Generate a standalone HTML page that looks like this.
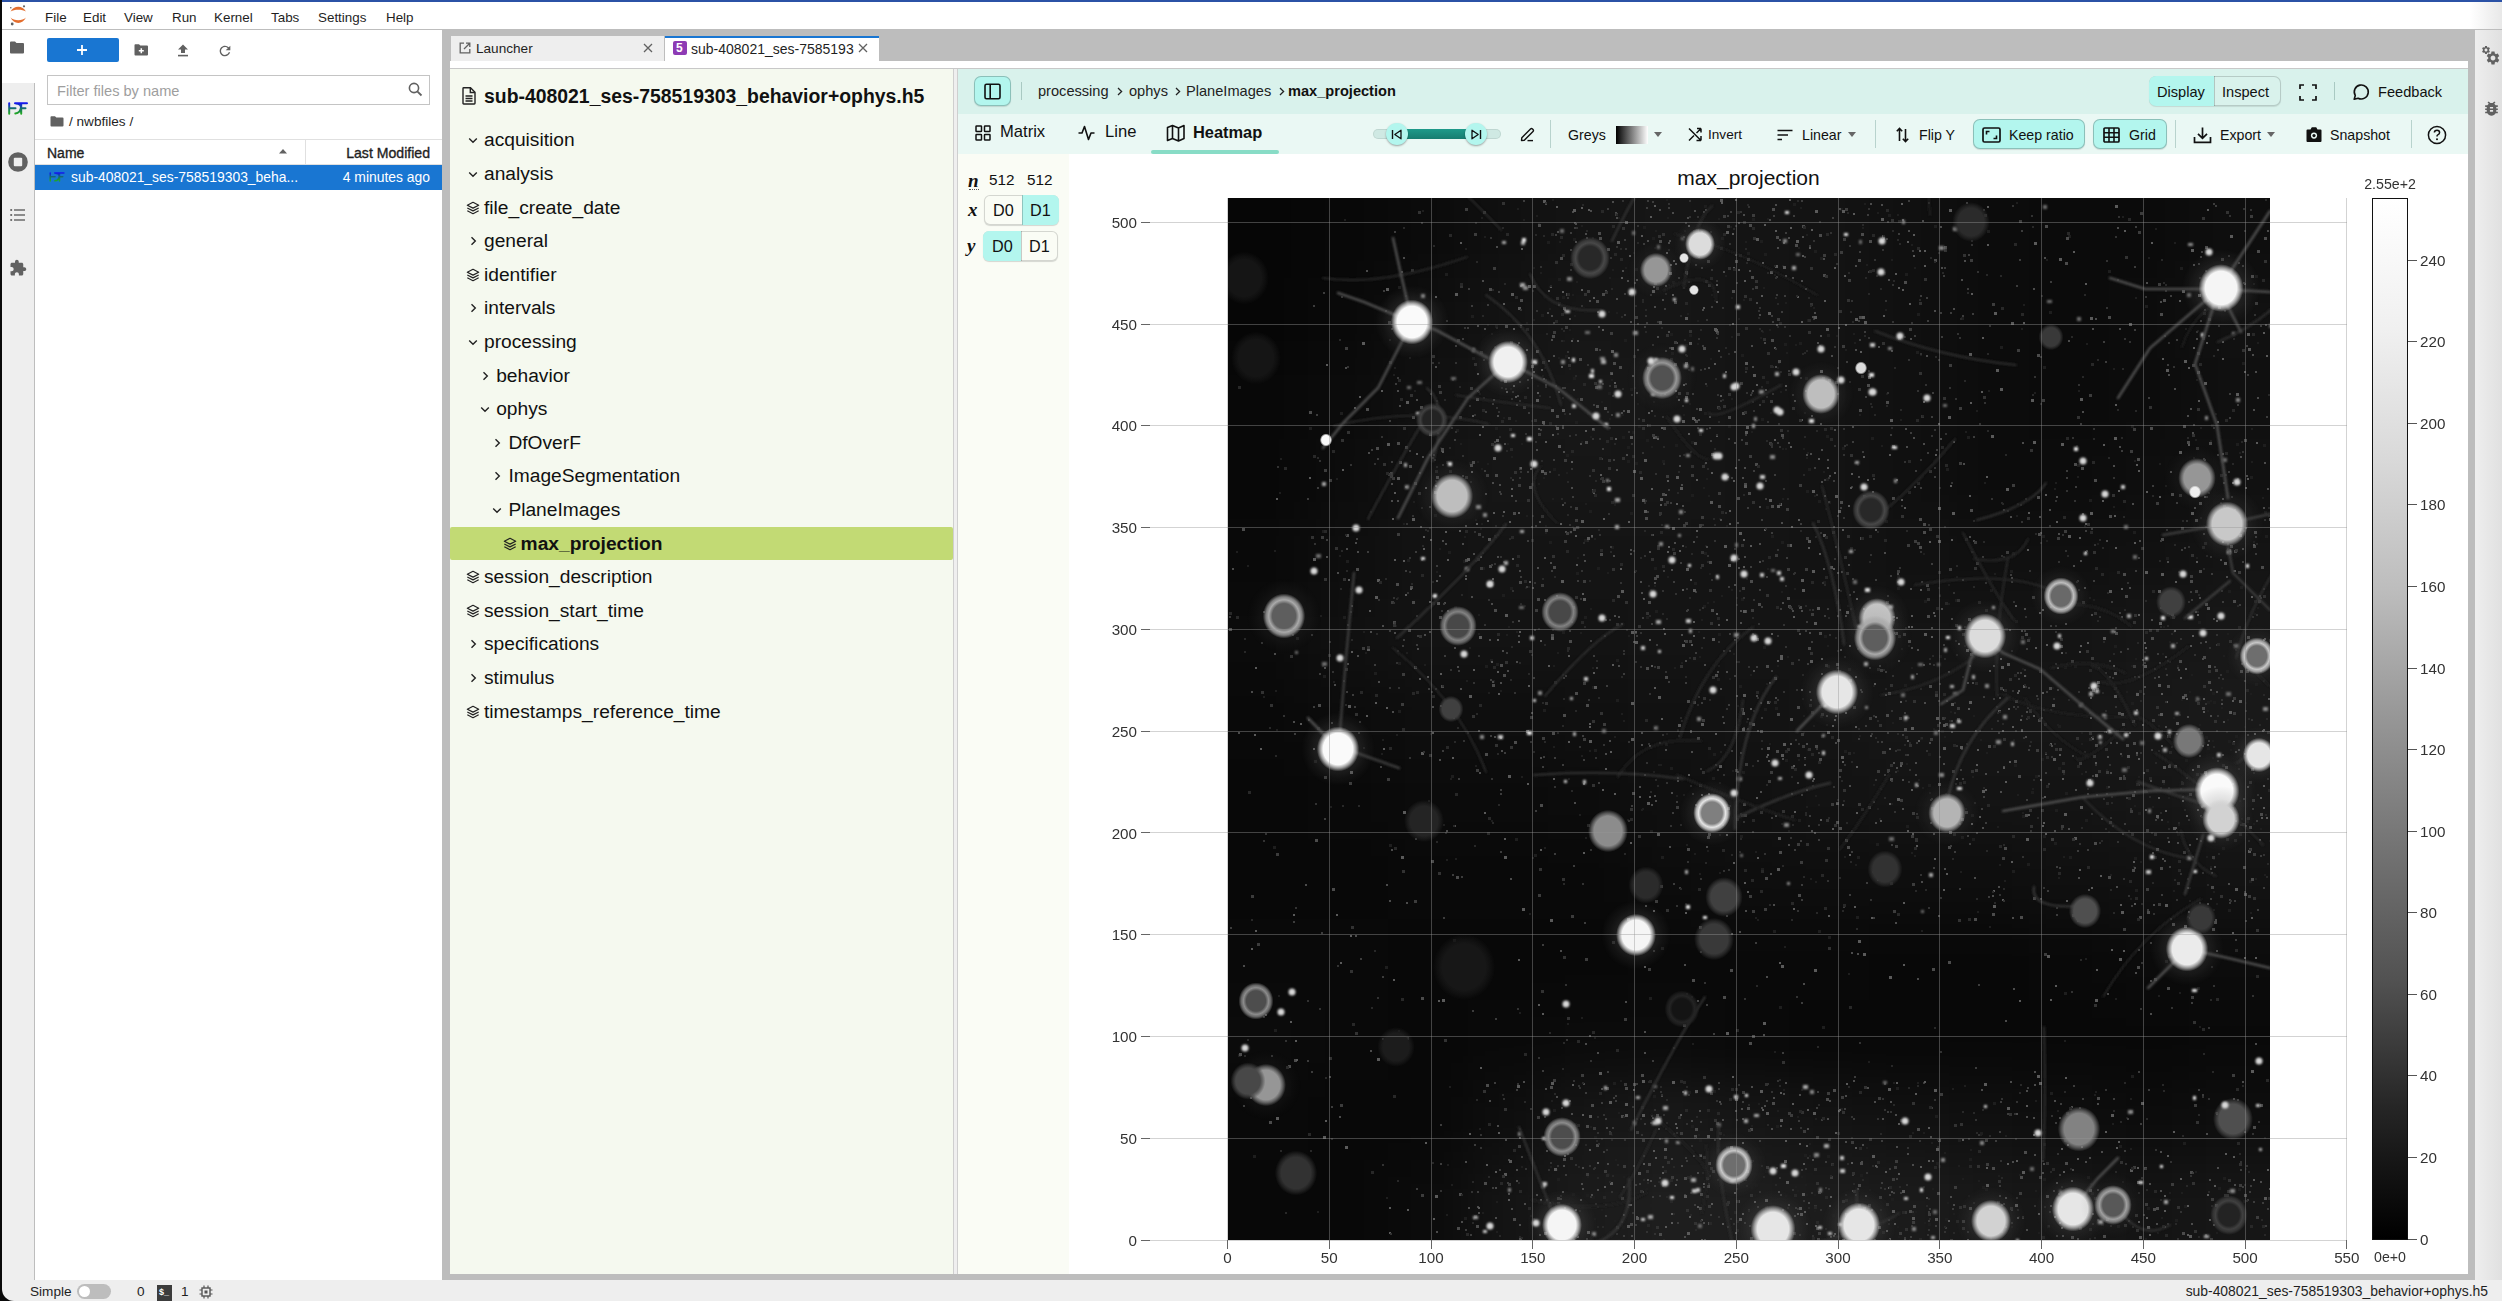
<!DOCTYPE html><html><head><meta charset="utf-8"><style>
*{box-sizing:border-box;margin:0;padding:0}
html,body{width:2502px;height:1301px;overflow:hidden;background:#fff;font-family:"Liberation Sans", sans-serif;color:rgba(0,0,0,0.87)}
.a{position:absolute}
.t{position:absolute;white-space:nowrap;line-height:1}
svg{position:absolute;overflow:visible}
</style></head><body>
<div class="a" style="left:0;top:0;width:2502px;height:2px;background:#2b52a6"></div>
<div class="a" style="left:0;top:0;width:2px;height:1301px;background:#0a0a0a"></div>
<div class="a" style="left:2px;top:2px;width:2500px;height:28px;background:#fff;border-bottom:1px solid #bdbdbd"></div>
<svg style="left:9px;top:5px" width="20" height="22" viewBox="0 0 20 22">
<path d="M1.6 6.6 C4.5 0.2 14 0.2 16.9 6.6 C13.5 4.0 5 4.0 1.6 6.6Z" fill="#e46e2e"/>
<path d="M1.6 12.6 C4.5 19.8 14 19.8 16.9 12.6 C13.5 16.2 5 16.2 1.6 12.6Z" fill="#e46e2e"/>
<circle cx="3.2" cy="19" r="1.4" fill="#616161"/><circle cx="15" cy="1.3" r="1.1" fill="#616161"/><circle cx="1.8" cy="2.8" r="0.8" fill="#616161"/>
</svg>
<div class="t" style="left:45px;top:11px;font-size:13.4px;color:#1f1f1f">File</div>
<div class="t" style="left:83px;top:11px;font-size:13.4px;color:#1f1f1f">Edit</div>
<div class="t" style="left:124px;top:11px;font-size:13.4px;color:#1f1f1f">View</div>
<div class="t" style="left:172px;top:11px;font-size:13.4px;color:#1f1f1f">Run</div>
<div class="t" style="left:214px;top:11px;font-size:13.4px;color:#1f1f1f">Kernel</div>
<div class="t" style="left:271px;top:11px;font-size:13.4px;color:#1f1f1f">Tabs</div>
<div class="t" style="left:318px;top:11px;font-size:13.4px;color:#1f1f1f">Settings</div>
<div class="t" style="left:386px;top:11px;font-size:13.4px;color:#1f1f1f">Help</div>
<div class="a" style="left:2470px;top:2px;width:32px;height:27px;background:linear-gradient(90deg,#fff,#e8e8e8)"></div>
<div class="a" style="left:2px;top:30px;width:33px;height:1250px;background:#eeeeee;border-right:1px solid #bdbdbd"></div>
<div class="a" style="left:2px;top:30px;width:34px;height:53px;background:#fff"></div>
<svg style="left:9px;top:41px" width="16" height="13" viewBox="0 0 16 13"><path d="M1 1.5 Q1 0.5 2 0.5 H6 L7.5 2 H14 Q15 2 15 3 V11.5 Q15 12.5 14 12.5 H2 Q1 12.5 1 11.5Z" fill="#616161"/></svg>
<svg style="left:8px;top:102px" width="20" height="13" viewBox="0 0 20 13"><defs><linearGradient id="hg1" x1="0" y1="0" x2="0" y2="1"><stop offset="0" stop-color="#1414f0"/><stop offset="0.5" stop-color="#14706a"/><stop offset="1" stop-color="#22aa22"/></linearGradient></defs><g stroke="url(#hg1)" stroke-width="2" fill="none" stroke-linecap="round"><path d="M1.2 1.2V11.8M1.2 6.3H7.5M7 1.2H19M13.2 1.5V11.8M13 6.3H17.5M7.3 11.5Q12.5 11 13 5Q12.5 1.8 8 1.5"/></g></svg>
<svg style="left:8px;top:151.5px" width="20" height="20" viewBox="0 0 20 20"><circle cx="10" cy="10" r="9.8" fill="#616161"/><rect x="5.8" y="5.8" width="8.4" height="8.4" rx="1" fill="#eee"/></svg>
<svg style="left:10px;top:208px" width="16" height="14" viewBox="0 0 16 14"><g fill="#616161"><circle cx="1.2" cy="2" r="1.1"/><circle cx="1.2" cy="7" r="1.1"/><circle cx="1.2" cy="12" r="1.1"/><rect x="4" y="1.3" width="11" height="1.4"/><rect x="4" y="6.3" width="11" height="1.4"/><rect x="4" y="11.3" width="11" height="1.4"/></g></svg>
<svg style="left:9px;top:259px" width="18" height="18" viewBox="0 0 24 24"><path fill="#616161" d="M20.5 11H19V7c0-1.1-.9-2-2-2h-4V3.5C13 2.12 11.88 1 10.5 1S8 2.12 8 3.5V5H4c-1.1 0-1.99.9-1.99 2v3.8H3.5c1.49 0 2.7 1.21 2.7 2.7s-1.21 2.7-2.7 2.7H2V20c0 1.1.9 2 2 2h3.8v-1.5c0-1.49 1.21-2.7 2.7-2.7 1.49 0 2.7 1.21 2.7 2.7V22H17c1.1 0 2-.9 2-2v-4h1.5c1.38 0 2.5-1.12 2.5-2.5S21.88 11 20.5 11z"/></svg>
<div class="a" style="left:35px;top:30px;width:407px;height:1250px;background:#fff"></div>
<div class="a" style="left:47px;top:38px;width:72px;height:24px;background:#1976d2;border-radius:2px"></div>
<svg style="left:76px;top:44px" width="12" height="12" viewBox="0 0 12 12"><path d="M6 1V11M1 6H11" stroke="#fff" stroke-width="1.8"/></svg>
<svg style="left:134px;top:44px" width="15" height="12" viewBox="0 0 15 12"><path d="M0.5 1.2 Q0.5 0.3 1.4 0.3 H5 L6.3 1.6 H13 Q14 1.6 14 2.6 V10.6 Q14 11.5 13 11.5 H1.4 Q0.5 11.5 0.5 10.6Z" fill="#616161"/><path d="M7.3 4.3V9.3M4.8 6.8H9.8" stroke="#fff" stroke-width="1.5"/></svg>
<svg style="left:177px;top:44px" width="12" height="13" viewBox="0 0 12 13"><path d="M6 0.5 L11 5.5 H8 V9 H4 V5.5 H1Z" fill="#616161"/><rect x="1" y="10.8" width="10" height="1.6" fill="#616161"/></svg>
<svg style="left:216.5px;top:42.5px" width="16" height="16" viewBox="0 0 24 24"><path fill="#616161" d="M17.65 6.35A7.958 7.958 0 0 0 12 4c-4.42 0-7.99 3.58-7.99 8s3.57 8 7.99 8c3.73 0 6.84-2.55 7.73-6h-2.08A5.99 5.99 0 0 1 12 18c-3.31 0-6-2.69-6-6s2.69-6 6-6c1.66 0 3.14.69 4.22 1.78L13 11h7V4l-2.35 2.35z"/></svg>
<div class="a" style="left:47px;top:75px;width:383px;height:30px;border:1px solid #c4c4c4;background:#fff"></div>
<div class="t" style="left:57px;top:84px;font-size:14.6px;color:#9e9e9e">Filter files by name</div>
<svg style="left:408px;top:82px" width="15" height="15" viewBox="0 0 15 15"><circle cx="6" cy="6" r="4.6" stroke="#616161" stroke-width="1.6" fill="none"/><path d="M9.3 9.3 L13.5 13.5" stroke="#616161" stroke-width="1.8"/></svg>
<svg style="left:50px;top:116px" width="14" height="11" viewBox="0 0 14 11"><path d="M0.5 1.2 Q0.5 0.3 1.4 0.3 H5 L6.3 1.6 H12.5 Q13.5 1.6 13.5 2.6 V9.6 Q13.5 10.5 12.5 10.5 H1.4 Q0.5 10.5 0.5 9.6Z" fill="#616161"/></svg>
<div class="t" style="left:69px;top:115px;font-size:13.6px;color:#1f1f1f">/ nwbfiles /</div>
<div class="a" style="left:35px;top:139px;width:407px;height:26px;border-top:1px solid #e0e0e0;border-bottom:1px solid #e0e0e0"></div>
<div class="a" style="left:305px;top:140px;width:1px;height:25px;background:#e0e0e0"></div>
<div class="t" style="left:47px;top:146px;font-size:14px;color:#1f1f1f;-webkit-text-stroke:0.35px #1f1f1f">Name</div>
<svg style="left:278px;top:148px" width="10" height="6" viewBox="0 0 10 6"><path d="M1 5.5 L5 1 L9 5.5Z" fill="#616161"/></svg>
<div class="t" style="right:2072px;top:146px;font-size:14.1px;color:#1f1f1f;-webkit-text-stroke:0.35px #1f1f1f">Last Modified</div>
<div class="a" style="left:35px;top:165px;width:407px;height:25px;background:#1976d2"></div>
<svg style="left:49px;top:172px" width="16" height="10" viewBox="0 0 20 13"><defs><linearGradient id="hg2" x1="0" y1="0" x2="0" y2="1"><stop offset="0" stop-color="#1414f0"/><stop offset="0.5" stop-color="#14706a"/><stop offset="1" stop-color="#22aa22"/></linearGradient></defs><g stroke="url(#hg2)" stroke-width="2" fill="none" stroke-linecap="round"><path d="M1.2 1.2V11.8M1.2 6.3H7.5M7 1.2H19M13.2 1.5V11.8M13 6.3H17.5M7.3 11.5Q12.5 11 13 5Q12.5 1.8 8 1.5"/></g></svg>
<div class="t" style="left:71px;top:171px;font-size:13.9px;color:#fff">sub-408021_ses-758519303_beha...</div>
<div class="t" style="right:2072px;top:171px;font-size:13.9px;color:#fff">4 minutes ago</div>
<div class="a" style="left:442px;top:30px;width:2026px;height:1250px;background:#bdbdbd"></div>
<div class="a" style="left:450px;top:35px;width:215px;height:26px;background:#eeeeee;border:1px solid #bdbdbd;border-bottom:none"></div>
<svg style="left:459px;top:42px" width="12" height="12" viewBox="0 0 12 12"><path d="M5 1.2 H1.2 V10.8 H10.8 V7" stroke="#616161" stroke-width="1.3" fill="none"/><path d="M7 1.2 H10.8 V5 M10.8 1.2 L5 7" stroke="#616161" stroke-width="1.3" fill="none"/></svg>
<div class="t" style="left:476px;top:42px;font-size:13.6px;color:#1f1f1f">Launcher</div>
<svg style="left:643px;top:43px" width="10" height="10" viewBox="0 0 10 10"><path d="M1 1L9 9M9 1L1 9" stroke="#616161" stroke-width="1.3"/></svg>
<div class="a" style="left:665px;top:36px;width:214px;height:25px;background:#fff;border-top:2px solid #1976d2"></div>
<div class="a" style="left:673px;top:41px;width:14px;height:14px;background:#8e3bb5;border-radius:2px"></div>
<div class="t" style="left:676px;top:42px;font-size:12px;color:#fff;font-weight:bold">5</div>
<div class="t" style="left:691px;top:42px;font-size:14px;color:#1f1f1f">sub-408021_ses-7585193</div>
<svg style="left:858px;top:43px" width="10" height="10" viewBox="0 0 10 10"><path d="M1 1L9 9M9 1L1 9" stroke="#616161" stroke-width="1.3"/></svg>
<div class="a" style="left:450px;top:61px;width:2018px;height:8px;background:#fff;border-bottom:1px solid #c8c8c8"></div>
<div class="a" style="left:450px;top:69px;width:503px;height:1205px;background:#f5f9ef"></div>
<div class="a" style="left:953px;top:69px;width:5px;height:1205px;background:#efefef;border-left:1px solid #cfcfcf;border-right:1px solid #cfcfcf"></div>
<svg style="left:462px;top:87px" width="14" height="18" viewBox="0 0 14 18"><path d="M1 1.5 Q1 0.8 1.7 0.8 H8.5 L13 5.3 V16.3 Q13 17 12.3 17 H1.7 Q1 17 1 16.3Z" stroke="#222" stroke-width="1.4" fill="none"/><path d="M8.3 1 V5.5 H12.8" stroke="#222" stroke-width="1.4" fill="none"/><path d="M3.5 9H10.5M3.5 11.5H10.5M3.5 14H10.5" stroke="#222" stroke-width="1.3"/></svg>
<div class="t" style="left:484px;top:87px;font-size:19.4px;font-weight:bold;color:#111">sub-408021_ses-758519303_behavior+ophys.h5</div>
<svg style="left:468.0px;top:137.4px" width="10" height="7" viewBox="0 0 10 7"><path d="M1.2 1.5 L5 5.3 L8.8 1.5" stroke="#222" stroke-width="1.4" fill="none"/></svg>
<div class="t" style="left:484.0px;top:130.4px;font-size:19.2px;font-weight:normal;color:#111">acquisition</div>
<svg style="left:468.0px;top:171.0px" width="10" height="7" viewBox="0 0 10 7"><path d="M1.2 1.5 L5 5.3 L8.8 1.5" stroke="#222" stroke-width="1.4" fill="none"/></svg>
<div class="t" style="left:484.0px;top:164.0px;font-size:19.2px;font-weight:normal;color:#111">analysis</div>
<svg style="left:466.0px;top:200.6px" width="14" height="14" viewBox="0 0 16 16"><path d="M8 1.5 L14.5 4.8 L8 8.1 L1.5 4.8Z" stroke="#222" stroke-width="1.4" fill="none" stroke-linejoin="round"/><path d="M1.5 8 L8 11.3 L14.5 8" stroke="#222" stroke-width="1.4" fill="none" stroke-linejoin="round"/><path d="M1.5 11.2 L8 14.5 L14.5 11.2" stroke="#222" stroke-width="1.4" fill="none" stroke-linejoin="round"/></svg>
<div class="t" style="left:484.0px;top:197.6px;font-size:19.2px;font-weight:normal;color:#111">file_create_date</div>
<svg style="left:470.0px;top:236.2px" width="7" height="10" viewBox="0 0 7 10"><path d="M1.5 1.2 L5.3 5 L1.5 8.8" stroke="#222" stroke-width="1.4" fill="none"/></svg>
<div class="t" style="left:484.0px;top:231.2px;font-size:19.2px;font-weight:normal;color:#111">general</div>
<svg style="left:466.0px;top:267.8px" width="14" height="14" viewBox="0 0 16 16"><path d="M8 1.5 L14.5 4.8 L8 8.1 L1.5 4.8Z" stroke="#222" stroke-width="1.4" fill="none" stroke-linejoin="round"/><path d="M1.5 8 L8 11.3 L14.5 8" stroke="#222" stroke-width="1.4" fill="none" stroke-linejoin="round"/><path d="M1.5 11.2 L8 14.5 L14.5 11.2" stroke="#222" stroke-width="1.4" fill="none" stroke-linejoin="round"/></svg>
<div class="t" style="left:484.0px;top:264.8px;font-size:19.2px;font-weight:normal;color:#111">identifier</div>
<svg style="left:470.0px;top:303.4px" width="7" height="10" viewBox="0 0 7 10"><path d="M1.5 1.2 L5.3 5 L1.5 8.8" stroke="#222" stroke-width="1.4" fill="none"/></svg>
<div class="t" style="left:484.0px;top:298.4px;font-size:19.2px;font-weight:normal;color:#111">intervals</div>
<svg style="left:468.0px;top:339.0px" width="10" height="7" viewBox="0 0 10 7"><path d="M1.2 1.5 L5 5.3 L8.8 1.5" stroke="#222" stroke-width="1.4" fill="none"/></svg>
<div class="t" style="left:484.0px;top:332.0px;font-size:19.2px;font-weight:normal;color:#111">processing</div>
<svg style="left:482.2px;top:370.6px" width="7" height="10" viewBox="0 0 7 10"><path d="M1.5 1.2 L5.3 5 L1.5 8.8" stroke="#222" stroke-width="1.4" fill="none"/></svg>
<div class="t" style="left:496.2px;top:365.6px;font-size:19.2px;font-weight:normal;color:#111">behavior</div>
<svg style="left:480.2px;top:406.2px" width="10" height="7" viewBox="0 0 10 7"><path d="M1.2 1.5 L5 5.3 L8.8 1.5" stroke="#222" stroke-width="1.4" fill="none"/></svg>
<div class="t" style="left:496.2px;top:399.2px;font-size:19.2px;font-weight:normal;color:#111">ophys</div>
<svg style="left:494.4px;top:437.8px" width="7" height="10" viewBox="0 0 7 10"><path d="M1.5 1.2 L5.3 5 L1.5 8.8" stroke="#222" stroke-width="1.4" fill="none"/></svg>
<div class="t" style="left:508.4px;top:432.8px;font-size:19.2px;font-weight:normal;color:#111">DfOverF</div>
<svg style="left:494.4px;top:471.4px" width="7" height="10" viewBox="0 0 7 10"><path d="M1.5 1.2 L5.3 5 L1.5 8.8" stroke="#222" stroke-width="1.4" fill="none"/></svg>
<div class="t" style="left:508.4px;top:466.4px;font-size:19.2px;font-weight:normal;color:#111">ImageSegmentation</div>
<svg style="left:492.4px;top:507.0px" width="10" height="7" viewBox="0 0 10 7"><path d="M1.2 1.5 L5 5.3 L8.8 1.5" stroke="#222" stroke-width="1.4" fill="none"/></svg>
<div class="t" style="left:508.4px;top:500.0px;font-size:19.2px;font-weight:normal;color:#111">PlaneImages</div>
<div class="a" style="left:450px;top:526.6px;width:503px;height:33px;background:#c2da74;border-radius:2px"></div>
<svg style="left:502.6px;top:536.6px" width="14" height="14" viewBox="0 0 16 16"><path d="M8 1.5 L14.5 4.8 L8 8.1 L1.5 4.8Z" stroke="#222" stroke-width="1.4" fill="none" stroke-linejoin="round"/><path d="M1.5 8 L8 11.3 L14.5 8" stroke="#222" stroke-width="1.4" fill="none" stroke-linejoin="round"/><path d="M1.5 11.2 L8 14.5 L14.5 11.2" stroke="#222" stroke-width="1.4" fill="none" stroke-linejoin="round"/></svg>
<div class="t" style="left:520.6px;top:533.6px;font-size:19.2px;font-weight:bold;color:#111">max_projection</div>
<svg style="left:466.0px;top:570.2px" width="14" height="14" viewBox="0 0 16 16"><path d="M8 1.5 L14.5 4.8 L8 8.1 L1.5 4.8Z" stroke="#222" stroke-width="1.4" fill="none" stroke-linejoin="round"/><path d="M1.5 8 L8 11.3 L14.5 8" stroke="#222" stroke-width="1.4" fill="none" stroke-linejoin="round"/><path d="M1.5 11.2 L8 14.5 L14.5 11.2" stroke="#222" stroke-width="1.4" fill="none" stroke-linejoin="round"/></svg>
<div class="t" style="left:484.0px;top:567.2px;font-size:19.2px;font-weight:normal;color:#111">session_description</div>
<svg style="left:466.0px;top:603.8px" width="14" height="14" viewBox="0 0 16 16"><path d="M8 1.5 L14.5 4.8 L8 8.1 L1.5 4.8Z" stroke="#222" stroke-width="1.4" fill="none" stroke-linejoin="round"/><path d="M1.5 8 L8 11.3 L14.5 8" stroke="#222" stroke-width="1.4" fill="none" stroke-linejoin="round"/><path d="M1.5 11.2 L8 14.5 L14.5 11.2" stroke="#222" stroke-width="1.4" fill="none" stroke-linejoin="round"/></svg>
<div class="t" style="left:484.0px;top:600.8px;font-size:19.2px;font-weight:normal;color:#111">session_start_time</div>
<svg style="left:470.0px;top:639.4px" width="7" height="10" viewBox="0 0 7 10"><path d="M1.5 1.2 L5.3 5 L1.5 8.8" stroke="#222" stroke-width="1.4" fill="none"/></svg>
<div class="t" style="left:484.0px;top:634.4px;font-size:19.2px;font-weight:normal;color:#111">specifications</div>
<svg style="left:470.0px;top:673.0px" width="7" height="10" viewBox="0 0 7 10"><path d="M1.5 1.2 L5.3 5 L1.5 8.8" stroke="#222" stroke-width="1.4" fill="none"/></svg>
<div class="t" style="left:484.0px;top:668.0px;font-size:19.2px;font-weight:normal;color:#111">stimulus</div>
<svg style="left:466.0px;top:704.6px" width="14" height="14" viewBox="0 0 16 16"><path d="M8 1.5 L14.5 4.8 L8 8.1 L1.5 4.8Z" stroke="#222" stroke-width="1.4" fill="none" stroke-linejoin="round"/><path d="M1.5 8 L8 11.3 L14.5 8" stroke="#222" stroke-width="1.4" fill="none" stroke-linejoin="round"/><path d="M1.5 11.2 L8 14.5 L14.5 11.2" stroke="#222" stroke-width="1.4" fill="none" stroke-linejoin="round"/></svg>
<div class="t" style="left:484.0px;top:701.6px;font-size:19.2px;font-weight:normal;color:#111">timestamps_reference_time</div>
<div class="a" style="left:958px;top:69px;width:1510px;height:45px;background:#d9f2ec"></div>
<div class="a" style="left:974px;top:76px;width:37px;height:30px;background:#b3f6ee;border-radius:7px;box-shadow:inset 0 0 0 1px rgba(0,0,0,0.22),0 1px 1px rgba(0,0,0,0.12)"></div>
<svg style="left:984px;top:83px" width="17" height="17" viewBox="0 0 17 17"><rect x="1" y="1.3" width="15" height="14.4" rx="1.5" stroke="#111" stroke-width="1.6" fill="none"/><path d="M6.2 1.3V15.7" stroke="#111" stroke-width="1.6"/></svg>
<div class="a" style="left:1021px;top:82px;width:1px;height:18px;background:#a9c9c2"></div>
<div class="t" style="left:1038px;top:84px;font-size:14.6px;color:#222">processing</div>
<div class="t" style="left:1129px;top:84px;font-size:14.6px;color:#222">ophys</div>
<div class="t" style="left:1186px;top:84px;font-size:14.6px;color:#222">PlaneImages</div>
<div class="t" style="left:1288px;top:84px;font-size:14.6px;color:#111;font-weight:bold">max_projection</div>
<svg style="left:1117px;top:87px" width="6" height="9" viewBox="0 0 6 9"><path d="M1 1 L4.6 4.5 L1 8" stroke="#222" stroke-width="1.3" fill="none"/></svg>
<svg style="left:1175px;top:87px" width="6" height="9" viewBox="0 0 6 9"><path d="M1 1 L4.6 4.5 L1 8" stroke="#222" stroke-width="1.3" fill="none"/></svg>
<svg style="left:1279px;top:87px" width="6" height="9" viewBox="0 0 6 9"><path d="M1 1 L4.6 4.5 L1 8" stroke="#222" stroke-width="1.3" fill="none"/></svg>
<div class="a" style="left:2149px;top:76px;width:132px;height:30px;border-radius:7px;background:#d9f2ec;box-shadow:inset 0 0 0 1px rgba(0,0,0,0.16),0 1px 1px rgba(0,0,0,0.1);overflow:hidden"><div class="a" style="left:0;top:0;width:65px;height:30px;background:#b3f6ee"></div><div class="a" style="left:65px;top:0;width:1px;height:30px;background:rgba(0,0,0,0.18)"></div></div>
<div class="t" style="left:2157px;top:85px;font-size:14.6px;color:#111">Display</div>
<div class="t" style="left:2222px;top:85px;font-size:14.6px;color:#111">Inspect</div>
<svg style="left:2299px;top:84px" width="18" height="17" viewBox="0 0 18 17"><path d="M1 5V1H5M13 1H17V5M17 12V16H13M5 16H1V12" stroke="#111" stroke-width="1.7" fill="none"/></svg>
<div class="a" style="left:2334px;top:82px;width:1px;height:18px;background:#a9c9c2"></div>
<svg style="left:2352px;top:83px" width="18" height="18" viewBox="0 0 18 18"><path d="M2.2 16.3 L3.3 12.6 A7 7 0 1 1 6.1 15.2 Z" stroke="#111" stroke-width="1.6" fill="none" stroke-linejoin="round"/></svg>
<div class="t" style="left:2378px;top:85px;font-size:14.6px;color:#111">Feedback</div>
<div class="a" style="left:958px;top:114px;width:1510px;height:40px;background:#eaf8f4"></div>
<svg style="left:975px;top:125px" width="16" height="16" viewBox="0 0 16 16"><g stroke="#111" stroke-width="1.5" fill="none"><rect x="1" y="1" width="5.5" height="5.5" rx="0.6"/><rect x="9.5" y="1" width="5.5" height="5.5" rx="0.6"/><rect x="1" y="9.5" width="5.5" height="5.5" rx="0.6"/><rect x="9.5" y="9.5" width="5.5" height="5.5" rx="0.6"/></g></svg>
<div class="t" style="left:1000px;top:124px;font-size:16.6px;color:#111">Matrix</div>
<svg style="left:1078px;top:125px" width="18" height="16" viewBox="0 0 18 16"><path d="M0.5 8 H4 L6.5 1.5 L10.5 14.5 L13 8 H16.5" stroke="#111" stroke-width="1.6" fill="none" stroke-linejoin="round"/></svg>
<div class="t" style="left:1105px;top:124px;font-size:16.6px;color:#111">Line</div>
<svg style="left:1166px;top:124px" width="20" height="18" viewBox="0 0 20 18"><path d="M1.5 3.5 L6.5 1.5 L12.5 4 L18 1.5 V14.5 L12.5 17 L6.5 14.5 L1.5 16.5Z M6.5 1.5V14.5 M12.5 4V17" stroke="#111" stroke-width="1.6" fill="none" stroke-linejoin="round"/></svg>
<div class="t" style="left:1193px;top:124px;font-size:16.4px;color:#111;font-weight:bold">Heatmap</div>
<div class="a" style="left:1151px;top:150px;width:128px;height:4px;background:#88dcc6;border-radius:2px"></div>
<div class="a" style="left:1373px;top:129px;width:128px;height:10px;background:#cfe9e3;border-radius:5px;box-shadow:inset 0 0 0 1px rgba(0,0,0,0.08)"></div>
<div class="a" style="left:1397px;top:129px;width:79px;height:10px;background:linear-gradient(#1e9a8a,#167d70)"></div>
<div class="a" style="left:1386px;top:123px;width:22px;height:22px;border-radius:11px;background:#b3f6ee;box-shadow:0 1px 2px rgba(0,0,0,0.35)"></div>
<svg style="left:1391px;top:129px" width="12" height="11" viewBox="0 0 12 11"><path d="M1.5 1V10" stroke="#111" stroke-width="1.4"/><path d="M10 1.2 L3.8 5.5 L10 9.8Z" stroke="#111" stroke-width="1.3" fill="none" stroke-linejoin="round"/></svg>
<div class="a" style="left:1465px;top:123px;width:22px;height:22px;border-radius:11px;background:#b3f6ee;box-shadow:0 1px 2px rgba(0,0,0,0.35)"></div>
<svg style="left:1470px;top:129px" width="12" height="11" viewBox="0 0 12 11"><path d="M10.5 1V10" stroke="#111" stroke-width="1.4"/><path d="M2 1.2 L8.2 5.5 L2 9.8Z" stroke="#111" stroke-width="1.3" fill="none" stroke-linejoin="round"/></svg>
<svg style="left:1520px;top:127px" width="15" height="15" viewBox="0 0 15 15"><path d="M1.5 13.5 L1.8 10.8 L10.5 2 Q11.5 1 12.5 2 L13 2.5 Q14 3.5 13 4.5 L4.3 13.2Z" stroke="#111" stroke-width="1.4" fill="none" stroke-linejoin="round"/><path d="M7.5 13.6H13" stroke="#111" stroke-width="1.4"/></svg>
<div class="a" style="left:1550px;top:120px;width:1px;height:28px;background:#b8d3cd"></div>
<div class="a" style="left:1875px;top:120px;width:1px;height:28px;background:#b8d3cd"></div>
<div class="a" style="left:2175px;top:120px;width:1px;height:28px;background:#b8d3cd"></div>
<div class="a" style="left:2411px;top:120px;width:1px;height:28px;background:#b8d3cd"></div>
<div class="t" style="left:1568px;top:128px;font-size:14.2px;color:#111">Greys</div>
<div class="a" style="left:1616px;top:126px;width:32px;height:18px;background:linear-gradient(90deg,#000,#fff)"></div>
<svg style="left:1654px;top:132px" width="8" height="5" viewBox="0 0 8 5"><path d="M0 0H8L4 5Z" fill="#666"/></svg>
<svg style="left:1688px;top:127px" width="15" height="15" viewBox="0 0 15 15"><path d="M1 1.5 L13 13.5 M13 13.5 V9 M13 13.5 H8.5 M1 13.5 L6 8.5 M8.5 6 L13 1.5 M13 1.5 H9 M13 1.5 V5.5" stroke="#111" stroke-width="1.5" fill="none"/></svg>
<div class="t" style="left:1708px;top:128px;font-size:13.6px;color:#111">Invert</div>
<svg style="left:1777px;top:129px" width="16" height="12" viewBox="0 0 16 12"><path d="M0.5 1.5H15.5M0.5 6H11M0.5 10.5H5" stroke="#111" stroke-width="1.7"/></svg>
<div class="t" style="left:1802px;top:128px;font-size:14.2px;color:#111">Linear</div>
<svg style="left:1848px;top:132px" width="8" height="5" viewBox="0 0 8 5"><path d="M0 0H8L4 5Z" fill="#666"/></svg>
<svg style="left:1896px;top:127px" width="13" height="16" viewBox="0 0 13 16"><path d="M3.5 14V1.5 M0.8 4.3 L3.5 1.5 L6.2 4.3 M9.5 2V14.5 M6.8 11.7 L9.5 14.5 L12.2 11.7" stroke="#111" stroke-width="1.6" fill="none"/></svg>
<div class="t" style="left:1919px;top:128px;font-size:14.2px;color:#111">Flip Y</div>
<div class="a" style="left:1973px;top:119px;width:112px;height:30px;background:#b3f6ee;border-radius:7px;box-shadow:inset 0 0 0 1px rgba(0,0,0,0.22),0 1px 1px rgba(0,0,0,0.12)"></div>
<div class="a" style="left:2093px;top:119px;width:74px;height:30px;background:#b3f6ee;border-radius:7px;box-shadow:inset 0 0 0 1px rgba(0,0,0,0.22),0 1px 1px rgba(0,0,0,0.12)"></div>
<svg style="left:1982px;top:127px" width="19" height="16" viewBox="0 0 19 16"><rect x="1" y="1" width="17" height="14" rx="1.5" stroke="#111" stroke-width="1.7" fill="none"/><path d="M4.5 7.5V4.5H7.5M14.5 8.5V11.5H11.5" stroke="#111" stroke-width="1.6" fill="none"/></svg>
<div class="t" style="left:2009px;top:128px;font-size:14.2px;color:#111">Keep ratio</div>
<svg style="left:2103px;top:127px" width="17" height="16" viewBox="0 0 17 16"><rect x="1" y="1" width="15" height="14" rx="1" stroke="#111" stroke-width="1.7" fill="none"/><path d="M6 1V15M11 1V15M1 5.7H16M1 10.3H16" stroke="#111" stroke-width="1.6"/></svg>
<div class="t" style="left:2129px;top:128px;font-size:14.2px;color:#111">Grid</div>
<svg style="left:2193px;top:126px" width="19" height="18" viewBox="0 0 19 18"><path d="M9.5 1.5V12 M5 7.8 L9.5 12.3 L14 7.8" stroke="#111" stroke-width="1.7" fill="none"/><path d="M1.5 11V16.3H17.5V11" stroke="#111" stroke-width="1.7" fill="none"/></svg>
<div class="t" style="left:2220px;top:128px;font-size:14.2px;color:#111">Export</div>
<svg style="left:2267px;top:132px" width="8" height="5" viewBox="0 0 8 5"><path d="M0 0H8L4 5Z" fill="#666"/></svg>
<svg style="left:2305px;top:126px" width="18" height="17" viewBox="0 0 18 17"><path d="M1.5 4.5 Q1.5 3.5 2.5 3.5 H5.5 L6.8 1.2 H11.2 L12.5 3.5 H15.5 Q16.5 3.5 16.5 4.5 V15 Q16.5 16 15.5 16 H2.5 Q1.5 16 1.5 15Z" fill="#111"/><circle cx="9" cy="9.6" r="3.1" fill="#eaf8f4"/><circle cx="9" cy="9.6" r="1.6" fill="#111"/></svg>
<div class="t" style="left:2330px;top:128px;font-size:14.2px;color:#111">Snapshot</div>
<svg style="left:2427px;top:125px" width="20" height="20" viewBox="0 0 20 20"><circle cx="10" cy="10" r="8.6" stroke="#111" stroke-width="1.5" fill="none"/><path d="M7.4 7.6 Q7.4 5.2 10 5.2 Q12.6 5.2 12.6 7.6 Q12.6 9.2 10.8 9.9 Q10 10.3 10 11.4" stroke="#111" stroke-width="1.5" fill="none"/><circle cx="10" cy="14.2" r="1" fill="#111"/></svg>
<div class="a" style="left:958px;top:154px;width:111px;height:1120px;background:#fafcf5"></div>
<div class="t" style="left:968px;top:171px;font-size:19px;font-family:'Liberation Serif',serif;font-style:italic;font-weight:bold;color:#111">n</div>
<div class="a" style="left:969px;top:189px;width:10px;height:0;border-top:1px dotted #555"></div>
<div class="t" style="left:989px;top:172px;font-size:15.3px;color:#111">512</div>
<div class="t" style="left:1027px;top:172px;font-size:15.3px;color:#111">512</div>
<div class="t" style="left:968px;top:200px;font-size:19px;font-family:'Liberation Serif',serif;font-style:italic;font-weight:bold;color:#111">x</div>
<div class="t" style="left:967px;top:236px;font-size:19px;font-family:'Liberation Serif',serif;font-style:italic;font-weight:bold;color:#111">y</div>
<div class="a" style="left:984px;top:195px;width:75px;height:30px;border-radius:6px;background:#fafcf5;box-shadow:inset 0 0 0 1px rgba(0,0,0,0.15),0 1px 1px rgba(0,0,0,0.15);overflow:hidden"><div class="a" style="left:38px;top:0;width:37px;height:30px;background:#b3f6ee"></div><div class="a" style="left:38px;top:0;width:1px;height:30px;background:rgba(0,0,0,0.2)"></div></div>
<div class="t" style="left:993px;top:202px;font-size:16.2px;color:#111">D0</div>
<div class="t" style="left:1030px;top:202px;font-size:16.2px;color:#111">D1</div>
<div class="a" style="left:983px;top:231px;width:75px;height:30px;border-radius:6px;background:#fafcf5;box-shadow:inset 0 0 0 1px rgba(0,0,0,0.15),0 1px 1px rgba(0,0,0,0.15);overflow:hidden"><div class="a" style="left:0;top:0;width:38px;height:30px;background:#b3f6ee"></div><div class="a" style="left:38px;top:0;width:1px;height:30px;background:rgba(0,0,0,0.2)"></div></div>
<div class="t" style="left:992px;top:238px;font-size:16.2px;color:#111">D0</div>
<div class="t" style="left:1029px;top:238px;font-size:16.2px;color:#111">D1</div>
<div class="a" style="left:1069px;top:154px;width:1399px;height:1120px;background:#fff"></div>
<div class="t" style="left:1748.5px;top:166.5px;font-size:21px;color:#111;transform:translateX(-50%)">max_projection</div>
<div class="a" style="left:1227.5px;top:198.0px;width:1042.0px;height:1042.0px;overflow:hidden;background:#0c0c0c"><div class="a" style="left:-120px;top:-120px;width:1282px;height:1282px;filter:blur(26px)"><div class="a" style="left:-40.3px;top:-40.3px;width:81.2px;height:81.2px;background:rgb(6,6,6)"></div><div class="a" style="left:39.8px;top:-40.3px;width:81.2px;height:81.2px;background:rgb(6,6,6)"></div><div class="a" style="left:120.0px;top:-40.3px;width:81.2px;height:81.2px;background:rgb(6,6,6)"></div><div class="a" style="left:200.2px;top:-40.3px;width:81.2px;height:81.2px;background:rgb(8,8,8)"></div><div class="a" style="left:280.3px;top:-40.3px;width:81.2px;height:81.2px;background:rgb(11,11,11)"></div><div class="a" style="left:360.5px;top:-40.3px;width:81.2px;height:81.2px;background:rgb(16,16,16)"></div><div class="a" style="left:440.6px;top:-40.3px;width:81.2px;height:81.2px;background:rgb(20,20,20)"></div><div class="a" style="left:520.8px;top:-40.3px;width:81.2px;height:81.2px;background:rgb(22,22,22)"></div><div class="a" style="left:600.9px;top:-40.3px;width:81.2px;height:81.2px;background:rgb(20,20,20)"></div><div class="a" style="left:681.1px;top:-40.3px;width:81.2px;height:81.2px;background:rgb(19,19,19)"></div><div class="a" style="left:761.2px;top:-40.3px;width:81.2px;height:81.2px;background:rgb(16,16,16)"></div><div class="a" style="left:841.4px;top:-40.3px;width:81.2px;height:81.2px;background:rgb(12,12,12)"></div><div class="a" style="left:921.5px;top:-40.3px;width:81.2px;height:81.2px;background:rgb(11,11,11)"></div><div class="a" style="left:1001.7px;top:-40.3px;width:81.2px;height:81.2px;background:rgb(11,11,11)"></div><div class="a" style="left:1081.8px;top:-40.3px;width:81.2px;height:81.2px;background:rgb(14,14,14)"></div><div class="a" style="left:1162.0px;top:-40.3px;width:81.2px;height:81.2px;background:rgb(14,14,14)"></div><div class="a" style="left:1242.2px;top:-40.3px;width:81.2px;height:81.2px;background:rgb(14,14,14)"></div><div class="a" style="left:-40.3px;top:39.8px;width:81.2px;height:81.2px;background:rgb(6,6,6)"></div><div class="a" style="left:39.8px;top:39.8px;width:81.2px;height:81.2px;background:rgb(6,6,6)"></div><div class="a" style="left:120.0px;top:39.8px;width:81.2px;height:81.2px;background:rgb(6,6,6)"></div><div class="a" style="left:200.2px;top:39.8px;width:81.2px;height:81.2px;background:rgb(8,8,8)"></div><div class="a" style="left:280.3px;top:39.8px;width:81.2px;height:81.2px;background:rgb(11,11,11)"></div><div class="a" style="left:360.5px;top:39.8px;width:81.2px;height:81.2px;background:rgb(16,16,16)"></div><div class="a" style="left:440.6px;top:39.8px;width:81.2px;height:81.2px;background:rgb(20,20,20)"></div><div class="a" style="left:520.8px;top:39.8px;width:81.2px;height:81.2px;background:rgb(22,22,22)"></div><div class="a" style="left:600.9px;top:39.8px;width:81.2px;height:81.2px;background:rgb(20,20,20)"></div><div class="a" style="left:681.1px;top:39.8px;width:81.2px;height:81.2px;background:rgb(19,19,19)"></div><div class="a" style="left:761.2px;top:39.8px;width:81.2px;height:81.2px;background:rgb(16,16,16)"></div><div class="a" style="left:841.4px;top:39.8px;width:81.2px;height:81.2px;background:rgb(12,12,12)"></div><div class="a" style="left:921.5px;top:39.8px;width:81.2px;height:81.2px;background:rgb(11,11,11)"></div><div class="a" style="left:1001.7px;top:39.8px;width:81.2px;height:81.2px;background:rgb(11,11,11)"></div><div class="a" style="left:1081.8px;top:39.8px;width:81.2px;height:81.2px;background:rgb(14,14,14)"></div><div class="a" style="left:1162.0px;top:39.8px;width:81.2px;height:81.2px;background:rgb(14,14,14)"></div><div class="a" style="left:1242.2px;top:39.8px;width:81.2px;height:81.2px;background:rgb(14,14,14)"></div><div class="a" style="left:-40.3px;top:120.0px;width:81.2px;height:81.2px;background:rgb(6,6,6)"></div><div class="a" style="left:39.8px;top:120.0px;width:81.2px;height:81.2px;background:rgb(6,6,6)"></div><div class="a" style="left:120.0px;top:120.0px;width:81.2px;height:81.2px;background:rgb(6,6,6)"></div><div class="a" style="left:200.2px;top:120.0px;width:81.2px;height:81.2px;background:rgb(8,8,8)"></div><div class="a" style="left:280.3px;top:120.0px;width:81.2px;height:81.2px;background:rgb(11,11,11)"></div><div class="a" style="left:360.5px;top:120.0px;width:81.2px;height:81.2px;background:rgb(16,16,16)"></div><div class="a" style="left:440.6px;top:120.0px;width:81.2px;height:81.2px;background:rgb(20,20,20)"></div><div class="a" style="left:520.8px;top:120.0px;width:81.2px;height:81.2px;background:rgb(22,22,22)"></div><div class="a" style="left:600.9px;top:120.0px;width:81.2px;height:81.2px;background:rgb(20,20,20)"></div><div class="a" style="left:681.1px;top:120.0px;width:81.2px;height:81.2px;background:rgb(19,19,19)"></div><div class="a" style="left:761.2px;top:120.0px;width:81.2px;height:81.2px;background:rgb(16,16,16)"></div><div class="a" style="left:841.4px;top:120.0px;width:81.2px;height:81.2px;background:rgb(12,12,12)"></div><div class="a" style="left:921.5px;top:120.0px;width:81.2px;height:81.2px;background:rgb(11,11,11)"></div><div class="a" style="left:1001.7px;top:120.0px;width:81.2px;height:81.2px;background:rgb(11,11,11)"></div><div class="a" style="left:1081.8px;top:120.0px;width:81.2px;height:81.2px;background:rgb(14,14,14)"></div><div class="a" style="left:1162.0px;top:120.0px;width:81.2px;height:81.2px;background:rgb(14,14,14)"></div><div class="a" style="left:1242.2px;top:120.0px;width:81.2px;height:81.2px;background:rgb(14,14,14)"></div><div class="a" style="left:-40.3px;top:200.2px;width:81.2px;height:81.2px;background:rgb(6,6,6)"></div><div class="a" style="left:39.8px;top:200.2px;width:81.2px;height:81.2px;background:rgb(6,6,6)"></div><div class="a" style="left:120.0px;top:200.2px;width:81.2px;height:81.2px;background:rgb(6,6,6)"></div><div class="a" style="left:200.2px;top:200.2px;width:81.2px;height:81.2px;background:rgb(9,9,9)"></div><div class="a" style="left:280.3px;top:200.2px;width:81.2px;height:81.2px;background:rgb(14,14,14)"></div><div class="a" style="left:360.5px;top:200.2px;width:81.2px;height:81.2px;background:rgb(19,19,19)"></div><div class="a" style="left:440.6px;top:200.2px;width:81.2px;height:81.2px;background:rgb(22,22,22)"></div><div class="a" style="left:520.8px;top:200.2px;width:81.2px;height:81.2px;background:rgb(22,22,22)"></div><div class="a" style="left:600.9px;top:200.2px;width:81.2px;height:81.2px;background:rgb(20,20,20)"></div><div class="a" style="left:681.1px;top:200.2px;width:81.2px;height:81.2px;background:rgb(19,19,19)"></div><div class="a" style="left:761.2px;top:200.2px;width:81.2px;height:81.2px;background:rgb(16,16,16)"></div><div class="a" style="left:841.4px;top:200.2px;width:81.2px;height:81.2px;background:rgb(12,12,12)"></div><div class="a" style="left:921.5px;top:200.2px;width:81.2px;height:81.2px;background:rgb(11,11,11)"></div><div class="a" style="left:1001.7px;top:200.2px;width:81.2px;height:81.2px;background:rgb(12,12,12)"></div><div class="a" style="left:1081.8px;top:200.2px;width:81.2px;height:81.2px;background:rgb(17,17,17)"></div><div class="a" style="left:1162.0px;top:200.2px;width:81.2px;height:81.2px;background:rgb(17,17,17)"></div><div class="a" style="left:1242.2px;top:200.2px;width:81.2px;height:81.2px;background:rgb(17,17,17)"></div><div class="a" style="left:-40.3px;top:280.3px;width:81.2px;height:81.2px;background:rgb(8,8,8)"></div><div class="a" style="left:39.8px;top:280.3px;width:81.2px;height:81.2px;background:rgb(8,8,8)"></div><div class="a" style="left:120.0px;top:280.3px;width:81.2px;height:81.2px;background:rgb(8,8,8)"></div><div class="a" style="left:200.2px;top:280.3px;width:81.2px;height:81.2px;background:rgb(11,11,11)"></div><div class="a" style="left:280.3px;top:280.3px;width:81.2px;height:81.2px;background:rgb(17,17,17)"></div><div class="a" style="left:360.5px;top:280.3px;width:81.2px;height:81.2px;background:rgb(22,22,22)"></div><div class="a" style="left:440.6px;top:280.3px;width:81.2px;height:81.2px;background:rgb(24,24,24)"></div><div class="a" style="left:520.8px;top:280.3px;width:81.2px;height:81.2px;background:rgb(22,22,22)"></div><div class="a" style="left:600.9px;top:280.3px;width:81.2px;height:81.2px;background:rgb(20,20,20)"></div><div class="a" style="left:681.1px;top:280.3px;width:81.2px;height:81.2px;background:rgb(19,19,19)"></div><div class="a" style="left:761.2px;top:280.3px;width:81.2px;height:81.2px;background:rgb(16,16,16)"></div><div class="a" style="left:841.4px;top:280.3px;width:81.2px;height:81.2px;background:rgb(12,12,12)"></div><div class="a" style="left:921.5px;top:280.3px;width:81.2px;height:81.2px;background:rgb(11,11,11)"></div><div class="a" style="left:1001.7px;top:280.3px;width:81.2px;height:81.2px;background:rgb(12,12,12)"></div><div class="a" style="left:1081.8px;top:280.3px;width:81.2px;height:81.2px;background:rgb(16,16,16)"></div><div class="a" style="left:1162.0px;top:280.3px;width:81.2px;height:81.2px;background:rgb(16,16,16)"></div><div class="a" style="left:1242.2px;top:280.3px;width:81.2px;height:81.2px;background:rgb(16,16,16)"></div><div class="a" style="left:-40.3px;top:360.5px;width:81.2px;height:81.2px;background:rgb(8,8,8)"></div><div class="a" style="left:39.8px;top:360.5px;width:81.2px;height:81.2px;background:rgb(8,8,8)"></div><div class="a" style="left:120.0px;top:360.5px;width:81.2px;height:81.2px;background:rgb(8,8,8)"></div><div class="a" style="left:200.2px;top:360.5px;width:81.2px;height:81.2px;background:rgb(12,12,12)"></div><div class="a" style="left:280.3px;top:360.5px;width:81.2px;height:81.2px;background:rgb(19,19,19)"></div><div class="a" style="left:360.5px;top:360.5px;width:81.2px;height:81.2px;background:rgb(22,22,22)"></div><div class="a" style="left:440.6px;top:360.5px;width:81.2px;height:81.2px;background:rgb(22,22,22)"></div><div class="a" style="left:520.8px;top:360.5px;width:81.2px;height:81.2px;background:rgb(22,22,22)"></div><div class="a" style="left:600.9px;top:360.5px;width:81.2px;height:81.2px;background:rgb(20,20,20)"></div><div class="a" style="left:681.1px;top:360.5px;width:81.2px;height:81.2px;background:rgb(19,19,19)"></div><div class="a" style="left:761.2px;top:360.5px;width:81.2px;height:81.2px;background:rgb(16,16,16)"></div><div class="a" style="left:841.4px;top:360.5px;width:81.2px;height:81.2px;background:rgb(12,12,12)"></div><div class="a" style="left:921.5px;top:360.5px;width:81.2px;height:81.2px;background:rgb(12,12,12)"></div><div class="a" style="left:1001.7px;top:360.5px;width:81.2px;height:81.2px;background:rgb(14,14,14)"></div><div class="a" style="left:1081.8px;top:360.5px;width:81.2px;height:81.2px;background:rgb(17,17,17)"></div><div class="a" style="left:1162.0px;top:360.5px;width:81.2px;height:81.2px;background:rgb(17,17,17)"></div><div class="a" style="left:1242.2px;top:360.5px;width:81.2px;height:81.2px;background:rgb(17,17,17)"></div><div class="a" style="left:-40.3px;top:440.6px;width:81.2px;height:81.2px;background:rgb(9,9,9)"></div><div class="a" style="left:39.8px;top:440.6px;width:81.2px;height:81.2px;background:rgb(9,9,9)"></div><div class="a" style="left:120.0px;top:440.6px;width:81.2px;height:81.2px;background:rgb(9,9,9)"></div><div class="a" style="left:200.2px;top:440.6px;width:81.2px;height:81.2px;background:rgb(14,14,14)"></div><div class="a" style="left:280.3px;top:440.6px;width:81.2px;height:81.2px;background:rgb(19,19,19)"></div><div class="a" style="left:360.5px;top:440.6px;width:81.2px;height:81.2px;background:rgb(20,20,20)"></div><div class="a" style="left:440.6px;top:440.6px;width:81.2px;height:81.2px;background:rgb(20,20,20)"></div><div class="a" style="left:520.8px;top:440.6px;width:81.2px;height:81.2px;background:rgb(20,20,20)"></div><div class="a" style="left:600.9px;top:440.6px;width:81.2px;height:81.2px;background:rgb(20,20,20)"></div><div class="a" style="left:681.1px;top:440.6px;width:81.2px;height:81.2px;background:rgb(19,19,19)"></div><div class="a" style="left:761.2px;top:440.6px;width:81.2px;height:81.2px;background:rgb(17,17,17)"></div><div class="a" style="left:841.4px;top:440.6px;width:81.2px;height:81.2px;background:rgb(16,16,16)"></div><div class="a" style="left:921.5px;top:440.6px;width:81.2px;height:81.2px;background:rgb(16,16,16)"></div><div class="a" style="left:1001.7px;top:440.6px;width:81.2px;height:81.2px;background:rgb(17,17,17)"></div><div class="a" style="left:1081.8px;top:440.6px;width:81.2px;height:81.2px;background:rgb(20,20,20)"></div><div class="a" style="left:1162.0px;top:440.6px;width:81.2px;height:81.2px;background:rgb(20,20,20)"></div><div class="a" style="left:1242.2px;top:440.6px;width:81.2px;height:81.2px;background:rgb(20,20,20)"></div><div class="a" style="left:-40.3px;top:520.8px;width:81.2px;height:81.2px;background:rgb(11,11,11)"></div><div class="a" style="left:39.8px;top:520.8px;width:81.2px;height:81.2px;background:rgb(11,11,11)"></div><div class="a" style="left:120.0px;top:520.8px;width:81.2px;height:81.2px;background:rgb(11,11,11)"></div><div class="a" style="left:200.2px;top:520.8px;width:81.2px;height:81.2px;background:rgb(16,16,16)"></div><div class="a" style="left:280.3px;top:520.8px;width:81.2px;height:81.2px;background:rgb(19,19,19)"></div><div class="a" style="left:360.5px;top:520.8px;width:81.2px;height:81.2px;background:rgb(19,19,19)"></div><div class="a" style="left:440.6px;top:520.8px;width:81.2px;height:81.2px;background:rgb(19,19,19)"></div><div class="a" style="left:520.8px;top:520.8px;width:81.2px;height:81.2px;background:rgb(20,20,20)"></div><div class="a" style="left:600.9px;top:520.8px;width:81.2px;height:81.2px;background:rgb(20,20,20)"></div><div class="a" style="left:681.1px;top:520.8px;width:81.2px;height:81.2px;background:rgb(20,20,20)"></div><div class="a" style="left:761.2px;top:520.8px;width:81.2px;height:81.2px;background:rgb(20,20,20)"></div><div class="a" style="left:841.4px;top:520.8px;width:81.2px;height:81.2px;background:rgb(20,20,20)"></div><div class="a" style="left:921.5px;top:520.8px;width:81.2px;height:81.2px;background:rgb(20,20,20)"></div><div class="a" style="left:1001.7px;top:520.8px;width:81.2px;height:81.2px;background:rgb(22,22,22)"></div><div class="a" style="left:1081.8px;top:520.8px;width:81.2px;height:81.2px;background:rgb(24,24,24)"></div><div class="a" style="left:1162.0px;top:520.8px;width:81.2px;height:81.2px;background:rgb(24,24,24)"></div><div class="a" style="left:1242.2px;top:520.8px;width:81.2px;height:81.2px;background:rgb(24,24,24)"></div><div class="a" style="left:-40.3px;top:600.9px;width:81.2px;height:81.2px;background:rgb(9,9,9)"></div><div class="a" style="left:39.8px;top:600.9px;width:81.2px;height:81.2px;background:rgb(9,9,9)"></div><div class="a" style="left:120.0px;top:600.9px;width:81.2px;height:81.2px;background:rgb(9,9,9)"></div><div class="a" style="left:200.2px;top:600.9px;width:81.2px;height:81.2px;background:rgb(12,12,12)"></div><div class="a" style="left:280.3px;top:600.9px;width:81.2px;height:81.2px;background:rgb(14,14,14)"></div><div class="a" style="left:360.5px;top:600.9px;width:81.2px;height:81.2px;background:rgb(14,14,14)"></div><div class="a" style="left:440.6px;top:600.9px;width:81.2px;height:81.2px;background:rgb(16,16,16)"></div><div class="a" style="left:520.8px;top:600.9px;width:81.2px;height:81.2px;background:rgb(17,17,17)"></div><div class="a" style="left:600.9px;top:600.9px;width:81.2px;height:81.2px;background:rgb(19,19,19)"></div><div class="a" style="left:681.1px;top:600.9px;width:81.2px;height:81.2px;background:rgb(20,20,20)"></div><div class="a" style="left:761.2px;top:600.9px;width:81.2px;height:81.2px;background:rgb(22,22,22)"></div><div class="a" style="left:841.4px;top:600.9px;width:81.2px;height:81.2px;background:rgb(22,22,22)"></div><div class="a" style="left:921.5px;top:600.9px;width:81.2px;height:81.2px;background:rgb(22,22,22)"></div><div class="a" style="left:1001.7px;top:600.9px;width:81.2px;height:81.2px;background:rgb(24,24,24)"></div><div class="a" style="left:1081.8px;top:600.9px;width:81.2px;height:81.2px;background:rgb(25,25,25)"></div><div class="a" style="left:1162.0px;top:600.9px;width:81.2px;height:81.2px;background:rgb(25,25,25)"></div><div class="a" style="left:1242.2px;top:600.9px;width:81.2px;height:81.2px;background:rgb(25,25,25)"></div><div class="a" style="left:-40.3px;top:681.1px;width:81.2px;height:81.2px;background:rgb(8,8,8)"></div><div class="a" style="left:39.8px;top:681.1px;width:81.2px;height:81.2px;background:rgb(8,8,8)"></div><div class="a" style="left:120.0px;top:681.1px;width:81.2px;height:81.2px;background:rgb(8,8,8)"></div><div class="a" style="left:200.2px;top:681.1px;width:81.2px;height:81.2px;background:rgb(9,9,9)"></div><div class="a" style="left:280.3px;top:681.1px;width:81.2px;height:81.2px;background:rgb(11,11,11)"></div><div class="a" style="left:360.5px;top:681.1px;width:81.2px;height:81.2px;background:rgb(11,11,11)"></div><div class="a" style="left:440.6px;top:681.1px;width:81.2px;height:81.2px;background:rgb(12,12,12)"></div><div class="a" style="left:520.8px;top:681.1px;width:81.2px;height:81.2px;background:rgb(16,16,16)"></div><div class="a" style="left:600.9px;top:681.1px;width:81.2px;height:81.2px;background:rgb(17,17,17)"></div><div class="a" style="left:681.1px;top:681.1px;width:81.2px;height:81.2px;background:rgb(19,19,19)"></div><div class="a" style="left:761.2px;top:681.1px;width:81.2px;height:81.2px;background:rgb(20,20,20)"></div><div class="a" style="left:841.4px;top:681.1px;width:81.2px;height:81.2px;background:rgb(20,20,20)"></div><div class="a" style="left:921.5px;top:681.1px;width:81.2px;height:81.2px;background:rgb(20,20,20)"></div><div class="a" style="left:1001.7px;top:681.1px;width:81.2px;height:81.2px;background:rgb(22,22,22)"></div><div class="a" style="left:1081.8px;top:681.1px;width:81.2px;height:81.2px;background:rgb(24,24,24)"></div><div class="a" style="left:1162.0px;top:681.1px;width:81.2px;height:81.2px;background:rgb(24,24,24)"></div><div class="a" style="left:1242.2px;top:681.1px;width:81.2px;height:81.2px;background:rgb(24,24,24)"></div><div class="a" style="left:-40.3px;top:761.2px;width:81.2px;height:81.2px;background:rgb(8,8,8)"></div><div class="a" style="left:39.8px;top:761.2px;width:81.2px;height:81.2px;background:rgb(8,8,8)"></div><div class="a" style="left:120.0px;top:761.2px;width:81.2px;height:81.2px;background:rgb(8,8,8)"></div><div class="a" style="left:200.2px;top:761.2px;width:81.2px;height:81.2px;background:rgb(8,8,8)"></div><div class="a" style="left:280.3px;top:761.2px;width:81.2px;height:81.2px;background:rgb(9,9,9)"></div><div class="a" style="left:360.5px;top:761.2px;width:81.2px;height:81.2px;background:rgb(9,9,9)"></div><div class="a" style="left:440.6px;top:761.2px;width:81.2px;height:81.2px;background:rgb(9,9,9)"></div><div class="a" style="left:520.8px;top:761.2px;width:81.2px;height:81.2px;background:rgb(12,12,12)"></div><div class="a" style="left:600.9px;top:761.2px;width:81.2px;height:81.2px;background:rgb(14,14,14)"></div><div class="a" style="left:681.1px;top:761.2px;width:81.2px;height:81.2px;background:rgb(14,14,14)"></div><div class="a" style="left:761.2px;top:761.2px;width:81.2px;height:81.2px;background:rgb(14,14,14)"></div><div class="a" style="left:841.4px;top:761.2px;width:81.2px;height:81.2px;background:rgb(14,14,14)"></div><div class="a" style="left:921.5px;top:761.2px;width:81.2px;height:81.2px;background:rgb(16,16,16)"></div><div class="a" style="left:1001.7px;top:761.2px;width:81.2px;height:81.2px;background:rgb(17,17,17)"></div><div class="a" style="left:1081.8px;top:761.2px;width:81.2px;height:81.2px;background:rgb(19,19,19)"></div><div class="a" style="left:1162.0px;top:761.2px;width:81.2px;height:81.2px;background:rgb(19,19,19)"></div><div class="a" style="left:1242.2px;top:761.2px;width:81.2px;height:81.2px;background:rgb(19,19,19)"></div><div class="a" style="left:-40.3px;top:841.4px;width:81.2px;height:81.2px;background:rgb(9,9,9)"></div><div class="a" style="left:39.8px;top:841.4px;width:81.2px;height:81.2px;background:rgb(9,9,9)"></div><div class="a" style="left:120.0px;top:841.4px;width:81.2px;height:81.2px;background:rgb(9,9,9)"></div><div class="a" style="left:200.2px;top:841.4px;width:81.2px;height:81.2px;background:rgb(9,9,9)"></div><div class="a" style="left:280.3px;top:841.4px;width:81.2px;height:81.2px;background:rgb(8,8,8)"></div><div class="a" style="left:360.5px;top:841.4px;width:81.2px;height:81.2px;background:rgb(8,8,8)"></div><div class="a" style="left:440.6px;top:841.4px;width:81.2px;height:81.2px;background:rgb(8,8,8)"></div><div class="a" style="left:520.8px;top:841.4px;width:81.2px;height:81.2px;background:rgb(9,9,9)"></div><div class="a" style="left:600.9px;top:841.4px;width:81.2px;height:81.2px;background:rgb(9,9,9)"></div><div class="a" style="left:681.1px;top:841.4px;width:81.2px;height:81.2px;background:rgb(9,9,9)"></div><div class="a" style="left:761.2px;top:841.4px;width:81.2px;height:81.2px;background:rgb(8,8,8)"></div><div class="a" style="left:841.4px;top:841.4px;width:81.2px;height:81.2px;background:rgb(8,8,8)"></div><div class="a" style="left:921.5px;top:841.4px;width:81.2px;height:81.2px;background:rgb(9,9,9)"></div><div class="a" style="left:1001.7px;top:841.4px;width:81.2px;height:81.2px;background:rgb(11,11,11)"></div><div class="a" style="left:1081.8px;top:841.4px;width:81.2px;height:81.2px;background:rgb(12,12,12)"></div><div class="a" style="left:1162.0px;top:841.4px;width:81.2px;height:81.2px;background:rgb(12,12,12)"></div><div class="a" style="left:1242.2px;top:841.4px;width:81.2px;height:81.2px;background:rgb(12,12,12)"></div><div class="a" style="left:-40.3px;top:921.5px;width:81.2px;height:81.2px;background:rgb(11,11,11)"></div><div class="a" style="left:39.8px;top:921.5px;width:81.2px;height:81.2px;background:rgb(11,11,11)"></div><div class="a" style="left:120.0px;top:921.5px;width:81.2px;height:81.2px;background:rgb(11,11,11)"></div><div class="a" style="left:200.2px;top:921.5px;width:81.2px;height:81.2px;background:rgb(9,9,9)"></div><div class="a" style="left:280.3px;top:921.5px;width:81.2px;height:81.2px;background:rgb(8,8,8)"></div><div class="a" style="left:360.5px;top:921.5px;width:81.2px;height:81.2px;background:rgb(9,9,9)"></div><div class="a" style="left:440.6px;top:921.5px;width:81.2px;height:81.2px;background:rgb(11,11,11)"></div><div class="a" style="left:520.8px;top:921.5px;width:81.2px;height:81.2px;background:rgb(11,11,11)"></div><div class="a" style="left:600.9px;top:921.5px;width:81.2px;height:81.2px;background:rgb(9,9,9)"></div><div class="a" style="left:681.1px;top:921.5px;width:81.2px;height:81.2px;background:rgb(8,8,8)"></div><div class="a" style="left:761.2px;top:921.5px;width:81.2px;height:81.2px;background:rgb(8,8,8)"></div><div class="a" style="left:841.4px;top:921.5px;width:81.2px;height:81.2px;background:rgb(8,8,8)"></div><div class="a" style="left:921.5px;top:921.5px;width:81.2px;height:81.2px;background:rgb(8,8,8)"></div><div class="a" style="left:1001.7px;top:921.5px;width:81.2px;height:81.2px;background:rgb(8,8,8)"></div><div class="a" style="left:1081.8px;top:921.5px;width:81.2px;height:81.2px;background:rgb(9,9,9)"></div><div class="a" style="left:1162.0px;top:921.5px;width:81.2px;height:81.2px;background:rgb(9,9,9)"></div><div class="a" style="left:1242.2px;top:921.5px;width:81.2px;height:81.2px;background:rgb(9,9,9)"></div><div class="a" style="left:-40.3px;top:1001.7px;width:81.2px;height:81.2px;background:rgb(9,9,9)"></div><div class="a" style="left:39.8px;top:1001.7px;width:81.2px;height:81.2px;background:rgb(9,9,9)"></div><div class="a" style="left:120.0px;top:1001.7px;width:81.2px;height:81.2px;background:rgb(9,9,9)"></div><div class="a" style="left:200.2px;top:1001.7px;width:81.2px;height:81.2px;background:rgb(8,8,8)"></div><div class="a" style="left:280.3px;top:1001.7px;width:81.2px;height:81.2px;background:rgb(8,8,8)"></div><div class="a" style="left:360.5px;top:1001.7px;width:81.2px;height:81.2px;background:rgb(14,14,14)"></div><div class="a" style="left:440.6px;top:1001.7px;width:81.2px;height:81.2px;background:rgb(22,22,22)"></div><div class="a" style="left:520.8px;top:1001.7px;width:81.2px;height:81.2px;background:rgb(25,25,25)"></div><div class="a" style="left:600.9px;top:1001.7px;width:81.2px;height:81.2px;background:rgb(22,22,22)"></div><div class="a" style="left:681.1px;top:1001.7px;width:81.2px;height:81.2px;background:rgb(19,19,19)"></div><div class="a" style="left:761.2px;top:1001.7px;width:81.2px;height:81.2px;background:rgb(17,17,17)"></div><div class="a" style="left:841.4px;top:1001.7px;width:81.2px;height:81.2px;background:rgb(16,16,16)"></div><div class="a" style="left:921.5px;top:1001.7px;width:81.2px;height:81.2px;background:rgb(14,14,14)"></div><div class="a" style="left:1001.7px;top:1001.7px;width:81.2px;height:81.2px;background:rgb(12,12,12)"></div><div class="a" style="left:1081.8px;top:1001.7px;width:81.2px;height:81.2px;background:rgb(14,14,14)"></div><div class="a" style="left:1162.0px;top:1001.7px;width:81.2px;height:81.2px;background:rgb(14,14,14)"></div><div class="a" style="left:1242.2px;top:1001.7px;width:81.2px;height:81.2px;background:rgb(14,14,14)"></div><div class="a" style="left:-40.3px;top:1081.8px;width:81.2px;height:81.2px;background:rgb(8,8,8)"></div><div class="a" style="left:39.8px;top:1081.8px;width:81.2px;height:81.2px;background:rgb(8,8,8)"></div><div class="a" style="left:120.0px;top:1081.8px;width:81.2px;height:81.2px;background:rgb(8,8,8)"></div><div class="a" style="left:200.2px;top:1081.8px;width:81.2px;height:81.2px;background:rgb(8,8,8)"></div><div class="a" style="left:280.3px;top:1081.8px;width:81.2px;height:81.2px;background:rgb(11,11,11)"></div><div class="a" style="left:360.5px;top:1081.8px;width:81.2px;height:81.2px;background:rgb(20,20,20)"></div><div class="a" style="left:440.6px;top:1081.8px;width:81.2px;height:81.2px;background:rgb(27,27,27)"></div><div class="a" style="left:520.8px;top:1081.8px;width:81.2px;height:81.2px;background:rgb(30,30,30)"></div><div class="a" style="left:600.9px;top:1081.8px;width:81.2px;height:81.2px;background:rgb(30,30,30)"></div><div class="a" style="left:681.1px;top:1081.8px;width:81.2px;height:81.2px;background:rgb(28,28,28)"></div><div class="a" style="left:761.2px;top:1081.8px;width:81.2px;height:81.2px;background:rgb(27,27,27)"></div><div class="a" style="left:841.4px;top:1081.8px;width:81.2px;height:81.2px;background:rgb(24,24,24)"></div><div class="a" style="left:921.5px;top:1081.8px;width:81.2px;height:81.2px;background:rgb(22,22,22)"></div><div class="a" style="left:1001.7px;top:1081.8px;width:81.2px;height:81.2px;background:rgb(20,20,20)"></div><div class="a" style="left:1081.8px;top:1081.8px;width:81.2px;height:81.2px;background:rgb(22,22,22)"></div><div class="a" style="left:1162.0px;top:1081.8px;width:81.2px;height:81.2px;background:rgb(22,22,22)"></div><div class="a" style="left:1242.2px;top:1081.8px;width:81.2px;height:81.2px;background:rgb(22,22,22)"></div><div class="a" style="left:-40.3px;top:1162.0px;width:81.2px;height:81.2px;background:rgb(8,8,8)"></div><div class="a" style="left:39.8px;top:1162.0px;width:81.2px;height:81.2px;background:rgb(8,8,8)"></div><div class="a" style="left:120.0px;top:1162.0px;width:81.2px;height:81.2px;background:rgb(8,8,8)"></div><div class="a" style="left:200.2px;top:1162.0px;width:81.2px;height:81.2px;background:rgb(8,8,8)"></div><div class="a" style="left:280.3px;top:1162.0px;width:81.2px;height:81.2px;background:rgb(11,11,11)"></div><div class="a" style="left:360.5px;top:1162.0px;width:81.2px;height:81.2px;background:rgb(20,20,20)"></div><div class="a" style="left:440.6px;top:1162.0px;width:81.2px;height:81.2px;background:rgb(27,27,27)"></div><div class="a" style="left:520.8px;top:1162.0px;width:81.2px;height:81.2px;background:rgb(30,30,30)"></div><div class="a" style="left:600.9px;top:1162.0px;width:81.2px;height:81.2px;background:rgb(30,30,30)"></div><div class="a" style="left:681.1px;top:1162.0px;width:81.2px;height:81.2px;background:rgb(28,28,28)"></div><div class="a" style="left:761.2px;top:1162.0px;width:81.2px;height:81.2px;background:rgb(27,27,27)"></div><div class="a" style="left:841.4px;top:1162.0px;width:81.2px;height:81.2px;background:rgb(24,24,24)"></div><div class="a" style="left:921.5px;top:1162.0px;width:81.2px;height:81.2px;background:rgb(22,22,22)"></div><div class="a" style="left:1001.7px;top:1162.0px;width:81.2px;height:81.2px;background:rgb(20,20,20)"></div><div class="a" style="left:1081.8px;top:1162.0px;width:81.2px;height:81.2px;background:rgb(22,22,22)"></div><div class="a" style="left:1162.0px;top:1162.0px;width:81.2px;height:81.2px;background:rgb(22,22,22)"></div><div class="a" style="left:1242.2px;top:1162.0px;width:81.2px;height:81.2px;background:rgb(22,22,22)"></div><div class="a" style="left:-40.3px;top:1242.2px;width:81.2px;height:81.2px;background:rgb(8,8,8)"></div><div class="a" style="left:39.8px;top:1242.2px;width:81.2px;height:81.2px;background:rgb(8,8,8)"></div><div class="a" style="left:120.0px;top:1242.2px;width:81.2px;height:81.2px;background:rgb(8,8,8)"></div><div class="a" style="left:200.2px;top:1242.2px;width:81.2px;height:81.2px;background:rgb(8,8,8)"></div><div class="a" style="left:280.3px;top:1242.2px;width:81.2px;height:81.2px;background:rgb(11,11,11)"></div><div class="a" style="left:360.5px;top:1242.2px;width:81.2px;height:81.2px;background:rgb(20,20,20)"></div><div class="a" style="left:440.6px;top:1242.2px;width:81.2px;height:81.2px;background:rgb(27,27,27)"></div><div class="a" style="left:520.8px;top:1242.2px;width:81.2px;height:81.2px;background:rgb(30,30,30)"></div><div class="a" style="left:600.9px;top:1242.2px;width:81.2px;height:81.2px;background:rgb(30,30,30)"></div><div class="a" style="left:681.1px;top:1242.2px;width:81.2px;height:81.2px;background:rgb(28,28,28)"></div><div class="a" style="left:761.2px;top:1242.2px;width:81.2px;height:81.2px;background:rgb(27,27,27)"></div><div class="a" style="left:841.4px;top:1242.2px;width:81.2px;height:81.2px;background:rgb(24,24,24)"></div><div class="a" style="left:921.5px;top:1242.2px;width:81.2px;height:81.2px;background:rgb(22,22,22)"></div><div class="a" style="left:1001.7px;top:1242.2px;width:81.2px;height:81.2px;background:rgb(20,20,20)"></div><div class="a" style="left:1081.8px;top:1242.2px;width:81.2px;height:81.2px;background:rgb(22,22,22)"></div><div class="a" style="left:1162.0px;top:1242.2px;width:81.2px;height:81.2px;background:rgb(22,22,22)"></div><div class="a" style="left:1242.2px;top:1242.2px;width:81.2px;height:81.2px;background:rgb(22,22,22)"></div></div><svg style="left:0;top:0;overflow:hidden" width="1042.0" height="1042.0" viewBox="0 0 1042 1042"><defs><filter id="b1" x="-50%" y="-50%" width="200%" height="200%"><feGaussianBlur stdDeviation="2.2"/></filter><filter id="b2" x="-50%" y="-50%" width="200%" height="200%"><feGaussianBlur stdDeviation="1.2"/></filter></defs><path fill="rgb(30,30,30)" d="M337 157h3v3h-3zM984 494h3v3h-3zM711 396h2v2h-2zM459 115h2v2h-2zM539 370h2v2h-2zM920 59h2v2h-2zM135 549h2v2h-2zM1000 392h3v3h-3zM629 658h3v3h-3zM784 672h3v3h-3zM469 145h2v2h-2zM673 450h2v2h-2zM891 1013h2v2h-2zM797 477h2v2h-2zM404 233h3v3h-3zM874 1026h2v2h-2zM422 391h2v2h-2zM921 1029h2v2h-2zM105 483h2v2h-2zM390 914h2v2h-2zM364 39h2v2h-2zM426 387h2v2h-2zM478 187h2v2h-2zM532 42h3v3h-3zM910 578h2v2h-2zM423 248h2v2h-2zM492 553h2v2h-2zM968 359h2v2h-2zM112 214h3v3h-3zM585 109h2v2h-2zM310 285h2v2h-2zM815 980h3v3h-3zM476 214h3v3h-3zM660 16h3v3h-3zM795 106h2v2h-2zM599 957h3v3h-3zM1022 495h2v2h-2zM672 221h2v2h-2zM457 705h2v2h-2zM753 1024h3v3h-3zM478 987h3v3h-3zM94 332h3v3h-3zM175 325h2v2h-2zM545 732h3v3h-3zM907 691h3v3h-3zM840 37h3v3h-3zM118 362h3v3h-3zM988 705h2v2h-2zM430 63h2v2h-2zM576 956h3v3h-3zM511 487h3v3h-3zM364 469h2v2h-2zM458 646h2v2h-2zM206 316h3v3h-3zM725 1015h2v2h-2zM462 1011h2v2h-2zM500 227h3v3h-3zM1015 1002h3v3h-3zM1006 77h3v3h-3zM937 287h2v2h-2zM653 247h2v2h-2zM669 16h2v2h-2zM416 980h2v2h-2zM142 313h2v2h-2zM310 25h2v2h-2zM241 449h2v2h-2zM889 1013h2v2h-2zM733 16h2v2h-2zM826 644h3v3h-3zM538 485h2v2h-2zM985 693h2v2h-2zM546 76h2v2h-2zM338 256h3v3h-3zM557 250h2v2h-2zM207 229h2v2h-2zM945 519h2v2h-2zM478 988h2v2h-2zM689 884h2v2h-2zM733 638h3v3h-3zM589 329h2v2h-2zM934 455h2v2h-2zM758 554h2v2h-2zM274 160h3v3h-3zM700 1025h3v3h-3zM349 200h2v2h-2zM296 407h2v2h-2zM772 148h3v3h-3zM289 10h2v2h-2zM251 930h2v2h-2zM317 327h2v2h-2zM756 284h2v2h-2zM308 17h2v2h-2zM551 808h3v3h-3zM967 973h2v2h-2zM894 983h2v2h-2zM325 911h3v3h-3zM438 535h2v2h-2zM316 169h2v2h-2zM617 151h2v2h-2zM407 264h3v3h-3zM569 992h2v2h-2zM969 789h3v3h-3zM418 990h2v2h-2zM35 498h2v2h-2zM555 891h2v2h-2zM794 614h2v2h-2zM254 1014h2v2h-2zM576 214h2v2h-2zM1010 326h3v3h-3zM430 566h2v2h-2zM736 447h2v2h-2zM880 72h3v3h-3zM256 38h2v2h-2zM878 571h2v2h-2zM514 573h3v3h-3zM353 27h2v2h-2zM628 1012h2v2h-2zM532 139h2v2h-2zM463 927h3v3h-3zM179 361h3v3h-3zM206 214h2v2h-2zM458 795h2v2h-2zM434 262h3v3h-3zM810 1034h2v2h-2zM315 279h2v2h-2zM94 467h2v2h-2zM959 718h2v2h-2zM211 350h2v2h-2zM999 521h2v2h-2zM316 649h2v2h-2zM985 660h2v2h-2zM1020 587h2v2h-2zM700 555h3v3h-3zM394 1028h3v3h-3zM297 389h2v2h-2zM669 377h3v3h-3zM608 137h2v2h-2zM96 241h2v2h-2zM745 479h2v2h-2zM992 341h2v2h-2zM538 308h3v3h-3zM963 476h2v2h-2zM600 1009h2v2h-2zM1036 676h2v2h-2zM356 418h3v3h-3zM557 997h2v2h-2zM987 914h2v2h-2zM898 919h2v2h-2zM869 345h2v2h-2zM236 338h2v2h-2zM616 552h3v3h-3zM321 110h2v2h-2zM527 719h2v2h-2zM953 994h2v2h-2zM237 50h2v2h-2zM830 569h3v3h-3zM902 950h2v2h-2zM19 367h2v2h-2zM686 69h2v2h-2zM912 663h2v2h-2zM513 400h3v3h-3zM573 891h2v2h-2zM680 447h2v2h-2zM223 986h2v2h-2zM827 611h3v3h-3zM475 407h3v3h-3zM1010 990h3v3h-3zM463 243h3v3h-3zM849 278h2v2h-2zM940 757h3v3h-3zM476 7h3v3h-3zM221 888h2v2h-2zM733 119h3v3h-3zM749 713h2v2h-2zM535 89h2v2h-2zM1041 317h2v2h-2zM537 972h3v3h-3zM322 968h2v2h-2zM990 989h3v3h-3zM341 333h3v3h-3zM396 141h3v3h-3zM970 423h3v3h-3zM785 541h2v2h-2zM599 136h3v3h-3zM590 302h3v3h-3zM894 18h2v2h-2zM791 976h2v2h-2zM463 296h3v3h-3zM670 1038h2v2h-2zM167 427h2v2h-2zM467 54h2v2h-2zM846 467h3v3h-3zM1025 625h2v2h-2zM447 1025h2v2h-2zM579 121h3v3h-3zM859 978h3v3h-3zM535 448h3v3h-3zM807 577h3v3h-3zM263 622h2v2h-2zM742 951h2v2h-2zM938 359h3v3h-3zM935 428h2v2h-2zM870 488h2v2h-2zM977 538h3v3h-3zM346 925h3v3h-3zM483 999h2v2h-2zM334 476h2v2h-2zM283 258h2v2h-2zM837 594h3v3h-3zM854 707h2v2h-2zM386 538h2v2h-2zM1007 537h3v3h-3zM505 455h2v2h-2zM439 1023h3v3h-3zM626 144h2v2h-2zM567 988h2v2h-2zM1031 456h2v2h-2zM383 936h2v2h-2zM882 676h2v2h-2zM719 628h2v2h-2zM345 179h3v3h-3zM364 75h2v2h-2zM902 900h2v2h-2zM553 343h3v3h-3zM616 658h2v2h-2zM466 384h3v3h-3zM740 997h2v2h-2zM898 493h2v2h-2zM970 500h3v3h-3zM278 436h2v2h-2zM737 233h2v2h-2zM789 305h2v2h-2zM578 259h2v2h-2zM178 454h2v2h-2zM301 715h2v2h-2zM379 374h2v2h-2zM979 503h3v3h-3zM628 718h3v3h-3zM386 306h2v2h-2zM854 708h3v3h-3zM1017 435h2v2h-2zM766 375h2v2h-2zM1026 459h3v3h-3zM323 902h2v2h-2zM527 986h3v3h-3zM349 328h3v3h-3zM917 107h3v3h-3zM504 572h2v2h-2zM564 1037h3v3h-3zM450 1015h2v2h-2zM598 526h2v2h-2zM599 447h2v2h-2zM399 248h3v3h-3zM737 610h2v2h-2zM245 1020h2v2h-2zM799 665h3v3h-3zM762 391h3v3h-3zM979 512h2v2h-2zM718 270h3v3h-3zM325 467h2v2h-2zM181 159h2v2h-2zM550 164h2v2h-2zM696 402h3v3h-3zM1036 313h3v3h-3zM169 399h2v2h-2zM341 131h2v2h-2zM115 418h3v3h-3zM548 927h3v3h-3zM362 410h2v2h-2zM885 308h2v2h-2zM946 418h2v2h-2zM741 438h3v3h-3zM317 334h2v2h-2zM280 428h2v2h-2zM349 359h2v2h-2zM254 369h3v3h-3zM950 626h2v2h-2zM422 1006h3v3h-3zM829 912h2v2h-2zM556 145h3v3h-3zM379 975h3v3h-3zM442 135h3v3h-3zM424 336h2v2h-2zM501 480h2v2h-2zM1027 77h3v3h-3zM1016 528h2v2h-2zM732 673h2v2h-2zM268 1003h2v2h-2zM324 300h2v2h-2zM627 666h2v2h-2zM218 1016h2v2h-2zM473 421h2v2h-2zM690 581h2v2h-2zM786 566h3v3h-3zM406 189h2v2h-2zM706 27h3v3h-3zM995 979h3v3h-3zM937 412h2v2h-2zM1030 404h2v2h-2zM978 658h2v2h-2zM998 472h3v3h-3zM512 637h3v3h-3zM592 59h3v3h-3zM494 39h2v2h-2zM857 621h3v3h-3zM45 648h3v3h-3zM547 509h3v3h-3zM554 300h2v2h-2zM275 219h2v2h-2zM947 1021h3v3h-3zM961 689h2v2h-2zM493 39h3v3h-3zM89 1013h2v2h-2zM946 411h2v2h-2zM853 575h2v2h-2zM636 5h2v2h-2zM579 551h2v2h-2zM759 32h3v3h-3zM442 569h3v3h-3zM1032 630h2v2h-2zM935 585h2v2h-2zM590 1041h2v2h-2zM518 380h2v2h-2zM366 1020h2v2h-2zM716 538h2v2h-2zM971 828h2v2h-2zM550 1036h3v3h-3zM383 181h2v2h-2zM425 573h2v2h-2zM1035 246h3v3h-3zM497 606h3v3h-3zM380 113h2v2h-2zM559 458h2v2h-2zM426 369h3v3h-3zM710 967h3v3h-3zM595 273h2v2h-2zM744 353h2v2h-2zM728 617h2v2h-2zM259 265h2v2h-2zM972 319h2v2h-2zM595 383h3v3h-3zM481 375h2v2h-2zM807 902h2v2h-2zM426 49h2v2h-2zM819 1027h3v3h-3zM608 469h3v3h-3zM557 561h3v3h-3zM641 991h2v2h-2zM1018 620h2v2h-2zM669 1028h2v2h-2zM686 657h2v2h-2zM827 284h2v2h-2zM1022 278h3v3h-3zM458 1034h3v3h-3zM394 216h2v2h-2zM613 1040h2v2h-2zM1025 85h2v2h-2zM652 590h2v2h-2zM321 88h2v2h-2zM752 541h2v2h-2zM784 354h3v3h-3zM719 1004h2v2h-2zM388 461h3v3h-3zM359 978h2v2h-2zM291 814h2v2h-2zM455 216h2v2h-2zM754 988h3v3h-3zM610 913h2v2h-2zM267 127h3v3h-3zM293 245h2v2h-2zM425 897h3v3h-3zM274 396h3v3h-3zM497 77h2v2h-2zM496 709h3v3h-3zM866 896h2v2h-2zM232 245h2v2h-2zM490 467h2v2h-2zM427 32h2v2h-2zM581 945h2v2h-2zM575 250h2v2h-2zM957 561h3v3h-3zM388 114h2v2h-2zM590 732h3v3h-3zM711 457h3v3h-3zM658 195h2v2h-2zM612 910h3v3h-3zM251 195h2v2h-2zM543 337h3v3h-3zM509 507h2v2h-2zM549 467h2v2h-2zM598 280h3v3h-3zM154 541h2v2h-2zM678 627h3v3h-3zM741 960h3v3h-3zM903 227h3v3h-3zM467 894h2v2h-2zM985 503h3v3h-3zM361 552h2v2h-2zM663 605h2v2h-2zM836 794h3v3h-3zM541 131h2v2h-2zM560 632h2v2h-2zM225 741h3v3h-3zM815 637h3v3h-3zM752 934h3v3h-3zM513 156h3v3h-3zM794 470h2v2h-2zM510 120h2v2h-2zM619 1040h3v3h-3zM549 169h2v2h-2zM794 617h3v3h-3zM524 20h3v3h-3zM638 949h2v2h-2zM491 320h2v2h-2zM822 894h3v3h-3zM748 212h2v2h-2zM960 554h3v3h-3zM520 1040h3v3h-3zM577 179h3v3h-3zM769 496h2v2h-2zM351 616h2v2h-2zM663 1000h3v3h-3zM1036 939h2v2h-2zM910 614h3v3h-3zM324 1h2v2h-2zM153 555h2v2h-2zM891 947h3v3h-3zM620 775h2v2h-2zM598 237h3v3h-3zM570 621h3v3h-3zM578 996h2v2h-2zM364 998h3v3h-3zM984 542h2v2h-2zM97 236h2v2h-2zM600 738h3v3h-3zM486 102h2v2h-2zM782 372h3v3h-3zM645 487h2v2h-2zM344 96h2v2h-2zM10 856h3v3h-3zM262 461h3v3h-3zM757 990h3v3h-3zM438 1h2v2h-2zM1005 615h3v3h-3zM470 433h2v2h-2zM787 422h3v3h-3zM168 536h2v2h-2zM268 1033h2v2h-2zM999 435h2v2h-2zM395 522h2v2h-2zM471 675h2v2h-2zM596 437h3v3h-3zM649 610h2v2h-2zM414 610h2v2h-2zM170 512h3v3h-3zM777 495h2v2h-2zM369 369h3v3h-3zM951 794h2v2h-2zM686 1024h2v2h-2zM586 1031h3v3h-3zM701 594h2v2h-2zM250 416h2v2h-2zM649 14h2v2h-2zM298 317h2v2h-2zM885 170h2v2h-2zM818 342h2v2h-2zM410 227h3v3h-3zM625 135h2v2h-2zM536 510h3v3h-3zM738 549h2v2h-2zM664 524h2v2h-2zM226 408h3v3h-3zM282 190h2v2h-2zM68 439h3v3h-3zM366 938h3v3h-3zM334 904h2v2h-2zM380 194h3v3h-3zM1012 388h3v3h-3zM771 666h2v2h-2zM717 1020h3v3h-3zM247 567h2v2h-2zM1002 551h2v2h-2zM218 661h2v2h-2zM984 559h2v2h-2zM170 88h3v3h-3zM460 893h3v3h-3zM575 534h2v2h-2zM491 584h2v2h-2zM495 936h2v2h-2zM993 489h2v2h-2zM243 117h3v3h-3zM861 301h3v3h-3zM252 330h2v2h-2zM788 4h2v2h-2zM184 289h2v2h-2zM586 52h3v3h-3zM638 66h2v2h-2zM300 388h2v2h-2zM215 626h2v2h-2zM566 390h2v2h-2zM836 842h2v2h-2zM856 327h2v2h-2zM695 934h2v2h-2zM92 417h2v2h-2zM689 115h3v3h-3zM314 177h2v2h-2zM493 397h2v2h-2zM253 325h2v2h-2zM244 159h3v3h-3zM227 660h2v2h-2zM165 176h2v2h-2zM616 509h2v2h-2zM482 160h2v2h-2zM959 597h2v2h-2zM941 994h2v2h-2zM592 517h3v3h-3zM338 274h2v2h-2zM81 229h3v3h-3zM291 930h2v2h-2zM202 535h2v2h-2zM649 320h2v2h-2zM393 515h2v2h-2zM220 353h3v3h-3zM988 1034h2v2h-2zM552 1012h3v3h-3zM46 352h2v2h-2zM534 133h2v2h-2zM383 348h3v3h-3zM688 153h3v3h-3zM902 912h3v3h-3zM783 1028h2v2h-2zM366 839h2v2h-2zM345 40h3v3h-3zM340 580h2v2h-2zM390 1041h2v2h-2zM298 124h2v2h-2zM929 1034h2v2h-2zM921 643h2v2h-2zM941 443h2v2h-2zM684 1015h3v3h-3zM357 305h2v2h-2zM471 458h2v2h-2zM971 180h2v2h-2zM517 43h2v2h-2zM917 1040h2v2h-2zM188 626h3v3h-3zM815 945h3v3h-3zM867 893h2v2h-2zM312 74h2v2h-2zM842 943h3v3h-3zM907 460h2v2h-2zM665 884h2v2h-2zM857 760h2v2h-2zM569 918h2v2h-2zM157 768h3v3h-3zM529 721h2v2h-2zM422 632h3v3h-3zM587 920h2v2h-2zM1029 144h2v2h-2zM720 405h2v2h-2zM529 1019h2v2h-2zM668 889h3v3h-3zM736 887h2v2h-2zM439 19h2v2h-2zM1000 711h3v3h-3zM956 1007h3v3h-3zM629 266h2v2h-2zM581 957h2v2h-2zM433 658h3v3h-3zM676 486h3v3h-3zM853 534h2v2h-2zM570 561h2v2h-2zM402 314h3v3h-3zM304 659h2v2h-2zM982 502h2v2h-2zM933 1019h2v2h-2zM803 593h3v3h-3zM957 130h2v2h-2zM843 386h2v2h-2zM586 297h2v2h-2zM491 636h2v2h-2zM515 101h2v2h-2zM790 1018h2v2h-2zM893 557h2v2h-2zM634 29h2v2h-2zM930 527h2v2h-2zM861 399h2v2h-2zM259 126h2v2h-2zM236 1019h3v3h-3zM364 488h3v3h-3zM427 68h3v3h-3zM959 650h2v2h-2zM287 222h2v2h-2zM800 439h3v3h-3zM760 192h2v2h-2zM657 322h3v3h-3zM366 551h3v3h-3zM766 455h3v3h-3zM249 263h2v2h-2zM815 168h3v3h-3zM496 991h3v3h-3zM95 477h3v3h-3zM565 1029h2v2h-2zM677 75h3v3h-3zM407 70h3v3h-3zM554 67h2v2h-2zM402 978h2v2h-2zM599 467h3v3h-3zM927 30h2v2h-2zM848 247h2v2h-2zM341 161h3v3h-3zM724 890h2v2h-2zM750 982h2v2h-2zM425 203h2v2h-2zM762 1040h2v2h-2zM554 250h2v2h-2zM739 238h3v3h-3zM1029 409h2v2h-2zM597 310h2v2h-2zM600 303h3v3h-3zM694 589h2v2h-2zM722 513h2v2h-2zM585 527h2v2h-2zM282 389h3v3h-3zM849 714h2v2h-2zM373 203h2v2h-2zM727 401h3v3h-3zM339 825h2v2h-2zM464 845h2v2h-2zM982 242h2v2h-2zM886 447h3v3h-3zM386 304h2v2h-2zM552 193h2v2h-2zM704 990h2v2h-2zM356 341h3v3h-3zM841 658h3v3h-3zM569 1022h2v2h-2zM643 239h3v3h-3zM972 724h2v2h-2zM949 635h3v3h-3zM483 96h2v2h-2zM384 71h2v2h-2zM186 192h2v2h-2zM287 640h3v3h-3zM480 297h2v2h-2zM272 492h2v2h-2zM509 985h3v3h-3zM887 800h2v2h-2zM919 1009h3v3h-3zM934 1042h3v3h-3zM865 401h2v2h-2zM229 432h2v2h-2zM447 1037h3v3h-3zM309 187h2v2h-2zM427 412h3v3h-3zM476 354h3v3h-3zM341 411h3v3h-3zM651 620h2v2h-2zM634 309h3v3h-3zM533 220h3v3h-3zM770 977h2v2h-2zM228 231h3v3h-3zM392 882h2v2h-2zM435 1006h2v2h-2zM631 169h2v2h-2zM975 544h3v3h-3zM448 597h2v2h-2zM983 226h3v3h-3zM477 347h2v2h-2zM655 74h3v3h-3zM972 229h2v2h-2zM657 111h2v2h-2zM457 348h2v2h-2zM111 357h2v2h-2zM824 1042h3v3h-3zM553 393h2v2h-2zM456 32h2v2h-2zM413 611h2v2h-2zM503 99h2v2h-2zM678 565h2v2h-2zM942 419h2v2h-2zM955 944h3v3h-3zM48 531h2v2h-2zM247 321h2v2h-2zM834 1027h3v3h-3zM941 1001h2v2h-2zM418 241h3v3h-3zM463 798h2v2h-2zM330 104h3v3h-3zM508 399h2v2h-2zM903 504h3v3h-3zM753 526h2v2h-2zM1034 299h2v2h-2zM937 762h3v3h-3zM553 625h2v2h-2zM1037 337h3v3h-3zM424 39h3v3h-3zM578 36h2v2h-2zM170 832h2v2h-2zM804 590h2v2h-2zM705 530h2v2h-2zM470 936h2v2h-2zM557 104h2v2h-2zM892 419h3v3h-3zM967 664h2v2h-2zM210 305h2v2h-2zM530 905h2v2h-2zM116 21h2v2h-2zM752 936h2v2h-2zM578 292h3v3h-3zM598 1033h2v2h-2zM707 917h3v3h-3zM52 260h2v2h-2zM1026 415h2v2h-2zM415 300h3v3h-3zM818 61h2v2h-2zM1003 588h2v2h-2zM552 579h2v2h-2zM571 144h3v3h-3zM399 621h2v2h-2zM1011 254h2v2h-2zM485 892h3v3h-3zM1017 970h2v2h-2zM250 435h2v2h-2zM669 389h3v3h-3zM212 249h2v2h-2zM650 1031h2v2h-2zM170 464h3v3h-3zM930 797h2v2h-2zM479 404h2v2h-2zM631 537h2v2h-2zM558 154h2v2h-2zM743 616h3v3h-3zM684 934h2v2h-2zM978 127h2v2h-2zM447 246h3v3h-3zM880 633h2v2h-2zM476 265h2v2h-2zM572 9h2v2h-2zM319 43h3v3h-3zM952 69h3v3h-3zM608 403h3v3h-3zM1023 230h2v2h-2zM586 1012h2v2h-2zM1041 642h2v2h-2zM362 928h2v2h-2zM417 991h2v2h-2zM643 408h2v2h-2zM185 303h2v2h-2zM903 877h3v3h-3zM223 577h3v3h-3zM965 259h2v2h-2zM838 465h2v2h-2zM288 433h2v2h-2zM335 142h2v2h-2zM858 145h2v2h-2zM946 44h2v2h-2zM433 66h2v2h-2zM744 578h2v2h-2zM408 986h2v2h-2zM546 853h2v2h-2zM734 980h2v2h-2zM325 548h2v2h-2zM353 557h2v2h-2zM381 79h2v2h-2zM695 355h2v2h-2zM359 214h3v3h-3zM334 433h3v3h-3zM586 996h2v2h-2zM51 294h2v2h-2zM503 391h2v2h-2zM570 49h2v2h-2zM267 229h3v3h-3zM777 937h2v2h-2zM1018 622h3v3h-3zM353 243h2v2h-2zM905 333h3v3h-3zM1014 164h3v3h-3zM471 941h3v3h-3zM452 1031h2v2h-2zM475 289h2v2h-2zM313 116h3v3h-3zM577 986h2v2h-2zM158 999h2v2h-2zM46 831h3v3h-3zM536 55h3v3h-3zM982 668h2v2h-2zM1039 546h3v3h-3zM519 54h3v3h-3zM498 327h2v2h-2zM485 555h3v3h-3zM637 288h3v3h-3zM386 1022h2v2h-2zM344 140h2v2h-2zM889 1027h3v3h-3zM594 828h3v3h-3zM970 284h2v2h-2zM449 531h2v2h-2zM878 588h3v3h-3zM907 99h2v2h-2zM479 652h2v2h-2zM693 732h2v2h-2zM108 280h2v2h-2zM305 1020h2v2h-2zM1027 680h2v2h-2zM582 680h2v2h-2zM161 646h3v3h-3zM1027 485h3v3h-3zM620 470h3v3h-3zM578 608h2v2h-2zM612 10h3v3h-3zM1022 714h2v2h-2zM1000 542h3v3h-3zM306 656h3v3h-3zM241 264h3v3h-3zM219 966h2v2h-2zM549 912h2v2h-2zM710 389h2v2h-2zM409 205h2v2h-2zM518 531h2v2h-2zM208 373h2v2h-2zM503 138h2v2h-2zM322 935h2v2h-2zM347 223h3v3h-3zM478 280h2v2h-2zM683 469h2v2h-2zM443 154h3v3h-3zM713 532h3v3h-3zM297 156h2v2h-2zM700 586h3v3h-3zM687 1013h2v2h-2zM366 340h2v2h-2zM439 378h2v2h-2zM873 1025h3v3h-3zM821 113h3v3h-3zM166 169h2v2h-2zM490 435h3v3h-3zM469 122h2v2h-2zM587 597h2v2h-2zM293 578h2v2h-2zM334 98h3v3h-3zM47 492h2v2h-2zM263 135h2v2h-2zM850 192h2v2h-2zM631 216h2v2h-2zM730 941h3v3h-3zM490 20h2v2h-2zM358 996h3v3h-3zM484 579h3v3h-3zM448 198h2v2h-2zM332 59h2v2h-2zM1017 504h2v2h-2zM949 467h2v2h-2zM279 245h2v2h-2zM994 649h3v3h-3zM939 623h2v2h-2zM728 378h2v2h-2zM240 150h2v2h-2zM402 190h3v3h-3zM793 130h2v2h-2zM940 599h2v2h-2zM315 511h3v3h-3zM626 264h2v2h-2zM862 985h2v2h-2zM849 266h3v3h-3zM683 46h2v2h-2zM485 403h2v2h-2zM987 215h2v2h-2zM541 545h2v2h-2zM50 797h2v2h-2zM824 489h2v2h-2zM1023 263h2v2h-2zM418 418h3v3h-3zM400 437h2v2h-2zM381 220h2v2h-2zM651 42h2v2h-2zM135 433h2v2h-2zM502 28h2v2h-2zM260 494h2v2h-2zM745 517h2v2h-2zM720 386h2v2h-2zM432 566h2v2h-2zM295 21h2v2h-2zM441 933h2v2h-2zM388 501h3v3h-3zM1008 245h3v3h-3zM394 238h3v3h-3zM1011 602h2v2h-2zM908 494h2v2h-2zM983 574h2v2h-2zM579 254h2v2h-2zM906 262h2v2h-2zM466 655h2v2h-2zM373 1011h2v2h-2zM328 971h2v2h-2zM924 608h2v2h-2zM1025 343h2v2h-2zM969 132h2v2h-2zM391 1026h2v2h-2zM884 925h2v2h-2zM253 19h2v2h-2zM979 549h3v3h-3zM533 670h3v3h-3zM217 75h3v3h-3zM931 265h2v2h-2zM395 978h2v2h-2zM504 1022h3v3h-3zM971 526h2v2h-2zM863 994h3v3h-3zM208 205h2v2h-2zM341 170h2v2h-2zM503 200h2v2h-2zM526 1022h2v2h-2zM902 700h2v2h-2zM829 526h2v2h-2zM573 978h2v2h-2zM344 328h2v2h-2zM457 146h3v3h-3zM526 996h2v2h-2zM385 884h3v3h-3zM1021 682h3v3h-3zM387 961h2v2h-2zM329 980h3v3h-3zM353 819h2v2h-2zM995 457h2v2h-2zM806 194h2v2h-2zM853 545h2v2h-2zM489 480h3v3h-3zM508 1008h2v2h-2zM619 407h2v2h-2zM305 69h2v2h-2zM527 653h2v2h-2zM865 709h2v2h-2zM765 904h3v3h-3zM238 482h2v2h-2zM161 141h2v2h-2zM945 433h2v2h-2zM640 863h2v2h-2zM405 54h2v2h-2zM200 602h2v2h-2zM645 586h2v2h-2zM814 337h3v3h-3zM614 249h3v3h-3zM716 954h2v2h-2zM330 80h3v3h-3zM522 476h2v2h-2zM196 466h2v2h-2zM754 433h2v2h-2zM440 86h2v2h-2zM806 45h2v2h-2zM269 336h2v2h-2zM788 317h2v2h-2zM335 1023h2v2h-2zM556 748h2v2h-2zM903 467h2v2h-2zM776 682h2v2h-2zM769 628h2v2h-2zM362 238h2v2h-2zM395 634h2v2h-2zM437 545h3v3h-3zM397 69h2v2h-2zM455 596h2v2h-2zM567 146h2v2h-2zM302 1017h2v2h-2zM604 1016h3v3h-3zM945 692h2v2h-2zM444 83h3v3h-3zM194 12h2v2h-2zM632 976h3v3h-3zM580 270h3v3h-3zM446 469h2v2h-2zM264 482h3v3h-3zM390 19h2v2h-2zM541 969h2v2h-2zM305 121h2v2h-2zM961 493h2v2h-2zM575 517h2v2h-2zM789 596h2v2h-2zM683 654h2v2h-2zM986 643h2v2h-2zM461 136h3v3h-3zM422 549h2v2h-2zM348 83h2v2h-2zM415 28h3v3h-3zM830 527h3v3h-3zM542 214h2v2h-2zM137 454h2v2h-2zM836 468h3v3h-3zM321 343h3v3h-3zM761 728h2v2h-2zM268 465h3v3h-3zM102 608h2v2h-2zM625 554h2v2h-2zM906 607h2v2h-2zM325 270h3v3h-3zM692 156h2v2h-2zM696 1024h2v2h-2zM235 362h3v3h-3zM146 474h3v3h-3zM348 374h3v3h-3zM953 501h2v2h-2zM501 971h2v2h-2zM813 560h3v3h-3zM329 454h2v2h-2zM222 580h2v2h-2zM357 639h2v2h-2zM730 967h2v2h-2zM421 799h3v3h-3zM293 968h2v2h-2zM744 640h3v3h-3zM998 568h2v2h-2zM86 562h3v3h-3zM968 181h2v2h-2zM399 262h3v3h-3zM692 539h3v3h-3zM461 205h2v2h-2zM934 539h2v2h-2zM867 715h2v2h-2zM807 992h2v2h-2zM669 572h2v2h-2zM574 500h2v2h-2zM1013 620h2v2h-2zM961 702h2v2h-2zM565 5h3v3h-3zM905 668h2v2h-2zM985 711h2v2h-2zM830 679h2v2h-2zM346 117h2v2h-2zM330 159h2v2h-2zM648 645h3v3h-3zM257 467h3v3h-3zM703 944h2v2h-2zM344 995h3v3h-3zM395 22h3v3h-3zM331 43h2v2h-2zM708 964h3v3h-3zM967 241h2v2h-2zM539 20h2v2h-2zM518 523h2v2h-2zM25 957h3v3h-3zM590 606h2v2h-2zM635 445h2v2h-2zM491 674h2v2h-2zM231 435h2v2h-2zM906 659h3v3h-3zM523 989h2v2h-2zM523 233h2v2h-2zM954 533h3v3h-3zM538 183h3v3h-3zM868 578h2v2h-2zM523 927h2v2h-2zM993 509h2v2h-2zM835 658h2v2h-2zM361 312h3v3h-3zM663 61h2v2h-2zM8 353h2v2h-2zM253 270h2v2h-2zM826 290h2v2h-2zM453 464h2v2h-2zM433 749h3v3h-3zM717 595h2v2h-2zM587 683h2v2h-2zM352 434h2v2h-2z"/><path fill="rgb(75,75,75)" d="M251 574h2v2h-2zM516 358h2v2h-2zM158 686h2v2h-2zM590 993h3v3h-3zM771 499h2v2h-2zM382 174h3v3h-3zM809 156h3v3h-3zM951 462h3v3h-3zM332 752h2v2h-2zM459 19h2v2h-2zM853 269h3v3h-3zM1036 39h3v3h-3zM495 524h2v2h-2zM275 476h3v3h-3zM342 333h2v2h-2zM466 244h3v3h-3zM480 169h2v2h-2zM668 948h2v2h-2zM653 319h2v2h-2zM817 27h3v3h-3zM959 217h2v2h-2zM379 50h3v3h-3zM822 408h2v2h-2zM777 822h2v2h-2zM544 904h3v3h-3zM261 441h2v2h-2zM316 401h2v2h-2zM345 330h3v3h-3zM495 798h3v3h-3zM507 62h3v3h-3zM904 596h3v3h-3zM810 521h3v3h-3zM611 10h2v2h-2zM541 21h2v2h-2zM292 101h3v3h-3zM981 981h2v2h-2zM979 705h2v2h-2zM529 532h2v2h-2zM516 285h3v3h-3zM140 254h2v2h-2zM186 284h3v3h-3zM617 897h2v2h-2zM977 405h3v3h-3zM1027 334h2v2h-2zM1031 397h2v2h-2zM312 559h2v2h-2zM390 418h2v2h-2zM163 302h2v2h-2zM627 151h2v2h-2zM1032 557h2v2h-2zM809 298h3v3h-3zM374 95h3v3h-3zM705 635h2v2h-2zM988 752h2v2h-2zM265 201h2v2h-2zM378 889h3v3h-3zM467 930h3v3h-3zM588 1029h3v3h-3zM1018 472h3v3h-3zM909 260h3v3h-3zM936 662h2v2h-2zM860 691h2v2h-2zM845 367h2v2h-2zM939 789h3v3h-3zM419 42h2v2h-2zM237 963h2v2h-2zM821 311h2v2h-2zM621 481h3v3h-3zM267 989h2v2h-2zM782 883h2v2h-2zM998 378h2v2h-2zM261 367h3v3h-3zM324 534h3v3h-3zM523 888h2v2h-2zM656 354h2v2h-2zM32 811h2v2h-2zM609 417h2v2h-2zM583 217h2v2h-2zM402 1025h3v3h-3zM560 1006h2v2h-2zM408 81h2v2h-2zM560 244h2v2h-2zM608 465h3v3h-3zM667 916h2v2h-2zM489 473h2v2h-2zM523 147h2v2h-2zM589 144h2v2h-2zM888 688h2v2h-2zM378 929h2v2h-2zM535 836h2v2h-2zM748 447h2v2h-2zM266 538h2v2h-2zM461 90h3v3h-3zM207 168h2v2h-2zM286 543h3v3h-3zM117 169h2v2h-2zM691 348h3v3h-3zM514 279h2v2h-2zM520 294h3v3h-3zM163 651h2v2h-2zM118 336h3v3h-3zM531 116h2v2h-2zM805 919h2v2h-2zM334 418h2v2h-2zM285 314h3v3h-3zM154 840h2v2h-2zM481 363h3v3h-3zM481 599h3v3h-3zM978 935h2v2h-2zM430 930h2v2h-2zM1032 983h2v2h-2zM930 478h2v2h-2zM1025 928h3v3h-3zM985 420h2v2h-2zM797 616h3v3h-3zM506 153h2v2h-2zM847 591h2v2h-2zM271 286h2v2h-2zM512 412h2v2h-2zM361 837h2v2h-2zM840 630h2v2h-2zM225 519h2v2h-2zM854 315h2v2h-2zM328 217h3v3h-3zM764 697h2v2h-2zM514 512h2v2h-2zM483 490h2v2h-2zM972 642h2v2h-2zM357 35h2v2h-2zM939 537h3v3h-3zM443 960h2v2h-2zM741 338h2v2h-2zM709 994h3v3h-3zM393 917h3v3h-3zM919 713h3v3h-3zM272 466h3v3h-3zM971 604h2v2h-2zM226 449h2v2h-2zM893 418h2v2h-2zM698 386h3v3h-3zM894 525h3v3h-3zM916 488h2v2h-2zM744 484h2v2h-2zM401 95h2v2h-2zM476 1041h2v2h-2zM394 72h2v2h-2zM243 398h2v2h-2zM812 334h2v2h-2zM234 345h2v2h-2zM609 541h3v3h-3zM291 1026h2v2h-2zM352 245h2v2h-2zM586 634h2v2h-2zM389 397h3v3h-3zM428 377h3v3h-3zM837 64h3v3h-3zM109 374h2v2h-2zM288 971h2v2h-2zM405 443h2v2h-2zM933 340h3v3h-3zM203 662h3v3h-3zM453 436h2v2h-2zM901 389h2v2h-2zM22 899h2v2h-2zM971 304h3v3h-3zM101 878h2v2h-2zM368 102h3v3h-3zM542 675h2v2h-2zM434 295h3v3h-3zM334 229h2v2h-2zM699 417h3v3h-3zM720 648h3v3h-3zM608 604h3v3h-3zM483 255h3v3h-3zM793 432h2v2h-2zM926 780h3v3h-3zM667 724h2v2h-2zM881 317h3v3h-3zM413 546h2v2h-2zM815 965h2v2h-2zM741 467h2v2h-2zM437 551h2v2h-2zM698 999h2v2h-2zM962 973h3v3h-3zM453 286h2v2h-2zM578 545h2v2h-2zM710 941h3v3h-3zM495 73h2v2h-2zM554 404h2v2h-2zM933 621h2v2h-2zM698 157h2v2h-2zM1012 472h3v3h-3zM677 230h2v2h-2zM988 915h2v2h-2zM475 1024h2v2h-2zM1017 329h2v2h-2zM685 239h2v2h-2zM328 898h2v2h-2zM277 941h2v2h-2zM162 277h3v3h-3zM273 552h2v2h-2zM511 733h2v2h-2zM630 278h2v2h-2zM1004 1022h3v3h-3zM515 605h3v3h-3zM336 111h2v2h-2zM553 236h3v3h-3zM388 19h2v2h-2zM962 210h2v2h-2zM118 350h2v2h-2zM191 274h2v2h-2zM384 3h2v2h-2zM343 289h2v2h-2zM138 72h2v2h-2zM932 103h2v2h-2zM635 297h3v3h-3zM451 267h2v2h-2zM703 429h2v2h-2zM695 466h2v2h-2zM346 24h2v2h-2zM391 168h3v3h-3zM399 82h2v2h-2zM490 307h3v3h-3zM637 997h2v2h-2zM593 283h2v2h-2zM346 604h2v2h-2zM916 969h3v3h-3zM611 629h3v3h-3zM816 59h2v2h-2zM959 243h3v3h-3zM285 1020h3v3h-3zM537 191h2v2h-2zM201 433h2v2h-2zM296 1005h2v2h-2zM892 555h2v2h-2zM256 984h3v3h-3zM1023 570h3v3h-3zM625 882h2v2h-2zM127 344h2v2h-2zM586 114h2v2h-2zM488 133h3v3h-3zM805 90h2v2h-2zM217 345h2v2h-2zM989 969h2v2h-2zM4 370h2v2h-2zM425 952h2v2h-2zM405 885h3v3h-3zM1014 883h2v2h-2zM834 1037h2v2h-2zM1002 347h3v3h-3zM601 277h2v2h-2zM566 202h2v2h-2zM1006 1016h3v3h-3zM465 343h2v2h-2zM323 117h2v2h-2zM891 248h2v2h-2zM686 288h2v2h-2zM507 56h2v2h-2zM443 594h2v2h-2zM1037 126h2v2h-2zM248 1027h3v3h-3zM980 587h2v2h-2zM506 441h2v2h-2zM208 278h3v3h-3zM936 1028h2v2h-2zM605 328h2v2h-2zM693 683h2v2h-2zM772 593h2v2h-2zM961 646h2v2h-2zM701 487h3v3h-3zM909 768h3v3h-3zM332 59h3v3h-3zM424 336h2v2h-2zM157 112h2v2h-2zM583 632h2v2h-2zM663 152h2v2h-2zM1026 333h3v3h-3zM629 755h2v2h-2zM182 388h3v3h-3zM214 302h2v2h-2zM968 140h2v2h-2zM356 362h2v2h-2zM408 194h2v2h-2zM232 490h2v2h-2zM426 379h3v3h-3zM423 606h2v2h-2zM10 534h2v2h-2zM619 648h3v3h-3zM1023 77h3v3h-3zM466 12h2v2h-2zM573 82h2v2h-2zM701 544h2v2h-2zM385 164h3v3h-3zM923 439h3v3h-3zM361 102h2v2h-2zM317 331h3v3h-3zM119 465h2v2h-2zM166 434h2v2h-2zM921 985h2v2h-2zM416 833h2v2h-2zM524 837h3v3h-3zM169 244h3v3h-3zM888 544h2v2h-2zM515 16h2v2h-2zM798 918h2v2h-2zM746 720h3v3h-3zM805 699h3v3h-3zM634 946h2v2h-2zM798 1031h2v2h-2zM1027 845h2v2h-2zM554 560h2v2h-2zM163 285h2v2h-2zM129 353h2v2h-2zM937 458h2v2h-2zM868 490h3v3h-3zM603 157h2v2h-2zM591 434h3v3h-3zM967 413h2v2h-2zM646 903h2v2h-2zM785 790h2v2h-2zM654 37h3v3h-3zM944 725h3v3h-3zM574 27h3v3h-3zM317 890h2v2h-2zM1023 680h3v3h-3zM456 979h3v3h-3zM492 490h2v2h-2zM613 373h2v2h-2zM455 826h3v3h-3zM1014 350h2v2h-2zM1005 402h3v3h-3zM965 66h2v2h-2zM530 405h3v3h-3zM323 436h3v3h-3zM479 987h3v3h-3zM180 431h3v3h-3zM258 886h3v3h-3zM430 347h2v2h-2zM173 73h2v2h-2zM939 363h2v2h-2zM279 472h2v2h-2zM798 513h2v2h-2zM643 1011h2v2h-2zM514 920h2v2h-2zM416 854h2v2h-2zM812 700h2v2h-2zM454 347h2v2h-2zM922 582h2v2h-2zM358 506h3v3h-3zM717 525h3v3h-3zM578 256h2v2h-2zM522 1039h3v3h-3zM226 627h2v2h-2zM437 87h2v2h-2zM290 144h2v2h-2zM928 1025h2v2h-2zM480 1024h3v3h-3zM681 1012h3v3h-3zM1024 156h2v2h-2zM308 996h2v2h-2zM456 442h2v2h-2zM182 267h2v2h-2zM598 900h3v3h-3zM959 518h2v2h-2zM879 558h2v2h-2zM307 164h2v2h-2zM98 358h2v2h-2zM544 10h3v3h-3zM510 24h2v2h-2zM1025 347h3v3h-3zM775 568h2v2h-2zM266 411h3v3h-3zM1016 241h3v3h-3zM458 75h2v2h-2zM229 1029h3v3h-3zM797 435h3v3h-3zM543 307h3v3h-3zM861 991h3v3h-3zM556 1024h2v2h-2zM627 67h2v2h-2zM469 802h2v2h-2zM448 144h2v2h-2zM240 1009h2v2h-2zM413 534h2v2h-2zM793 531h2v2h-2zM983 674h2v2h-2zM1035 309h2v2h-2zM715 565h2v2h-2zM506 244h2v2h-2zM532 593h2v2h-2zM712 240h2v2h-2zM629 990h2v2h-2zM760 547h3v3h-3zM873 953h2v2h-2zM685 1007h3v3h-3zM935 101h3v3h-3zM524 192h2v2h-2zM706 61h3v3h-3zM741 1009h3v3h-3zM863 488h3v3h-3zM322 888h3v3h-3zM739 484h2v2h-2zM863 416h2v2h-2zM477 264h2v2h-2zM280 961h2v2h-2zM427 602h2v2h-2zM60 867h3v3h-3zM1016 85h2v2h-2zM436 950h2v2h-2zM213 252h2v2h-2zM309 400h3v3h-3zM290 437h2v2h-2zM985 1026h2v2h-2zM706 112h2v2h-2zM634 443h2v2h-2zM764 715h3v3h-3zM428 916h3v3h-3zM171 207h2v2h-2zM968 363h2v2h-2zM747 532h2v2h-2zM599 920h2v2h-2zM528 497h2v2h-2zM1015 668h3v3h-3zM377 92h2v2h-2zM519 909h3v3h-3zM310 230h2v2h-2zM856 389h2v2h-2zM521 26h3v3h-3zM268 48h2v2h-2zM533 909h2v2h-2zM250 1014h2v2h-2zM587 547h3v3h-3zM508 497h2v2h-2zM765 467h2v2h-2zM814 974h2v2h-2zM831 919h2v2h-2zM548 126h2v2h-2zM483 411h3v3h-3zM367 188h3v3h-3zM861 959h2v2h-2zM367 150h3v3h-3zM1042 990h2v2h-2zM431 940h2v2h-2zM264 284h2v2h-2zM570 696h3v3h-3zM456 766h2v2h-2zM303 514h2v2h-2zM624 992h2v2h-2zM623 754h2v2h-2zM1004 1003h2v2h-2zM635 1009h3v3h-3zM310 26h3v3h-3zM334 306h2v2h-2zM499 278h2v2h-2zM695 245h2v2h-2zM569 508h3v3h-3zM37 816h2v2h-2zM403 1037h2v2h-2zM937 528h2v2h-2zM256 130h2v2h-2zM372 355h3v3h-3zM691 320h3v3h-3zM487 476h3v3h-3zM580 1004h2v2h-2zM245 355h2v2h-2zM777 999h2v2h-2zM838 39h3v3h-3zM104 690h3v3h-3zM543 141h3v3h-3zM922 815h2v2h-2zM658 516h3v3h-3zM557 884h2v2h-2zM660 81h2v2h-2zM605 891h3v3h-3zM811 318h2v2h-2zM736 62h2v2h-2zM470 221h2v2h-2zM964 234h2v2h-2zM434 101h2v2h-2zM788 915h2v2h-2zM481 218h2v2h-2zM898 546h3v3h-3zM537 679h3v3h-3zM968 640h2v2h-2zM96 469h2v2h-2zM472 995h3v3h-3zM254 82h2v2h-2zM559 399h3v3h-3zM261 902h2v2h-2zM475 13h2v2h-2zM998 1008h3v3h-3zM832 447h3v3h-3zM607 517h2v2h-2zM914 461h2v2h-2zM682 140h2v2h-2zM753 891h2v2h-2zM742 311h3v3h-3zM614 606h2v2h-2zM231 995h3v3h-3zM982 517h2v2h-2zM478 348h2v2h-2zM164 513h2v2h-2zM487 566h2v2h-2zM843 982h2v2h-2zM336 1009h2v2h-2zM584 582h2v2h-2zM228 678h3v3h-3zM347 25h2v2h-2zM577 192h2v2h-2zM184 218h3v3h-3zM904 671h3v3h-3zM994 300h2v2h-2zM476 466h2v2h-2zM381 542h2v2h-2zM213 250h3v3h-3zM459 650h3v3h-3zM516 269h2v2h-2zM87 641h3v3h-3zM277 127h3v3h-3zM571 896h2v2h-2zM922 229h3v3h-3zM662 903h2v2h-2zM509 324h2v2h-2zM993 505h2v2h-2zM555 895h2v2h-2zM328 943h3v3h-3zM796 410h2v2h-2zM347 494h3v3h-3zM237 327h2v2h-2zM81 213h3v3h-3zM910 751h2v2h-2zM414 993h2v2h-2zM866 644h3v3h-3zM421 353h2v2h-2zM784 719h2v2h-2zM345 191h2v2h-2zM317 5h2v2h-2zM524 168h2v2h-2zM528 440h3v3h-3zM946 190h2v2h-2zM417 707h2v2h-2zM837 425h2v2h-2zM857 353h2v2h-2zM525 472h2v2h-2zM23 493h2v2h-2zM386 417h2v2h-2zM471 912h2v2h-2zM694 22h2v2h-2zM292 87h2v2h-2zM974 509h3v3h-3zM205 256h2v2h-2zM304 389h2v2h-2zM864 1015h2v2h-2zM522 382h3v3h-3zM887 434h3v3h-3zM218 632h2v2h-2zM204 508h2v2h-2zM569 584h2v2h-2zM475 988h2v2h-2zM462 532h2v2h-2zM846 265h3v3h-3zM599 261h2v2h-2zM510 369h2v2h-2zM960 268h3v3h-3zM538 467h3v3h-3zM11 855h3v3h-3zM857 963h2v2h-2zM828 298h2v2h-2zM878 342h2v2h-2zM343 915h2v2h-2zM552 927h2v2h-2zM229 468h2v2h-2zM454 307h2v2h-2zM632 339h3v3h-3zM66 861h3v3h-3zM369 854h2v2h-2zM316 274h3v3h-3zM387 14h2v2h-2zM997 568h3v3h-3zM716 613h2v2h-2zM867 120h2v2h-2zM864 130h2v2h-2zM560 407h3v3h-3zM150 483h2v2h-2zM562 930h2v2h-2zM631 118h3v3h-3zM431 176h2v2h-2zM776 649h3v3h-3zM885 267h2v2h-2zM895 375h3v3h-3zM426 108h2v2h-2zM514 214h3v3h-3zM977 576h2v2h-2zM704 770h3v3h-3zM631 211h3v3h-3zM971 372h3v3h-3zM676 1040h2v2h-2zM323 1022h3v3h-3zM925 706h2v2h-2zM1032 906h3v3h-3zM729 520h3v3h-3zM849 1040h2v2h-2zM351 160h3v3h-3zM880 118h3v3h-3zM932 992h2v2h-2zM509 439h2v2h-2zM624 228h2v2h-2zM196 436h2v2h-2zM826 902h2v2h-2zM426 238h3v3h-3zM521 844h3v3h-3zM890 514h3v3h-3zM840 142h2v2h-2zM746 679h2v2h-2zM423 212h2v2h-2zM943 295h3v3h-3zM464 781h3v3h-3zM1029 52h3v3h-3zM208 1033h2v2h-2zM466 937h3v3h-3zM742 455h3v3h-3zM413 876h3v3h-3zM283 1010h2v2h-2zM441 42h2v2h-2zM663 993h2v2h-2zM837 964h3v3h-3zM347 43h2v2h-2zM418 469h3v3h-3zM843 908h2v2h-2zM220 290h2v2h-2zM142 433h2v2h-2zM354 990h2v2h-2zM471 728h3v3h-3zM531 363h2v2h-2zM689 780h2v2h-2zM426 238h3v3h-3zM581 434h2v2h-2zM301 288h3v3h-3zM129 457h2v2h-2zM513 910h2v2h-2zM184 403h3v3h-3zM434 78h3v3h-3zM911 718h3v3h-3zM1032 615h3v3h-3zM1019 438h3v3h-3zM330 1012h2v2h-2zM852 362h2v2h-2zM188 201h2v2h-2zM682 390h2v2h-2zM633 35h3v3h-3zM689 930h3v3h-3zM990 108h3v3h-3zM725 110h2v2h-2zM77 686h2v2h-2zM363 47h2v2h-2zM593 475h2v2h-2zM276 245h2v2h-2zM561 1h2v2h-2zM984 730h3v3h-3zM368 207h3v3h-3zM1010 551h2v2h-2zM269 358h2v2h-2zM906 669h2v2h-2zM986 668h2v2h-2zM991 1026h2v2h-2zM522 930h3v3h-3zM574 38h2v2h-2zM640 608h3v3h-3zM718 502h2v2h-2zM713 410h2v2h-2zM398 256h2v2h-2zM734 381h2v2h-2zM617 943h2v2h-2zM536 907h2v2h-2zM453 967h2v2h-2zM550 993h2v2h-2zM932 115h3v3h-3zM97 541h3v3h-3zM169 192h2v2h-2zM794 244h2v2h-2zM437 478h3v3h-3zM617 490h3v3h-3zM543 930h2v2h-2zM695 325h3v3h-3zM502 771h3v3h-3zM341 902h2v2h-2zM370 128h2v2h-2zM764 969h3v3h-3zM319 114h2v2h-2zM523 78h3v3h-3zM507 912h2v2h-2zM981 244h3v3h-3zM249 1008h2v2h-2zM706 417h2v2h-2zM291 372h2v2h-2zM494 921h2v2h-2zM810 335h3v3h-3zM977 443h2v2h-2zM272 484h2v2h-2zM257 295h2v2h-2zM373 890h2v2h-2zM683 449h2v2h-2zM395 212h2v2h-2zM576 566h2v2h-2zM355 885h2v2h-2zM219 412h2v2h-2zM891 130h2v2h-2zM582 255h2v2h-2zM281 161h2v2h-2zM632 964h3v3h-3zM735 265h2v2h-2zM440 133h2v2h-2zM165 423h3v3h-3zM446 165h3v3h-3zM880 678h3v3h-3zM433 897h2v2h-2zM668 569h2v2h-2zM175 59h2v2h-2zM402 123h2v2h-2zM806 886h2v2h-2zM983 688h3v3h-3zM630 986h3v3h-3zM446 103h3v3h-3zM358 927h3v3h-3zM318 952h2v2h-2zM550 162h3v3h-3zM932 409h2v2h-2zM955 548h3v3h-3zM469 974h2v2h-2zM506 386h2v2h-2zM193 799h3v3h-3zM994 556h2v2h-2zM959 689h2v2h-2zM509 299h3v3h-3zM90 506h3v3h-3zM969 567h3v3h-3zM249 127h2v2h-2zM393 214h2v2h-2zM854 213h2v2h-2zM567 570h2v2h-2zM267 276h3v3h-3zM642 5h2v2h-2zM1031 454h2v2h-2zM680 32h2v2h-2zM566 1017h2v2h-2zM1018 277h2v2h-2zM797 538h2v2h-2zM335 960h3v3h-3zM541 1022h2v2h-2zM615 491h2v2h-2zM940 176h2v2h-2zM508 1042h2v2h-2zM962 382h3v3h-3zM1039 290h2v2h-2zM712 28h2v2h-2zM695 333h3v3h-3zM830 335h2v2h-2zM716 48h3v3h-3zM672 564h3v3h-3zM303 179h2v2h-2zM943 415h3v3h-3zM14 330h3v3h-3zM1000 629h2v2h-2zM702 938h2v2h-2zM531 345h2v2h-2zM560 646h2v2h-2zM417 319h3v3h-3zM676 530h3v3h-3zM553 324h2v2h-2zM379 965h2v2h-2zM551 41h2v2h-2zM853 1000h3v3h-3zM654 920h2v2h-2zM479 638h3v3h-3zM995 523h2v2h-2zM1017 627h2v2h-2zM934 660h2v2h-2zM431 1035h3v3h-3zM609 374h2v2h-2zM950 471h2v2h-2zM371 39h3v3h-3zM363 996h2v2h-2zM704 962h2v2h-2zM711 524h2v2h-2zM1016 996h3v3h-3zM617 417h2v2h-2zM413 394h2v2h-2zM324 137h3v3h-3zM973 608h2v2h-2zM474 111h2v2h-2zM928 1009h3v3h-3zM679 955h2v2h-2zM770 688h2v2h-2zM216 404h2v2h-2zM309 369h2v2h-2zM211 377h2v2h-2zM517 712h2v2h-2zM264 486h3v3h-3zM473 615h2v2h-2zM612 303h3v3h-3zM347 946h2v2h-2zM982 491h2v2h-2zM608 623h3v3h-3zM478 648h2v2h-2zM463 553h2v2h-2zM181 267h3v3h-3zM923 421h2v2h-2zM806 873h2v2h-2zM822 1007h2v2h-2zM308 251h2v2h-2zM1000 351h3v3h-3zM1 430h3v3h-3zM1005 900h2v2h-2zM368 946h3v3h-3zM664 247h3v3h-3zM592 137h2v2h-2zM377 555h2v2h-2zM907 774h2v2h-2zM976 298h2v2h-2zM97 544h2v2h-2zM646 1041h2v2h-2zM849 721h3v3h-3zM632 1037h2v2h-2zM457 462h2v2h-2zM957 470h2v2h-2zM311 323h2v2h-2zM311 1036h2v2h-2zM925 1010h3v3h-3zM192 208h3v3h-3zM639 186h3v3h-3zM244 263h3v3h-3zM754 629h2v2h-2zM263 405h2v2h-2zM940 567h3v3h-3zM138 210h3v3h-3zM986 723h3v3h-3zM783 379h2v2h-2zM264 483h2v2h-2zM397 803h2v2h-2zM329 33h2v2h-2zM335 253h2v2h-2zM213 487h3v3h-3zM573 412h2v2h-2zM289 197h2v2h-2zM988 493h2v2h-2zM512 424h2v2h-2zM325 157h2v2h-2zM798 892h2v2h-2zM911 342h2v2h-2zM647 624h2v2h-2zM504 92h3v3h-3zM237 377h2v2h-2zM441 648h2v2h-2zM491 940h2v2h-2zM821 489h3v3h-3zM548 552h3v3h-3zM516 412h3v3h-3zM538 778h2v2h-2zM875 1037h3v3h-3zM370 34h3v3h-3zM498 473h2v2h-2zM1007 553h2v2h-2zM687 564h2v2h-2zM641 42h3v3h-3zM733 81h2v2h-2zM612 451h2v2h-2zM80 521h2v2h-2zM716 670h2v2h-2zM869 899h3v3h-3zM674 610h2v2h-2zM826 632h2v2h-2zM723 420h2v2h-2zM796 953h3v3h-3zM404 594h3v3h-3zM1019 588h2v2h-2zM315 225h2v2h-2zM429 138h2v2h-2zM1028 456h2v2h-2zM710 717h2v2h-2zM169 302h2v2h-2zM288 982h2v2h-2zM431 123h3v3h-3zM211 418h3v3h-3zM440 44h2v2h-2zM601 902h2v2h-2zM843 1038h3v3h-3zM444 14h2v2h-2zM589 1040h3v3h-3zM560 39h2v2h-2zM420 965h3v3h-3zM290 422h2v2h-2zM480 635h3v3h-3zM192 328h2v2h-2zM189 450h2v2h-2zM454 893h2v2h-2zM662 580h3v3h-3zM994 255h2v2h-2zM971 399h2v2h-2zM127 737h2v2h-2zM648 320h2v2h-2zM678 248h2v2h-2zM591 36h3v3h-3zM257 555h3v3h-3zM321 1004h2v2h-2zM580 449h3v3h-3zM267 1019h2v2h-2zM1021 628h3v3h-3zM922 782h2v2h-2zM790 577h3v3h-3zM15 767h2v2h-2zM987 721h2v2h-2zM547 168h2v2h-2zM592 225h2v2h-2zM521 72h2v2h-2zM208 382h2v2h-2zM689 451h2v2h-2zM867 546h3v3h-3zM879 795h2v2h-2zM532 532h3v3h-3zM274 452h2v2h-2zM357 845h2v2h-2zM420 403h3v3h-3zM648 968h2v2h-2zM977 48h3v3h-3zM1039 32h2v2h-2zM781 431h2v2h-2zM975 458h3v3h-3zM939 487h3v3h-3zM352 200h3v3h-3zM291 1039h3v3h-3zM547 617h2v2h-2zM630 61h3v3h-3zM471 1009h3v3h-3zM295 883h2v2h-2zM848 720h2v2h-2zM323 141h2v2h-2zM667 434h3v3h-3zM1006 986h2v2h-2zM882 544h2v2h-2zM123 407h2v2h-2zM891 579h3v3h-3zM654 440h2v2h-2zM357 243h3v3h-3zM431 11h2v2h-2zM869 905h2v2h-2zM469 539h3v3h-3zM639 889h2v2h-2zM720 763h3v3h-3zM696 504h2v2h-2zM547 6h2v2h-2zM620 366h2v2h-2zM941 566h2v2h-2zM65 523h2v2h-2zM216 425h2v2h-2zM579 930h2v2h-2zM233 1023h2v2h-2zM567 46h3v3h-3zM621 587h2v2h-2zM905 544h3v3h-3zM449 582h2v2h-2zM492 321h2v2h-2zM341 442h3v3h-3zM980 483h3v3h-3zM411 588h2v2h-2zM291 383h3v3h-3zM633 963h2v2h-2zM687 576h2v2h-2zM465 503h3v3h-3zM549 49h2v2h-2zM482 46h2v2h-2zM954 598h2v2h-2zM459 502h3v3h-3zM1012 258h2v2h-2zM713 69h2v2h-2zM397 889h3v3h-3zM593 251h2v2h-2zM549 515h3v3h-3zM1033 368h3v3h-3zM653 6h2v2h-2zM858 937h2v2h-2zM720 473h2v2h-2zM992 361h2v2h-2zM388 271h2v2h-2zM337 333h2v2h-2zM1036 264h2v2h-2zM757 575h2v2h-2zM527 265h3v3h-3zM338 95h3v3h-3zM237 361h3v3h-3zM353 985h2v2h-2zM782 318h2v2h-2zM528 104h2v2h-2zM664 299h3v3h-3zM369 991h2v2h-2zM325 368h3v3h-3zM178 704h2v2h-2zM431 42h3v3h-3zM288 463h2v2h-2zM669 375h2v2h-2zM352 1001h2v2h-2zM974 547h2v2h-2zM242 266h3v3h-3zM955 227h3v3h-3zM435 229h3v3h-3zM385 357h2v2h-2zM600 181h3v3h-3zM473 1021h2v2h-2zM606 231h2v2h-2zM269 217h2v2h-2zM564 79h2v2h-2zM106 486h2v2h-2zM966 309h2v2h-2zM647 518h2v2h-2zM475 149h3v3h-3zM817 555h2v2h-2zM9 418h2v2h-2zM538 558h2v2h-2zM942 273h2v2h-2zM886 433h2v2h-2zM261 90h3v3h-3zM46 455h2v2h-2zM956 496h3v3h-3zM889 29h2v2h-2zM362 12h2v2h-2zM490 426h2v2h-2zM665 564h2v2h-2zM335 967h2v2h-2zM214 342h2v2h-2zM723 533h2v2h-2zM595 60h2v2h-2zM620 82h2v2h-2zM168 385h3v3h-3zM463 922h2v2h-2zM312 606h3v3h-3zM480 964h3v3h-3zM823 547h2v2h-2zM575 785h2v2h-2zM844 971h2v2h-2zM545 706h2v2h-2zM536 144h2v2h-2zM364 291h2v2h-2zM954 1034h3v3h-3zM866 281h3v3h-3zM467 606h2v2h-2zM344 13h2v2h-2zM786 562h3v3h-3zM282 680h2v2h-2zM456 1038h2v2h-2zM850 679h2v2h-2zM1006 352h3v3h-3zM477 11h2v2h-2zM212 507h2v2h-2zM280 995h2v2h-2zM211 561h2v2h-2zM1029 199h2v2h-2zM551 653h3v3h-3zM491 903h2v2h-2zM335 516h3v3h-3zM462 533h2v2h-2zM658 203h3v3h-3zM733 620h3v3h-3zM924 654h2v2h-2zM554 1011h2v2h-2zM334 993h2v2h-2zM315 180h2v2h-2zM402 351h2v2h-2zM584 118h2v2h-2zM402 355h2v2h-2zM519 60h3v3h-3zM970 288h3v3h-3zM269 927h2v2h-2zM607 544h2v2h-2zM354 969h2v2h-2zM548 38h3v3h-3zM828 984h2v2h-2zM882 574h2v2h-2zM725 1006h2v2h-2zM650 148h2v2h-2zM904 305h2v2h-2zM177 248h3v3h-3zM531 308h2v2h-2zM547 499h2v2h-2zM545 899h2v2h-2zM194 258h2v2h-2zM161 702h2v2h-2zM388 100h2v2h-2zM918 84h2v2h-2zM288 206h2v2h-2zM792 978h3v3h-3zM148 249h3v3h-3zM676 83h3v3h-3zM1004 585h2v2h-2zM595 76h3v3h-3zM932 953h2v2h-2zM349 1038h2v2h-2zM670 462h2v2h-2zM1027 173h2v2h-2zM509 1002h3v3h-3zM740 420h3v3h-3zM363 906h3v3h-3zM142 852h2v2h-2zM1025 211h2v2h-2zM818 997h3v3h-3zM642 537h2v2h-2zM897 397h3v3h-3zM988 604h2v2h-2zM932 669h3v3h-3zM564 412h2v2h-2zM500 218h3v3h-3zM584 961h2v2h-2zM162 274h3v3h-3zM787 502h3v3h-3zM416 576h2v2h-2zM908 511h2v2h-2zM571 408h3v3h-3zM784 963h2v2h-2zM412 383h2v2h-2zM979 102h2v2h-2zM595 370h2v2h-2zM111 918h2v2h-2zM426 597h2v2h-2zM571 435h2v2h-2zM426 384h2v2h-2zM422 982h2v2h-2zM322 364h2v2h-2zM154 427h2v2h-2zM792 718h3v3h-3zM467 222h3v3h-3zM674 581h2v2h-2zM745 342h2v2h-2zM128 370h3v3h-3zM404 177h2v2h-2zM974 460h2v2h-2zM967 321h3v3h-3zM341 120h2v2h-2zM591 560h3v3h-3zM390 467h2v2h-2zM949 644h2v2h-2zM806 956h2v2h-2zM250 532h2v2h-2zM1000 685h2v2h-2zM963 1025h2v2h-2zM684 966h2v2h-2zM680 442h3v3h-3zM446 344h2v2h-2zM443 371h2v2h-2zM789 1019h2v2h-2zM41 923h3v3h-3zM722 998h2v2h-2z"/><path fill="rgb(60,60,60)" d="M230 580h2v2h-2zM854 900h2v2h-2zM583 415h3v3h-3zM640 73h2v2h-2zM661 996h2v2h-2zM1015 84h2v2h-2zM683 637h3v3h-3zM875 143h2v2h-2zM655 553h3v3h-3zM1019 536h2v2h-2zM305 479h2v2h-2zM323 372h2v2h-2zM722 647h2v2h-2zM572 325h2v2h-2zM493 612h3v3h-3zM994 403h2v2h-2zM533 408h2v2h-2zM169 179h2v2h-2zM314 872h2v2h-2zM227 417h2v2h-2zM457 24h2v2h-2zM134 449h3v3h-3zM722 114h2v2h-2zM638 684h2v2h-2zM755 498h2v2h-2zM794 1019h2v2h-2zM215 405h2v2h-2zM723 522h2v2h-2zM326 655h2v2h-2zM932 342h2v2h-2zM370 59h2v2h-2zM572 663h3v3h-3zM699 122h2v2h-2zM862 493h2v2h-2zM519 309h2v2h-2zM789 151h3v3h-3zM910 359h2v2h-2zM578 423h2v2h-2zM586 269h2v2h-2zM295 2h2v2h-2zM559 370h3v3h-3zM514 903h2v2h-2zM146 466h2v2h-2zM838 272h2v2h-2zM933 696h2v2h-2zM599 894h3v3h-3zM235 438h3v3h-3zM634 253h2v2h-2zM917 1005h3v3h-3zM358 975h3v3h-3zM970 891h2v2h-2zM703 609h3v3h-3zM585 120h2v2h-2zM393 999h3v3h-3zM982 1040h3v3h-3zM215 719h2v2h-2zM581 47h2v2h-2zM943 985h3v3h-3zM983 375h2v2h-2zM567 1009h2v2h-2zM977 328h2v2h-2zM335 904h2v2h-2zM980 137h2v2h-2zM703 365h2v2h-2zM252 369h3v3h-3zM126 508h2v2h-2zM889 532h2v2h-2zM963 798h3v3h-3zM543 472h2v2h-2zM895 579h3v3h-3zM432 687h3v3h-3zM684 52h2v2h-2zM160 275h3v3h-3zM748 364h3v3h-3zM152 568h2v2h-2zM912 925h2v2h-2zM845 887h2v2h-2zM139 353h2v2h-2zM639 16h2v2h-2zM357 894h2v2h-2zM918 631h3v3h-3zM760 698h2v2h-2zM363 338h2v2h-2zM784 286h3v3h-3zM967 392h3v3h-3zM330 106h2v2h-2zM200 490h2v2h-2zM143 251h2v2h-2zM175 441h2v2h-2zM936 137h2v2h-2zM641 519h3v3h-3zM521 697h3v3h-3zM161 222h2v2h-2zM989 151h2v2h-2zM589 893h2v2h-2zM701 1010h2v2h-2zM570 922h2v2h-2zM422 175h2v2h-2zM811 978h3v3h-3zM771 997h2v2h-2zM451 689h2v2h-2zM731 690h2v2h-2zM689 344h3v3h-3zM467 66h2v2h-2zM424 862h2v2h-2zM687 272h2v2h-2zM538 886h2v2h-2zM542 573h3v3h-3zM499 1028h2v2h-2zM387 897h2v2h-2zM510 261h2v2h-2zM1038 218h2v2h-2zM679 556h2v2h-2zM705 609h2v2h-2zM684 685h3v3h-3zM771 933h2v2h-2zM1009 335h2v2h-2zM314 746h2v2h-2zM819 692h2v2h-2zM514 389h3v3h-3zM329 999h3v3h-3zM621 696h2v2h-2zM590 1034h3v3h-3zM975 19h2v2h-2zM409 151h2v2h-2zM537 300h2v2h-2zM682 234h2v2h-2zM262 537h2v2h-2zM607 348h2v2h-2zM314 568h2v2h-2zM438 277h3v3h-3zM684 614h3v3h-3zM244 812h2v2h-2zM181 252h2v2h-2zM436 958h3v3h-3zM624 380h2v2h-2zM1027 338h2v2h-2zM829 491h2v2h-2zM635 441h2v2h-2zM923 551h2v2h-2zM686 137h2v2h-2zM938 476h2v2h-2zM588 938h3v3h-3zM234 277h2v2h-2zM926 470h2v2h-2zM98 341h2v2h-2zM1009 901h2v2h-2zM597 963h2v2h-2zM373 260h2v2h-2zM312 231h2v2h-2zM745 238h2v2h-2zM278 454h2v2h-2zM214 552h2v2h-2zM788 87h2v2h-2zM972 122h2v2h-2zM571 286h3v3h-3zM578 339h3v3h-3zM688 544h2v2h-2zM611 578h2v2h-2zM910 33h3v3h-3zM529 562h2v2h-2zM408 437h2v2h-2zM729 509h3v3h-3zM579 465h2v2h-2zM832 905h2v2h-2zM457 185h2v2h-2zM565 1034h3v3h-3zM524 16h3v3h-3zM927 621h2v2h-2zM1034 1004h2v2h-2zM471 956h3v3h-3zM445 685h2v2h-2zM576 58h2v2h-2zM1001 701h2v2h-2zM724 572h3v3h-3zM377 1017h2v2h-2zM668 980h2v2h-2zM160 123h3v3h-3zM761 430h3v3h-3zM647 381h2v2h-2zM377 421h2v2h-2zM482 1016h2v2h-2zM558 359h2v2h-2zM684 1023h3v3h-3zM174 475h3v3h-3zM572 642h2v2h-2zM877 474h2v2h-2zM208 367h2v2h-2zM605 282h2v2h-2zM851 564h3v3h-3zM722 1041h3v3h-3zM775 311h2v2h-2zM623 943h3v3h-3zM426 987h2v2h-2zM712 114h2v2h-2zM452 934h3v3h-3zM964 166h3v3h-3zM1029 711h2v2h-2zM529 1008h2v2h-2zM512 554h2v2h-2zM887 429h2v2h-2zM396 885h3v3h-3zM948 304h2v2h-2zM375 953h2v2h-2zM476 170h2v2h-2zM836 332h3v3h-3zM625 1040h3v3h-3zM317 186h2v2h-2zM204 259h2v2h-2zM554 239h2v2h-2zM358 45h2v2h-2zM314 539h3v3h-3zM1030 402h3v3h-3zM481 229h2v2h-2zM431 979h2v2h-2zM588 909h2v2h-2zM625 920h2v2h-2zM796 432h2v2h-2zM1006 702h2v2h-2zM527 88h3v3h-3zM861 196h3v3h-3zM883 403h2v2h-2zM355 484h3v3h-3zM342 51h2v2h-2zM149 260h2v2h-2zM857 332h2v2h-2zM827 924h2v2h-2zM640 319h3v3h-3zM624 976h2v2h-2zM863 459h3v3h-3zM942 720h2v2h-2zM1012 971h2v2h-2zM448 603h2v2h-2zM502 13h2v2h-2zM249 993h2v2h-2zM822 427h2v2h-2zM424 3h2v2h-2zM953 329h3v3h-3zM66 535h2v2h-2zM531 942h2v2h-2zM467 393h2v2h-2zM543 117h2v2h-2zM660 1021h2v2h-2zM667 647h3v3h-3zM934 582h3v3h-3zM573 804h2v2h-2zM637 198h2v2h-2zM733 550h2v2h-2zM334 189h2v2h-2zM489 571h2v2h-2zM519 520h2v2h-2zM15 907h2v2h-2zM440 483h2v2h-2zM972 444h2v2h-2zM473 318h3v3h-3zM103 524h2v2h-2zM621 396h2v2h-2zM711 485h2v2h-2zM615 40h3v3h-3zM877 163h2v2h-2zM368 469h2v2h-2zM828 716h2v2h-2zM348 328h3v3h-3zM868 596h2v2h-2zM742 61h3v3h-3zM169 335h3v3h-3zM623 288h2v2h-2zM896 625h2v2h-2zM907 28h2v2h-2zM962 377h3v3h-3zM557 34h2v2h-2zM445 354h3v3h-3zM1010 64h2v2h-2zM566 651h2v2h-2zM270 93h2v2h-2zM741 34h3v3h-3zM396 820h3v3h-3zM990 84h3v3h-3zM844 716h3v3h-3zM242 1036h2v2h-2zM522 196h2v2h-2zM831 550h3v3h-3zM307 612h2v2h-2zM650 899h3v3h-3zM488 377h2v2h-2zM577 370h3v3h-3zM676 1039h2v2h-2zM341 215h2v2h-2zM337 976h2v2h-2zM955 747h3v3h-3zM464 195h2v2h-2zM489 135h2v2h-2zM295 208h3v3h-3zM829 339h3v3h-3zM381 282h2v2h-2zM859 595h2v2h-2zM1014 363h2v2h-2zM271 971h2v2h-2zM395 967h3v3h-3zM651 467h2v2h-2zM166 33h2v2h-2zM548 96h2v2h-2zM355 356h2v2h-2zM671 519h3v3h-3zM713 138h2v2h-2zM531 206h2v2h-2zM549 408h2v2h-2zM287 302h2v2h-2zM895 577h2v2h-2zM546 276h2v2h-2zM336 189h2v2h-2zM173 505h3v3h-3zM631 53h2v2h-2zM358 60h3v3h-3zM590 641h2v2h-2zM159 580h3v3h-3zM659 534h2v2h-2zM552 996h2v2h-2zM970 65h2v2h-2zM423 425h2v2h-2zM1003 609h3v3h-3zM309 918h3v3h-3zM1025 1003h2v2h-2zM734 580h2v2h-2zM441 149h2v2h-2zM549 244h2v2h-2zM881 462h2v2h-2zM563 568h3v3h-3zM325 261h2v2h-2zM582 501h2v2h-2zM569 645h3v3h-3zM649 572h3v3h-3zM471 326h3v3h-3zM820 585h2v2h-2zM652 471h3v3h-3zM611 571h3v3h-3zM1020 697h3v3h-3zM419 313h2v2h-2zM956 349h2v2h-2zM514 893h3v3h-3zM1001 195h2v2h-2zM895 730h3v3h-3zM941 668h2v2h-2zM48 655h3v3h-3zM154 778h2v2h-2zM2 729h2v2h-2zM765 500h2v2h-2zM692 289h2v2h-2zM79 862h2v2h-2zM635 303h2v2h-2zM1005 499h3v3h-3zM636 133h2v2h-2zM659 573h2v2h-2zM475 439h2v2h-2zM793 32h2v2h-2zM910 873h2v2h-2zM96 620h2v2h-2zM1001 704h2v2h-2zM973 53h2v2h-2zM894 635h2v2h-2zM724 1010h2v2h-2zM665 712h3v3h-3zM466 1006h2v2h-2zM902 612h3v3h-3zM374 185h2v2h-2zM721 166h3v3h-3zM486 941h2v2h-2zM124 496h2v2h-2zM963 804h2v2h-2zM773 1006h2v2h-2zM442 304h2v2h-2zM607 183h3v3h-3zM522 368h2v2h-2zM443 978h3v3h-3zM1024 610h2v2h-2zM266 884h2v2h-2zM983 1000h3v3h-3zM1010 373h3v3h-3zM418 124h2v2h-2zM707 616h2v2h-2zM616 910h2v2h-2zM825 992h2v2h-2zM482 930h3v3h-3zM517 565h3v3h-3zM808 497h2v2h-2zM276 554h2v2h-2zM975 335h2v2h-2zM590 554h2v2h-2zM382 348h2v2h-2zM405 967h2v2h-2zM770 534h2v2h-2zM224 676h2v2h-2zM488 924h3v3h-3zM710 502h2v2h-2zM537 282h2v2h-2zM628 1037h2v2h-2zM407 1026h2v2h-2zM93 338h3v3h-3zM424 998h2v2h-2zM754 358h2v2h-2zM828 1037h2v2h-2zM216 457h2v2h-2zM645 603h2v2h-2zM533 321h2v2h-2zM772 489h3v3h-3zM494 518h2v2h-2zM906 68h2v2h-2zM753 610h2v2h-2zM989 256h2v2h-2zM96 578h3v3h-3zM288 891h2v2h-2zM338 1016h3v3h-3zM449 1024h2v2h-2zM201 308h2v2h-2zM726 988h3v3h-3zM533 519h2v2h-2zM878 573h3v3h-3zM873 620h2v2h-2zM1005 327h2v2h-2zM290 286h3v3h-3zM930 705h3v3h-3zM307 327h2v2h-2zM778 353h3v3h-3zM310 696h3v3h-3zM496 546h2v2h-2zM924 287h2v2h-2zM721 370h3v3h-3zM349 382h2v2h-2zM675 435h3v3h-3zM223 429h3v3h-3zM356 724h2v2h-2zM353 876h3v3h-3zM618 163h2v2h-2zM1025 655h3v3h-3zM346 29h2v2h-2zM852 225h2v2h-2zM230 472h2v2h-2zM573 686h2v2h-2zM407 986h2v2h-2zM193 996h3v3h-3zM939 166h2v2h-2zM798 450h2v2h-2zM1022 987h2v2h-2zM85 107h2v2h-2zM664 418h2v2h-2zM575 932h3v3h-3zM702 540h3v3h-3zM980 120h3v3h-3zM593 921h2v2h-2zM403 607h2v2h-2zM705 669h2v2h-2zM993 60h3v3h-3zM667 962h3v3h-3zM966 906h3v3h-3zM1013 465h2v2h-2zM782 376h2v2h-2zM859 651h2v2h-2zM630 1006h3v3h-3zM674 536h2v2h-2zM799 889h2v2h-2zM459 411h2v2h-2zM898 599h2v2h-2zM549 120h3v3h-3zM972 58h2v2h-2zM789 474h2v2h-2zM603 605h3v3h-3zM473 504h2v2h-2zM1005 514h3v3h-3zM548 78h2v2h-2zM451 257h2v2h-2zM553 113h2v2h-2zM425 684h2v2h-2zM1024 601h3v3h-3zM891 414h2v2h-2zM971 557h2v2h-2zM920 199h2v2h-2zM545 17h2v2h-2zM263 366h2v2h-2zM574 547h3v3h-3zM187 353h2v2h-2zM626 878h2v2h-2zM190 111h2v2h-2zM536 710h3v3h-3zM592 993h2v2h-2zM860 489h2v2h-2zM334 227h2v2h-2zM658 40h2v2h-2zM264 205h2v2h-2zM374 250h2v2h-2zM355 382h3v3h-3zM246 946h2v2h-2zM918 690h3v3h-3zM558 310h3v3h-3zM409 125h2v2h-2zM299 181h2v2h-2zM893 252h2v2h-2zM547 356h3v3h-3zM132 760h2v2h-2zM637 527h2v2h-2zM500 506h2v2h-2zM659 913h2v2h-2zM669 372h3v3h-3zM450 79h2v2h-2zM583 443h2v2h-2zM387 15h3v3h-3zM112 906h3v3h-3zM177 288h2v2h-2zM470 58h2v2h-2zM355 561h2v2h-2zM844 557h2v2h-2zM249 192h2v2h-2zM1005 372h2v2h-2zM907 372h2v2h-2zM457 442h3v3h-3zM563 410h2v2h-2zM128 340h2v2h-2zM656 885h2v2h-2zM365 929h3v3h-3zM688 475h2v2h-2zM654 553h3v3h-3zM83 873h2v2h-2zM1 418h2v2h-2zM816 755h3v3h-3zM387 638h2v2h-2zM345 1041h2v2h-2zM984 658h3v3h-3zM798 601h2v2h-2zM79 300h2v2h-2zM457 959h2v2h-2zM949 469h2v2h-2zM988 914h2v2h-2zM379 873h2v2h-2zM609 195h2v2h-2zM516 616h3v3h-3zM577 432h2v2h-2zM701 465h2v2h-2zM543 619h2v2h-2zM963 537h2v2h-2zM313 386h3v3h-3zM783 1011h2v2h-2zM1021 650h3v3h-3zM988 446h2v2h-2zM662 236h2v2h-2zM982 700h2v2h-2zM1032 472h2v2h-2zM666 968h3v3h-3zM800 551h2v2h-2zM661 420h2v2h-2zM347 321h3v3h-3zM1016 693h2v2h-2zM310 235h3v3h-3zM358 1040h2v2h-2zM790 480h2v2h-2zM210 187h3v3h-3zM212 926h2v2h-2zM704 194h2v2h-2zM905 467h3v3h-3zM408 735h2v2h-2zM407 434h2v2h-2zM711 558h2v2h-2zM612 53h3v3h-3zM604 19h2v2h-2zM698 977h3v3h-3zM290 947h3v3h-3zM342 34h2v2h-2zM744 115h2v2h-2zM739 90h2v2h-2zM272 295h2v2h-2zM560 172h2v2h-2zM414 419h2v2h-2zM823 640h3v3h-3zM616 1030h3v3h-3zM385 899h2v2h-2zM266 243h2v2h-2zM726 653h2v2h-2zM1011 406h2v2h-2zM427 702h3v3h-3zM395 475h2v2h-2zM416 128h2v2h-2zM452 883h2v2h-2zM477 185h2v2h-2zM908 556h2v2h-2zM1035 689h2v2h-2zM375 525h3v3h-3zM953 351h2v2h-2zM799 441h3v3h-3zM640 1006h3v3h-3zM864 577h2v2h-2zM625 393h2v2h-2zM339 955h2v2h-2zM187 640h2v2h-2zM325 124h2v2h-2zM741 645h2v2h-2zM734 117h2v2h-2zM627 996h2v2h-2zM499 17h2v2h-2zM912 14h3v3h-3zM561 408h3v3h-3zM406 133h3v3h-3zM450 194h3v3h-3zM272 653h2v2h-2zM580 627h2v2h-2zM440 291h2v2h-2zM767 942h2v2h-2zM985 625h2v2h-2zM396 41h2v2h-2zM436 110h2v2h-2zM456 996h2v2h-2zM467 89h2v2h-2zM881 623h3v3h-3zM976 111h2v2h-2zM847 288h2v2h-2zM679 346h3v3h-3zM614 147h3v3h-3zM327 187h2v2h-2zM601 496h2v2h-2zM792 474h2v2h-2zM1038 460h2v2h-2zM163 403h3v3h-3zM388 1028h3v3h-3zM804 398h3v3h-3zM258 276h3v3h-3zM371 151h2v2h-2zM423 917h2v2h-2zM1028 1018h3v3h-3zM615 708h2v2h-2zM916 464h2v2h-2zM599 410h2v2h-2zM482 894h3v3h-3zM341 432h2v2h-2zM337 477h2v2h-2zM164 279h3v3h-3zM277 158h3v3h-3zM1032 127h2v2h-2zM503 279h2v2h-2zM299 273h2v2h-2zM596 281h2v2h-2zM501 435h2v2h-2zM246 35h3v3h-3zM203 623h3v3h-3zM899 920h2v2h-2zM469 229h2v2h-2zM896 952h2v2h-2zM291 183h2v2h-2zM471 328h2v2h-2zM359 92h3v3h-3zM931 464h2v2h-2zM653 942h2v2h-2zM905 230h3v3h-3zM362 442h2v2h-2zM620 81h3v3h-3zM415 45h2v2h-2zM113 540h3v3h-3zM166 424h2v2h-2zM706 278h2v2h-2zM336 342h3v3h-3zM600 303h2v2h-2zM915 1016h2v2h-2zM941 415h2v2h-2zM1014 67h2v2h-2zM791 61h2v2h-2zM734 1022h3v3h-3zM233 678h2v2h-2zM731 209h3v3h-3zM708 251h2v2h-2zM670 35h2v2h-2zM384 929h2v2h-2zM448 981h2v2h-2zM747 571h3v3h-3zM463 276h3v3h-3zM665 994h2v2h-2zM630 122h2v2h-2zM700 1015h3v3h-3zM255 13h3v3h-3zM645 719h2v2h-2zM365 206h2v2h-2zM892 453h2v2h-2zM325 133h3v3h-3zM327 36h2v2h-2zM779 915h2v2h-2zM834 572h3v3h-3zM692 97h2v2h-2zM396 116h2v2h-2zM617 10h3v3h-3zM985 5h2v2h-2zM680 2h2v2h-2zM775 1005h2v2h-2zM701 330h3v3h-3zM455 326h3v3h-3zM976 261h2v2h-2zM467 454h2v2h-2zM103 908h2v2h-2zM226 295h2v2h-2zM445 383h2v2h-2zM929 619h2v2h-2zM881 478h2v2h-2zM250 335h3v3h-3zM747 869h2v2h-2zM1019 1001h2v2h-2zM381 933h2v2h-2zM922 744h2v2h-2zM1032 657h2v2h-2zM512 184h3v3h-3zM653 543h2v2h-2zM1018 147h2v2h-2zM411 689h2v2h-2zM835 401h2v2h-2zM446 807h3v3h-3zM231 218h3v3h-3zM1020 557h2v2h-2zM869 991h2v2h-2zM373 904h2v2h-2zM35 413h2v2h-2zM291 269h3v3h-3zM818 493h2v2h-2zM339 1030h2v2h-2zM386 187h3v3h-3zM429 468h3v3h-3zM426 84h3v3h-3zM483 108h2v2h-2zM653 984h2v2h-2zM492 905h2v2h-2zM632 491h2v2h-2zM500 388h2v2h-2zM515 529h2v2h-2zM517 236h2v2h-2zM326 559h2v2h-2zM242 189h3v3h-3zM61 407h3v3h-3zM259 106h2v2h-2zM306 431h2v2h-2zM336 261h3v3h-3zM663 582h2v2h-2zM964 288h3v3h-3zM211 193h3v3h-3zM920 891h2v2h-2zM671 1034h3v3h-3zM929 455h2v2h-2zM474 147h2v2h-2zM666 434h2v2h-2zM354 537h2v2h-2zM118 493h2v2h-2zM569 556h3v3h-3zM271 293h2v2h-2zM395 1037h2v2h-2zM189 437h2v2h-2zM1011 986h3v3h-3zM482 242h2v2h-2zM334 566h2v2h-2zM581 617h2v2h-2zM424 236h3v3h-3zM299 342h2v2h-2zM695 884h2v2h-2zM830 995h2v2h-2zM307 411h3v3h-3zM272 591h2v2h-2zM1022 17h3v3h-3zM1009 206h2v2h-2zM237 1031h2v2h-2zM243 107h2v2h-2zM658 403h3v3h-3zM89 289h2v2h-2zM596 417h2v2h-2zM272 595h2v2h-2zM358 39h2v2h-2zM833 627h3v3h-3zM664 980h3v3h-3zM91 475h2v2h-2zM513 241h2v2h-2zM748 634h2v2h-2zM279 984h2v2h-2zM1004 876h3v3h-3zM700 1022h2v2h-2zM498 717h2v2h-2zM507 571h3v3h-3zM1014 625h3v3h-3zM1032 399h2v2h-2zM948 141h2v2h-2zM543 334h2v2h-2zM163 263h2v2h-2zM489 208h3v3h-3zM452 364h2v2h-2zM716 69h2v2h-2zM987 471h3v3h-3zM573 596h2v2h-2zM573 535h3v3h-3zM1001 219h2v2h-2zM227 147h2v2h-2zM899 450h2v2h-2zM506 477h2v2h-2zM662 377h2v2h-2zM318 1001h2v2h-2zM656 576h2v2h-2zM556 97h2v2h-2zM698 99h2v2h-2zM399 1028h2v2h-2zM714 519h3v3h-3zM437 152h2v2h-2zM414 941h3v3h-3zM942 97h2v2h-2zM732 571h2v2h-2zM836 1017h2v2h-2zM995 284h2v2h-2zM838 279h2v2h-2zM88 216h2v2h-2zM1017 722h2v2h-2zM370 584h2v2h-2zM707 1027h2v2h-2zM703 909h2v2h-2zM500 240h2v2h-2zM554 854h2v2h-2zM623 653h2v2h-2zM490 884h2v2h-2zM264 989h2v2h-2zM672 994h2v2h-2zM595 56h3v3h-3zM955 653h3v3h-3zM448 608h3v3h-3zM503 552h2v2h-2zM528 468h2v2h-2zM202 195h2v2h-2zM379 10h2v2h-2zM630 540h2v2h-2zM1037 1027h2v2h-2zM499 967h2v2h-2zM808 551h3v3h-3zM659 23h2v2h-2zM117 149h3v3h-3zM303 328h2v2h-2zM712 895h3v3h-3zM676 514h2v2h-2zM478 806h2v2h-2zM962 393h2v2h-2zM476 51h2v2h-2zM161 432h2v2h-2zM598 517h2v2h-2zM262 481h2v2h-2zM1000 273h2v2h-2zM485 835h2v2h-2zM857 1012h2v2h-2zM715 77h2v2h-2zM434 968h2v2h-2zM772 903h2v2h-2zM480 86h3v3h-3zM212 965h2v2h-2zM473 33h2v2h-2zM374 282h3v3h-3zM813 519h2v2h-2zM1027 355h2v2h-2zM234 140h2v2h-2zM407 118h3v3h-3zM428 446h2v2h-2zM298 388h2v2h-2zM408 933h3v3h-3zM961 595h3v3h-3zM188 990h2v2h-2zM699 254h2v2h-2zM521 257h3v3h-3zM315 558h2v2h-2zM872 1010h3v3h-3zM423 336h2v2h-2zM743 34h2v2h-2zM986 468h2v2h-2zM540 582h3v3h-3zM343 423h2v2h-2zM573 971h2v2h-2zM347 309h3v3h-3zM661 970h2v2h-2zM746 343h3v3h-3zM280 985h3v3h-3zM930 85h3v3h-3zM624 243h2v2h-2zM612 309h2v2h-2zM95 94h2v2h-2zM681 130h3v3h-3zM769 573h2v2h-2zM538 902h2v2h-2zM365 457h2v2h-2zM300 214h2v2h-2zM435 372h2v2h-2zM343 717h3v3h-3zM495 17h3v3h-3zM408 885h2v2h-2zM346 933h2v2h-2zM1007 741h2v2h-2zM325 881h3v3h-3zM1001 355h2v2h-2zM524 712h3v3h-3zM573 2h2v2h-2zM121 584h3v3h-3zM517 244h3v3h-3zM385 261h2v2h-2zM817 574h2v2h-2zM631 141h2v2h-2zM703 218h2v2h-2zM541 244h3v3h-3zM905 968h3v3h-3zM1028 622h2v2h-2zM377 920h2v2h-2zM609 317h2v2h-2zM702 624h2v2h-2zM672 601h3v3h-3zM772 1032h3v3h-3zM65 723h2v2h-2zM440 9h2v2h-2zM473 69h2v2h-2zM167 185h2v2h-2zM510 360h2v2h-2zM1014 988h2v2h-2zM965 226h2v2h-2zM731 264h3v3h-3zM843 462h3v3h-3zM472 923h2v2h-2zM903 707h2v2h-2zM987 7h2v2h-2zM177 372h2v2h-2zM700 1013h2v2h-2zM831 976h2v2h-2zM791 22h3v3h-3zM257 213h2v2h-2zM1016 482h2v2h-2zM757 941h3v3h-3zM525 272h2v2h-2zM562 916h3v3h-3zM625 508h3v3h-3zM364 230h3v3h-3zM344 298h2v2h-2zM831 669h2v2h-2zM900 1022h2v2h-2zM174 447h2v2h-2zM689 587h2v2h-2zM367 217h2v2h-2zM737 613h3v3h-3zM740 56h2v2h-2zM461 442h3v3h-3zM284 281h2v2h-2zM468 31h3v3h-3zM265 69h3v3h-3zM758 965h3v3h-3zM293 958h2v2h-2zM565 17h2v2h-2zM657 473h2v2h-2zM101 281h3v3h-3zM480 1007h3v3h-3zM484 972h3v3h-3zM969 154h3v3h-3zM997 599h2v2h-2zM924 521h3v3h-3zM499 27h3v3h-3zM508 84h2v2h-2zM974 896h2v2h-2zM1021 993h2v2h-2zM495 452h2v2h-2zM552 410h2v2h-2zM964 974h2v2h-2zM332 1000h2v2h-2zM977 1036h2v2h-2zM885 900h2v2h-2zM516 1024h2v2h-2zM328 947h2v2h-2zM964 658h2v2h-2zM1039 1010h2v2h-2zM707 496h3v3h-3zM56 425h3v3h-3zM630 605h3v3h-3zM538 378h2v2h-2zM23 697h3v3h-3zM1027 104h3v3h-3zM863 330h2v2h-2zM548 969h2v2h-2zM919 711h2v2h-2zM980 542h2v2h-2zM226 241h2v2h-2zM791 994h3v3h-3zM902 252h3v3h-3zM785 508h2v2h-2zM519 530h2v2h-2zM337 128h3v3h-3zM457 324h3v3h-3zM542 202h3v3h-3zM665 421h2v2h-2zM415 957h2v2h-2zM757 624h2v2h-2zM906 131h2v2h-2zM755 598h2v2h-2zM316 918h2v2h-2zM828 668h2v2h-2zM237 10h3v3h-3zM581 493h2v2h-2zM538 968h3v3h-3zM267 820h2v2h-2zM865 557h3v3h-3zM419 226h3v3h-3zM376 972h3v3h-3zM458 412h2v2h-2zM186 702h3v3h-3zM490 294h3v3h-3zM1015 600h2v2h-2zM240 90h2v2h-2zM229 141h3v3h-3zM982 670h2v2h-2zM209 234h2v2h-2zM969 297h2v2h-2zM446 143h3v3h-3zM416 925h2v2h-2zM783 383h2v2h-2zM774 659h3v3h-3zM633 493h2v2h-2zM880 588h2v2h-2zM849 652h2v2h-2zM292 378h2v2h-2zM335 479h2v2h-2zM739 637h2v2h-2zM645 280h2v2h-2zM419 2h2v2h-2zM378 487h2v2h-2zM383 216h2v2h-2zM96 271h3v3h-3zM928 304h3v3h-3zM418 9h2v2h-2zM229 762h3v3h-3zM771 987h2v2h-2zM573 701h2v2h-2zM544 123h2v2h-2zM269 435h2v2h-2zM382 134h3v3h-3zM613 898h3v3h-3zM602 978h3v3h-3zM777 1028h2v2h-2zM29 745h3v3h-3zM345 667h2v2h-2zM975 260h2v2h-2zM355 540h3v3h-3zM93 734h2v2h-2zM478 979h3v3h-3zM715 446h2v2h-2zM686 342h3v3h-3zM468 210h2v2h-2zM321 273h2v2h-2zM420 770h3v3h-3zM458 962h2v2h-2zM800 489h2v2h-2zM387 902h2v2h-2zM85 508h2v2h-2zM1019 176h2v2h-2zM878 595h2v2h-2zM865 382h2v2h-2zM926 479h2v2h-2zM738 4h2v2h-2zM814 201h3v3h-3zM669 383h2v2h-2zM338 334h3v3h-3zM474 521h3v3h-3zM822 83h2v2h-2zM523 411h3v3h-3zM858 352h2v2h-2zM406 84h2v2h-2zM248 571h3v3h-3zM444 614h2v2h-2zM659 571h3v3h-3zM508 921h2v2h-2zM188 446h2v2h-2zM333 909h2v2h-2zM963 401h2v2h-2zM155 92h2v2h-2zM357 760h3v3h-3zM560 914h3v3h-3zM651 998h3v3h-3zM411 985h2v2h-2zM972 617h2v2h-2zM256 272h2v2h-2zM501 452h2v2h-2zM717 1029h2v2h-2zM663 646h2v2h-2zM531 391h2v2h-2zM270 160h2v2h-2zM521 1027h2v2h-2zM1042 609h3v3h-3zM548 1030h3v3h-3zM980 587h3v3h-3zM239 129h2v2h-2zM682 1038h2v2h-2zM527 744h2v2h-2zM457 484h2v2h-2zM917 970h2v2h-2zM393 425h2v2h-2zM750 786h2v2h-2zM693 383h2v2h-2zM396 95h2v2h-2zM302 518h3v3h-3zM764 105h3v3h-3zM479 62h3v3h-3z"/><path fill="rgb(90,90,90)" d="M563 595h2v2h-2zM158 509h2v2h-2zM501 325h2v2h-2zM515 341h2v2h-2zM1023 872h3v3h-3zM917 449h2v2h-2zM611 411h2v2h-2zM670 89h2v2h-2zM890 292h2v2h-2zM818 446h2v2h-2zM952 980h2v2h-2zM703 438h2v2h-2zM68 861h2v2h-2zM138 517h2v2h-2zM696 435h3v3h-3zM997 955h2v2h-2zM666 1025h2v2h-2zM822 545h2v2h-2zM854 929h2v2h-2zM268 241h3v3h-3zM248 200h3v3h-3zM1016 759h2v2h-2zM826 385h2v2h-2zM674 21h2v2h-2zM891 760h3v3h-3zM447 925h2v2h-2zM120 381h2v2h-2zM407 433h2v2h-2zM587 1027h2v2h-2zM195 338h2v2h-2zM954 602h2v2h-2zM766 114h3v3h-3zM961 1037h3v3h-3zM937 612h2v2h-2zM721 11h3v3h-3zM976 184h3v3h-3zM175 362h2v2h-2zM503 735h2v2h-2zM309 194h2v2h-2zM439 353h2v2h-2zM872 677h2v2h-2zM1038 157h2v2h-2zM969 611h2v2h-2zM498 33h3v3h-3zM960 169h2v2h-2zM112 764h2v2h-2zM896 32h2v2h-2zM329 1012h3v3h-3zM252 869h2v2h-2zM741 503h3v3h-3zM768 171h3v3h-3zM569 98h2v2h-2zM602 368h3v3h-3zM424 92h3v3h-3zM783 663h2v2h-2zM805 517h2v2h-2zM836 615h3v3h-3zM312 1001h2v2h-2zM585 914h3v3h-3zM395 988h2v2h-2zM538 914h3v3h-3zM647 967h2v2h-2zM969 173h3v3h-3zM908 554h2v2h-2zM421 598h2v2h-2zM442 66h2v2h-2zM669 600h3v3h-3zM419 981h2v2h-2zM825 560h3v3h-3zM425 952h2v2h-2zM720 218h3v3h-3zM536 26h2v2h-2zM505 69h2v2h-2zM269 473h2v2h-2zM565 418h2v2h-2zM814 411h2v2h-2zM269 441h2v2h-2zM828 323h2v2h-2zM403 504h3v3h-3zM231 332h2v2h-2zM851 671h2v2h-2zM883 916h3v3h-3zM938 171h3v3h-3zM393 79h2v2h-2zM399 720h3v3h-3zM432 306h2v2h-2zM639 1012h2v2h-2zM930 536h2v2h-2zM649 681h2v2h-2zM747 532h2v2h-2zM147 504h2v2h-2zM911 1038h3v3h-3zM524 525h3v3h-3zM193 554h3v3h-3zM465 391h3v3h-3zM565 567h2v2h-2zM440 348h2v2h-2zM419 169h3v3h-3zM465 423h2v2h-2zM23 750h2v2h-2zM763 237h3v3h-3zM452 289h3v3h-3zM164 320h2v2h-2zM918 1019h2v2h-2zM71 976h2v2h-2zM610 312h3v3h-3zM969 416h2v2h-2zM407 443h3v3h-3zM277 416h3v3h-3zM528 40h3v3h-3zM450 526h3v3h-3zM366 488h3v3h-3zM661 605h2v2h-2zM62 823h2v2h-2zM1019 135h3v3h-3zM515 412h3v3h-3zM930 392h3v3h-3zM323 211h3v3h-3zM555 44h2v2h-2zM492 1h3v3h-3zM994 143h2v2h-2zM519 693h2v2h-2zM443 1024h2v2h-2zM155 550h2v2h-2zM443 1015h2v2h-2zM285 130h2v2h-2zM308 201h3v3h-3zM472 957h2v2h-2zM790 492h2v2h-2zM580 342h3v3h-3zM359 339h3v3h-3zM371 874h3v3h-3zM592 172h3v3h-3zM799 351h2v2h-2zM507 900h3v3h-3zM502 948h3v3h-3zM740 510h2v2h-2zM1005 543h2v2h-2zM343 142h2v2h-2zM280 1001h2v2h-2zM975 513h2v2h-2zM1041 990h2v2h-2zM457 119h3v3h-3zM405 891h2v2h-2zM224 559h2v2h-2zM153 192h2v2h-2zM869 483h3v3h-3zM679 43h2v2h-2zM195 350h2v2h-2zM498 834h3v3h-3zM529 659h2v2h-2zM280 577h3v3h-3zM1036 999h3v3h-3zM360 11h2v2h-2zM323 439h3v3h-3zM562 29h2v2h-2zM241 497h3v3h-3zM680 428h2v2h-2zM557 77h2v2h-2zM547 32h2v2h-2zM467 892h3v3h-3zM856 708h3v3h-3zM323 884h3v3h-3zM887 206h2v2h-2zM350 64h3v3h-3zM549 307h3v3h-3zM787 407h2v2h-2zM505 282h2v2h-2zM139 450h3v3h-3zM1008 1019h2v2h-2zM515 496h3v3h-3zM499 609h3v3h-3zM933 547h2v2h-2zM684 1019h3v3h-3zM293 50h2v2h-2zM754 139h2v2h-2zM120 507h3v3h-3zM909 969h2v2h-2zM627 120h3v3h-3zM621 656h2v2h-2zM328 397h2v2h-2zM779 465h3v3h-3zM683 529h3v3h-3zM979 11h2v2h-2zM851 453h2v2h-2zM381 903h3v3h-3zM591 355h2v2h-2zM334 1033h2v2h-2zM852 447h2v2h-2zM779 909h3v3h-3zM457 198h3v3h-3zM426 489h2v2h-2zM330 193h2v2h-2zM578 591h2v2h-2zM201 235h3v3h-3zM487 131h3v3h-3zM573 221h2v2h-2zM805 243h3v3h-3zM551 764h2v2h-2zM347 1011h2v2h-2zM587 12h3v3h-3zM679 632h2v2h-2zM886 317h2v2h-2zM227 95h3v3h-3zM252 358h2v2h-2zM614 12h3v3h-3zM715 526h3v3h-3zM354 916h2v2h-2zM701 343h2v2h-2zM732 548h3v3h-3zM601 1007h2v2h-2zM272 539h2v2h-2zM827 787h2v2h-2zM620 307h2v2h-2zM557 942h2v2h-2zM516 287h3v3h-3zM986 987h2v2h-2zM757 591h2v2h-2zM171 263h3v3h-3zM893 390h2v2h-2zM582 462h3v3h-3zM97 922h2v2h-2zM466 221h2v2h-2zM285 187h2v2h-2zM919 1028h3v3h-3zM334 93h2v2h-2zM456 997h3v3h-3zM95 938h3v3h-3zM294 710h3v3h-3zM863 539h3v3h-3zM628 400h2v2h-2zM655 117h2v2h-2zM534 911h2v2h-2zM298 151h2v2h-2zM444 883h3v3h-3zM606 1035h2v2h-2zM700 929h2v2h-2zM343 263h2v2h-2zM169 279h3v3h-3zM635 258h2v2h-2zM1027 759h2v2h-2zM652 622h2v2h-2zM494 1025h2v2h-2zM800 616h2v2h-2zM831 60h3v3h-3zM885 467h2v2h-2zM908 495h3v3h-3zM672 503h2v2h-2zM1036 440h2v2h-2zM710 342h3v3h-3zM480 595h2v2h-2zM662 221h3v3h-3zM555 68h3v3h-3zM359 1033h3v3h-3zM161 1034h2v2h-2zM741 297h2v2h-2zM308 152h3v3h-3zM998 309h3v3h-3zM988 422h2v2h-2zM270 495h2v2h-2zM960 246h2v2h-2zM811 414h2v2h-2zM759 8h2v2h-2zM1035 441h2v2h-2zM793 532h2v2h-2zM486 130h3v3h-3zM426 7h2v2h-2zM994 343h2v2h-2zM964 437h2v2h-2zM819 757h3v3h-3zM141 412h2v2h-2zM963 357h2v2h-2zM834 580h2v2h-2zM661 778h3v3h-3zM400 1006h2v2h-2zM475 109h2v2h-2zM184 320h3v3h-3zM584 372h3v3h-3zM500 366h3v3h-3zM258 966h2v2h-2zM382 553h2v2h-2zM794 973h3v3h-3zM893 713h3v3h-3zM276 640h2v2h-2zM278 193h2v2h-2zM946 432h2v2h-2zM539 503h3v3h-3zM284 360h2v2h-2zM573 123h2v2h-2zM333 382h3v3h-3zM526 437h2v2h-2zM947 629h2v2h-2zM166 361h2v2h-2zM518 972h3v3h-3zM1041 320h3v3h-3zM429 635h3v3h-3zM197 289h2v2h-2zM754 446h2v2h-2zM482 303h3v3h-3zM452 916h2v2h-2zM860 581h3v3h-3zM695 203h2v2h-2zM347 337h2v2h-2zM646 485h2v2h-2zM596 297h2v2h-2zM317 243h2v2h-2zM608 605h2v2h-2zM579 911h2v2h-2zM402 238h3v3h-3zM607 297h3v3h-3zM948 535h2v2h-2zM220 298h3v3h-3zM783 124h3v3h-3zM668 281h2v2h-2zM838 702h2v2h-2zM578 1025h2v2h-2zM507 187h3v3h-3zM349 1038h2v2h-2zM434 974h2v2h-2zM365 474h2v2h-2zM460 576h2v2h-2zM178 203h3v3h-3zM330 247h3v3h-3zM283 95h3v3h-3zM423 467h2v2h-2zM965 149h2v2h-2zM1001 513h3v3h-3zM48 300h2v2h-2zM692 968h2v2h-2zM839 946h2v2h-2zM465 437h2v2h-2zM1020 150h3v3h-3zM245 471h2v2h-2zM877 933h2v2h-2zM581 49h2v2h-2zM963 314h3v3h-3zM614 1041h3v3h-3zM810 1015h2v2h-2zM987 1006h3v3h-3zM899 557h3v3h-3zM586 118h3v3h-3zM851 339h2v2h-2zM401 57h2v2h-2zM425 88h2v2h-2zM324 236h2v2h-2zM349 142h2v2h-2zM715 691h2v2h-2zM743 95h2v2h-2zM718 675h2v2h-2zM710 225h2v2h-2zM721 617h2v2h-2zM312 651h2v2h-2zM290 761h2v2h-2zM376 988h2v2h-2zM761 472h2v2h-2zM475 985h2v2h-2zM909 983h3v3h-3zM589 409h3v3h-3zM468 332h2v2h-2zM610 391h2v2h-2zM706 891h3v3h-3zM486 165h2v2h-2zM363 337h2v2h-2zM165 781h2v2h-2zM361 542h3v3h-3zM357 232h2v2h-2zM964 571h2v2h-2zM862 499h2v2h-2zM199 478h2v2h-2zM573 491h2v2h-2zM751 618h2v2h-2zM290 109h3v3h-3zM871 537h2v2h-2zM938 503h2v2h-2zM461 144h3v3h-3zM576 559h2v2h-2zM980 467h3v3h-3zM939 957h2v2h-2zM498 636h2v2h-2zM774 532h2v2h-2zM549 462h2v2h-2zM753 193h2v2h-2zM627 949h2v2h-2zM219 361h2v2h-2zM402 725h3v3h-3zM773 468h3v3h-3zM708 519h3v3h-3zM642 1029h2v2h-2zM960 713h2v2h-2zM320 92h2v2h-2zM265 259h3v3h-3zM122 573h3v3h-3zM1034 532h2v2h-2zM921 1036h2v2h-2zM479 937h3v3h-3zM1025 459h2v2h-2zM487 535h2v2h-2zM436 950h3v3h-3zM501 312h2v2h-2zM916 467h3v3h-3zM348 366h2v2h-2zM981 1021h2v2h-2zM696 883h2v2h-2zM455 38h2v2h-2zM599 533h3v3h-3zM437 1028h2v2h-2zM683 591h2v2h-2zM276 182h3v3h-3zM290 443h2v2h-2zM290 314h2v2h-2zM688 647h2v2h-2zM795 124h2v2h-2zM610 129h2v2h-2zM1032 599h2v2h-2zM1036 450h2v2h-2zM951 102h2v2h-2zM528 599h2v2h-2zM292 269h2v2h-2zM976 286h2v2h-2zM67 842h2v2h-2zM893 515h3v3h-3zM996 364h3v3h-3zM561 346h3v3h-3zM1023 398h2v2h-2zM402 1006h2v2h-2zM26 536h2v2h-2zM1007 690h3v3h-3zM1016 695h3v3h-3zM191 480h2v2h-2zM647 331h2v2h-2zM878 1020h3v3h-3zM448 305h2v2h-2zM340 543h2v2h-2zM734 941h2v2h-2zM954 498h3v3h-3zM328 229h3v3h-3zM473 1041h2v2h-2zM514 1015h2v2h-2zM874 302h2v2h-2zM387 240h2v2h-2zM488 86h2v2h-2zM852 608h3v3h-3zM779 965h2v2h-2zM517 233h3v3h-3zM600 717h2v2h-2zM432 300h3v3h-3zM765 707h3v3h-3zM723 341h2v2h-2zM1035 609h2v2h-2zM705 414h2v2h-2zM334 211h3v3h-3zM265 314h2v2h-2zM289 887h3v3h-3zM673 301h2v2h-2zM849 960h2v2h-2zM852 200h3v3h-3zM670 139h3v3h-3zM108 716h2v2h-2zM312 442h2v2h-2zM993 616h3v3h-3zM361 525h2v2h-2zM628 568h2v2h-2zM743 625h2v2h-2zM626 708h2v2h-2zM429 240h2v2h-2zM488 103h2v2h-2zM419 604h3v3h-3zM817 635h2v2h-2zM207 98h2v2h-2zM149 860h3v3h-3zM624 1013h2v2h-2zM504 35h2v2h-2zM542 73h3v3h-3zM910 416h2v2h-2zM857 85h2v2h-2zM561 1h2v2h-2zM741 155h3v3h-3zM384 466h2v2h-2zM32 550h2v2h-2zM857 325h2v2h-2zM715 549h3v3h-3zM811 884h3v3h-3zM369 113h2v2h-2zM754 592h3v3h-3zM833 950h2v2h-2zM968 363h2v2h-2zM1039 563h2v2h-2zM959 1036h2v2h-2zM410 974h3v3h-3zM617 641h3v3h-3zM473 596h2v2h-2zM263 463h2v2h-2zM340 457h2v2h-2zM576 1013h2v2h-2zM617 1015h3v3h-3zM361 528h2v2h-2zM313 171h2v2h-2zM447 65h2v2h-2zM660 890h3v3h-3zM584 292h3v3h-3zM291 939h2v2h-2zM562 248h2v2h-2zM958 617h2v2h-2zM425 239h2v2h-2zM353 9h2v2h-2zM673 5h2v2h-2zM864 491h3v3h-3zM448 929h2v2h-2zM617 514h2v2h-2zM65 716h2v2h-2zM313 272h3v3h-3zM936 997h2v2h-2zM846 639h3v3h-3zM27 469h2v2h-2zM186 468h3v3h-3zM954 92h3v3h-3zM937 706h3v3h-3zM471 210h3v3h-3zM546 479h3v3h-3zM386 184h2v2h-2zM1004 502h2v2h-2zM1039 971h2v2h-2zM550 639h3v3h-3zM696 67h2v2h-2zM792 521h2v2h-2zM610 912h2v2h-2zM557 187h2v2h-2zM511 1020h3v3h-3zM72 525h2v2h-2zM565 710h2v2h-2zM175 613h3v3h-3zM436 195h2v2h-2zM952 479h2v2h-2zM507 1h2v2h-2zM630 742h3v3h-3zM916 444h2v2h-2zM1020 652h3v3h-3zM814 494h2v2h-2zM537 1001h3v3h-3zM918 293h2v2h-2zM599 194h3v3h-3zM667 75h2v2h-2zM1006 372h2v2h-2zM462 92h2v2h-2zM206 293h3v3h-3zM182 390h2v2h-2zM444 96h2v2h-2zM574 391h3v3h-3zM815 624h2v2h-2zM775 491h2v2h-2zM457 164h3v3h-3zM383 152h3v3h-3zM959 1007h2v2h-2zM473 525h3v3h-3zM85 360h3v3h-3zM214 801h3v3h-3zM488 237h2v2h-2zM515 368h2v2h-2zM932 515h3v3h-3zM507 269h2v2h-2zM906 344h2v2h-2zM374 591h2v2h-2zM742 204h2v2h-2zM503 360h3v3h-3zM913 904h3v3h-3zM676 309h2v2h-2zM833 1029h2v2h-2zM400 323h2v2h-2zM473 52h3v3h-3zM571 1009h3v3h-3zM513 510h3v3h-3zM706 660h2v2h-2zM622 289h2v2h-2zM474 614h3v3h-3zM541 301h3v3h-3zM795 487h3v3h-3zM249 175h2v2h-2zM457 73h3v3h-3zM353 91h2v2h-2zM397 403h2v2h-2zM1028 244h2v2h-2zM386 595h2v2h-2zM422 18h2v2h-2zM730 445h2v2h-2zM910 1023h2v2h-2zM408 1018h2v2h-2zM1035 587h2v2h-2zM596 102h2v2h-2zM853 948h2v2h-2zM940 643h2v2h-2zM316 1034h3v3h-3zM435 430h2v2h-2zM758 986h3v3h-3zM845 53h2v2h-2zM321 423h2v2h-2zM303 167h3v3h-3zM947 383h2v2h-2zM875 439h3v3h-3zM298 532h3v3h-3zM335 109h3v3h-3zM826 1018h2v2h-2zM399 212h3v3h-3zM459 1034h3v3h-3zM445 62h2v2h-2zM197 944h2v2h-2zM975 500h2v2h-2zM672 567h2v2h-2zM536 331h2v2h-2zM710 532h2v2h-2zM1038 619h2v2h-2zM720 1022h2v2h-2zM805 936h2v2h-2zM421 547h2v2h-2zM1035 531h2v2h-2zM863 689h2v2h-2zM472 1042h2v2h-2zM979 996h2v2h-2zM397 916h3v3h-3zM939 413h3v3h-3zM292 127h2v2h-2zM690 542h2v2h-2zM890 943h2v2h-2zM674 91h2v2h-2zM670 925h2v2h-2zM862 519h2v2h-2zM322 88h2v2h-2zM336 1029h2v2h-2zM892 706h2v2h-2zM283 297h2v2h-2zM602 1038h2v2h-2zM917 611h2v2h-2zM684 635h2v2h-2zM749 551h2v2h-2zM438 54h2v2h-2zM543 435h2v2h-2zM532 892h3v3h-3zM875 246h2v2h-2zM632 153h2v2h-2zM605 1037h2v2h-2zM516 684h2v2h-2zM756 885h3v3h-3zM188 255h2v2h-2zM556 962h3v3h-3zM518 228h3v3h-3zM978 144h2v2h-2zM405 272h3v3h-3zM664 1012h3v3h-3zM460 235h2v2h-2zM758 278h2v2h-2zM455 186h2v2h-2zM1016 173h2v2h-2zM788 962h2v2h-2zM158 90h3v3h-3zM344 886h2v2h-2zM345 1021h2v2h-2zM617 126h2v2h-2zM777 583h2v2h-2zM332 325h2v2h-2zM833 454h2v2h-2zM570 321h2v2h-2zM915 574h2v2h-2zM963 51h3v3h-3zM887 7h3v3h-3zM540 114h3v3h-3zM1011 502h3v3h-3zM123 453h2v2h-2zM906 593h2v2h-2zM931 424h3v3h-3zM507 1034h2v2h-2zM361 951h2v2h-2zM640 178h3v3h-3zM655 40h2v2h-2zM1040 500h2v2h-2zM817 296h2v2h-2zM807 449h2v2h-2zM369 964h2v2h-2zM454 391h2v2h-2zM1019 280h2v2h-2zM433 520h2v2h-2zM251 438h3v3h-3zM464 219h3v3h-3zM976 573h3v3h-3zM979 546h2v2h-2zM393 392h3v3h-3zM585 580h2v2h-2zM613 558h3v3h-3zM414 882h3v3h-3zM430 498h3v3h-3zM234 433h2v2h-2zM510 71h2v2h-2zM522 510h2v2h-2zM595 336h3v3h-3zM403 540h3v3h-3zM444 329h3v3h-3zM336 957h2v2h-2zM241 935h2v2h-2zM905 663h2v2h-2zM382 984h3v3h-3zM822 801h2v2h-2zM484 440h3v3h-3zM772 460h2v2h-2zM562 520h3v3h-3zM683 428h2v2h-2zM205 1020h2v2h-2zM547 67h3v3h-3zM956 727h3v3h-3zM244 217h2v2h-2zM563 328h2v2h-2zM867 576h3v3h-3zM1026 535h2v2h-2zM427 959h2v2h-2zM516 970h2v2h-2zM328 8h2v2h-2zM623 964h2v2h-2zM179 1011h2v2h-2zM902 971h3v3h-3zM48 919h3v3h-3zM780 510h2v2h-2zM365 99h2v2h-2zM814 627h2v2h-2zM566 613h2v2h-2zM217 333h2v2h-2zM553 767h3v3h-3zM251 236h2v2h-2zM355 400h3v3h-3zM466 45h3v3h-3zM449 579h2v2h-2zM621 447h2v2h-2zM458 370h3v3h-3zM883 751h2v2h-2zM454 446h3v3h-3zM490 152h2v2h-2zM634 118h3v3h-3zM525 176h3v3h-3zM571 945h2v2h-2zM604 527h2v2h-2zM126 209h2v2h-2zM831 556h2v2h-2zM212 475h2v2h-2zM98 166h2v2h-2zM562 545h2v2h-2zM955 740h2v2h-2zM424 919h2v2h-2zM574 995h3v3h-3zM201 403h2v2h-2zM177 396h2v2h-2zM239 360h3v3h-3zM859 444h2v2h-2zM450 201h2v2h-2zM375 320h2v2h-2zM283 290h2v2h-2zM1033 619h2v2h-2zM553 556h3v3h-3zM528 186h2v2h-2zM687 895h2v2h-2zM147 398h3v3h-3zM514 944h2v2h-2zM389 43h3v3h-3zM505 664h2v2h-2zM27 732h2v2h-2zM778 290h3v3h-3zM661 1040h2v2h-2zM708 950h3v3h-3zM895 752h2v2h-2zM602 998h2v2h-2zM131 198h2v2h-2zM573 381h3v3h-3zM1025 981h2v2h-2zM904 522h3v3h-3zM353 322h3v3h-3zM421 441h2v2h-2zM961 719h2v2h-2zM281 962h3v3h-3zM625 15h2v2h-2zM787 1006h3v3h-3zM901 125h3v3h-3zM535 824h3v3h-3zM207 997h3v3h-3zM618 885h2v2h-2zM546 241h2v2h-2zM326 970h3v3h-3zM724 314h3v3h-3zM377 570h2v2h-2zM760 423h2v2h-2zM462 381h2v2h-2zM333 168h2v2h-2zM951 253h3v3h-3zM917 373h3v3h-3zM910 560h2v2h-2zM276 975h3v3h-3zM447 192h2v2h-2zM627 528h2v2h-2zM231 292h3v3h-3zM314 815h2v2h-2zM833 245h3v3h-3zM945 933h2v2h-2zM665 418h2v2h-2zM590 260h2v2h-2zM1035 134h2v2h-2zM575 965h2v2h-2zM320 162h2v2h-2zM668 419h2v2h-2zM611 911h2v2h-2zM437 296h2v2h-2zM461 1018h2v2h-2zM549 670h3v3h-3zM392 370h2v2h-2zM161 1009h2v2h-2zM423 290h2v2h-2zM250 1009h2v2h-2zM691 52h2v2h-2zM996 1027h2v2h-2zM738 451h3v3h-3zM231 307h3v3h-3zM586 771h3v3h-3zM643 719h2v2h-2zM1031 641h2v2h-2zM166 294h2v2h-2zM483 1005h2v2h-2zM493 4h2v2h-2zM989 223h2v2h-2zM1004 284h2v2h-2zM315 2h3v3h-3zM344 408h3v3h-3zM302 270h2v2h-2zM299 585h2v2h-2zM765 692h2v2h-2zM598 130h3v3h-3zM492 197h2v2h-2zM606 69h2v2h-2zM798 640h3v3h-3zM674 992h3v3h-3zM552 457h3v3h-3zM748 566h2v2h-2zM433 229h2v2h-2zM399 1027h3v3h-3zM707 256h2v2h-2zM325 580h2v2h-2zM956 162h3v3h-3zM408 1020h2v2h-2zM541 484h2v2h-2zM607 517h2v2h-2zM812 581h2v2h-2zM504 125h2v2h-2zM936 1012h2v2h-2zM237 380h2v2h-2zM395 1016h2v2h-2zM569 1015h2v2h-2zM1011 336h3v3h-3zM605 370h2v2h-2zM578 947h2v2h-2zM323 1017h2v2h-2zM568 42h3v3h-3zM1008 195h3v3h-3zM721 633h3v3h-3zM857 702h2v2h-2zM500 690h2v2h-2zM958 500h2v2h-2zM660 989h2v2h-2zM207 287h2v2h-2zM789 494h2v2h-2zM208 382h2v2h-2zM496 347h3v3h-3zM772 190h3v3h-3zM491 567h3v3h-3zM447 986h2v2h-2zM696 52h2v2h-2zM254 228h2v2h-2zM970 202h2v2h-2zM623 275h2v2h-2zM463 446h2v2h-2zM173 658h3v3h-3zM901 534h2v2h-2zM488 415h2v2h-2zM275 313h2v2h-2zM354 395h2v2h-2zM202 341h2v2h-2zM809 877h3v3h-3zM661 550h2v2h-2zM436 435h2v2h-2zM867 801h3v3h-3zM722 287h2v2h-2zM681 105h2v2h-2zM465 957h2v2h-2zM707 1020h3v3h-3zM914 526h2v2h-2zM824 506h3v3h-3zM759 46h2v2h-2zM526 1003h2v2h-2zM675 704h2v2h-2zM281 323h2v2h-2zM957 470h2v2h-2zM644 957h3v3h-3zM639 281h2v2h-2zM256 614h2v2h-2zM606 274h2v2h-2zM81 279h2v2h-2zM796 477h2v2h-2zM408 1019h3v3h-3zM685 36h2v2h-2zM552 459h3v3h-3zM355 654h2v2h-2zM607 934h2v2h-2zM415 965h2v2h-2zM397 23h3v3h-3zM577 90h2v2h-2zM122 737h2v2h-2zM751 451h2v2h-2zM414 301h3v3h-3zM636 123h3v3h-3zM509 573h2v2h-2zM134 144h3v3h-3zM320 467h2v2h-2zM586 424h3v3h-3zM574 57h2v2h-2zM322 721h3v3h-3zM928 650h3v3h-3zM260 340h3v3h-3zM533 97h2v2h-2zM606 521h2v2h-2zM397 905h3v3h-3zM210 802h2v2h-2zM803 201h3v3h-3zM413 37h2v2h-2zM628 614h2v2h-2zM204 534h2v2h-2zM489 93h2v2h-2zM935 568h3v3h-3zM448 278h3v3h-3zM539 556h2v2h-2zM555 545h3v3h-3zM994 160h2v2h-2zM314 223h3v3h-3zM504 878h2v2h-2zM497 173h2v2h-2zM653 20h3v3h-3zM276 658h3v3h-3zM906 705h2v2h-2zM374 131h2v2h-2zM945 629h3v3h-3zM928 617h3v3h-3zM614 331h2v2h-2zM85 550h2v2h-2zM259 322h2v2h-2zM877 533h2v2h-2zM781 563h2v2h-2zM635 755h3v3h-3zM558 983h3v3h-3zM355 585h2v2h-2zM361 917h3v3h-3zM661 256h2v2h-2zM383 175h2v2h-2zM739 1041h2v2h-2zM886 497h3v3h-3zM881 392h3v3h-3zM372 276h2v2h-2zM658 1032h2v2h-2zM837 879h2v2h-2zM931 298h2v2h-2zM657 496h2v2h-2zM887 349h2v2h-2zM425 712h2v2h-2zM517 164h3v3h-3zM403 433h3v3h-3zM1002 37h3v3h-3zM539 549h3v3h-3zM627 478h2v2h-2zM934 160h2v2h-2zM683 417h2v2h-2zM829 469h2v2h-2zM862 119h3v3h-3zM840 337h3v3h-3zM411 598h2v2h-2zM316 359h2v2h-2zM287 198h2v2h-2zM867 564h2v2h-2zM650 1028h3v3h-3zM774 701h2v2h-2zM232 44h2v2h-2zM670 975h2v2h-2zM114 271h2v2h-2zM616 77h2v2h-2zM728 580h2v2h-2zM483 274h2v2h-2zM300 87h3v3h-3zM710 585h3v3h-3zM962 447h2v2h-2zM1023 719h2v2h-2zM301 383h2v2h-2zM214 253h2v2h-2zM534 64h2v2h-2zM551 305h3v3h-3zM635 410h2v2h-2zM835 973h2v2h-2zM1016 933h2v2h-2zM580 349h2v2h-2zM457 714h2v2h-2zM345 11h3v3h-3zM514 530h3v3h-3zM784 528h2v2h-2zM149 381h3v3h-3zM243 273h2v2h-2zM506 994h2v2h-2zM933 375h3v3h-3zM660 494h3v3h-3zM441 74h3v3h-3zM668 884h2v2h-2zM469 1008h2v2h-2zM514 514h3v3h-3zM572 1015h3v3h-3zM159 245h3v3h-3zM583 31h2v2h-2zM930 486h3v3h-3zM644 293h2v2h-2zM800 314h2v2h-2zM270 934h2v2h-2zM868 771h2v2h-2zM552 921h3v3h-3zM908 266h2v2h-2zM415 400h2v2h-2zM831 1024h2v2h-2zM460 27h2v2h-2zM979 409h3v3h-3zM564 905h2v2h-2zM305 173h2v2h-2zM770 512h3v3h-3zM910 478h2v2h-2zM451 352h2v2h-2zM923 44h2v2h-2zM1004 734h2v2h-2zM376 209h3v3h-3zM618 413h3v3h-3zM117 948h3v3h-3zM416 261h3v3h-3zM264 380h2v2h-2zM414 916h3v3h-3zM546 149h2v2h-2zM970 96h3v3h-3zM723 505h3v3h-3zM886 239h3v3h-3zM910 272h2v2h-2zM791 802h2v2h-2zM416 768h2v2h-2zM209 404h3v3h-3zM532 504h2v2h-2zM340 159h2v2h-2zM443 149h3v3h-3zM930 599h2v2h-2zM364 230h2v2h-2zM420 214h2v2h-2zM412 279h3v3h-3zM540 562h2v2h-2zM946 567h3v3h-3zM592 621h2v2h-2zM604 630h2v2h-2zM700 962h2v2h-2zM685 57h2v2h-2zM267 973h2v2h-2zM1025 346h2v2h-2zM948 524h3v3h-3zM862 314h3v3h-3zM973 279h2v2h-2zM454 222h3v3h-3zM806 44h3v3h-3zM933 495h2v2h-2zM300 487h2v2h-2zM402 644h2v2h-2zM679 542h2v2h-2zM725 243h2v2h-2zM365 294h2v2h-2zM1016 555h2v2h-2zM758 969h2v2h-2zM552 894h2v2h-2zM516 82h2v2h-2zM886 474h3v3h-3zM599 269h2v2h-2zM888 949h2v2h-2zM310 806h2v2h-2zM1006 311h2v2h-2zM291 433h2v2h-2zM416 312h3v3h-3zM522 347h2v2h-2zM439 282h2v2h-2zM657 973h2v2h-2zM283 151h3v3h-3zM1017 289h2v2h-2zM710 309h3v3h-3zM816 598h2v2h-2zM248 325h2v2h-2zM675 766h2v2h-2zM775 569h2v2h-2zM178 839h3v3h-3zM498 421h2v2h-2zM1007 622h2v2h-2zM692 391h2v2h-2zM511 334h3v3h-3zM305 87h3v3h-3zM1005 958h2v2h-2zM614 563h2v2h-2zM468 281h2v2h-2zM593 460h2v2h-2zM798 907h2v2h-2zM275 105h2v2h-2z"/><path fill="rgb(50,50,50)" d="M645 517h2v2h-2zM175 122h2v2h-2zM517 173h2v2h-2zM274 4h3v3h-3zM311 670h3v3h-3zM492 202h2v2h-2zM821 1013h2v2h-2zM473 353h3v3h-3zM606 148h2v2h-2zM434 392h2v2h-2zM356 95h3v3h-3zM673 317h3v3h-3zM964 236h3v3h-3zM438 711h3v3h-3zM291 279h2v2h-2zM458 194h3v3h-3zM921 431h3v3h-3zM1035 656h2v2h-2zM392 384h2v2h-2zM431 314h3v3h-3zM673 307h2v2h-2zM366 969h2v2h-2zM802 627h3v3h-3zM161 163h3v3h-3zM204 157h3v3h-3zM1042 704h3v3h-3zM951 296h3v3h-3zM756 16h3v3h-3zM394 29h3v3h-3zM425 752h2v2h-2zM339 153h2v2h-2zM569 1010h2v2h-2zM406 373h2v2h-2zM861 534h3v3h-3zM746 369h3v3h-3zM181 373h2v2h-2zM420 68h3v3h-3zM168 464h2v2h-2zM371 240h2v2h-2zM993 501h2v2h-2zM150 401h2v2h-2zM978 710h3v3h-3zM423 63h2v2h-2zM600 749h3v3h-3zM149 799h2v2h-2zM460 896h2v2h-2zM769 522h2v2h-2zM530 425h2v2h-2zM379 213h2v2h-2zM679 949h2v2h-2zM543 248h2v2h-2zM263 580h2v2h-2zM615 319h2v2h-2zM851 909h2v2h-2zM286 273h3v3h-3zM958 579h2v2h-2zM555 426h2v2h-2zM448 707h2v2h-2zM927 951h2v2h-2zM825 500h2v2h-2zM691 942h2v2h-2zM915 495h2v2h-2zM645 304h2v2h-2zM43 857h2v2h-2zM898 535h3v3h-3zM434 536h2v2h-2zM178 325h2v2h-2zM838 1002h2v2h-2zM815 689h2v2h-2zM608 65h2v2h-2zM277 463h3v3h-3zM657 102h2v2h-2zM949 1040h2v2h-2zM582 454h3v3h-3zM342 959h3v3h-3zM735 1007h3v3h-3zM207 490h2v2h-2zM347 966h2v2h-2zM641 940h3v3h-3zM698 552h2v2h-2zM693 217h3v3h-3zM969 210h3v3h-3zM442 627h2v2h-2zM731 1008h3v3h-3zM959 419h2v2h-2zM378 951h2v2h-2zM153 238h2v2h-2zM91 810h2v2h-2zM312 68h2v2h-2zM478 997h3v3h-3zM182 196h3v3h-3zM255 161h2v2h-2zM700 4h2v2h-2zM541 503h2v2h-2zM532 613h3v3h-3zM222 471h2v2h-2zM723 284h2v2h-2zM768 508h2v2h-2zM475 958h3v3h-3zM884 627h2v2h-2zM119 168h2v2h-2zM275 363h2v2h-2zM119 233h3v3h-3zM434 35h3v3h-3zM518 194h2v2h-2zM547 150h2v2h-2zM813 611h3v3h-3zM317 940h3v3h-3zM844 239h2v2h-2zM799 319h3v3h-3zM426 468h2v2h-2zM772 962h2v2h-2zM498 1005h3v3h-3zM466 1024h3v3h-3zM616 566h2v2h-2zM324 357h3v3h-3zM539 155h2v2h-2zM539 154h3v3h-3zM412 468h2v2h-2zM978 298h2v2h-2zM761 127h2v2h-2zM421 495h2v2h-2zM599 682h2v2h-2zM426 162h2v2h-2zM122 266h2v2h-2zM510 886h2v2h-2zM1026 116h2v2h-2zM434 984h2v2h-2zM1011 965h3v3h-3zM732 925h3v3h-3zM249 360h3v3h-3zM254 338h2v2h-2zM79 802h2v2h-2zM252 153h3v3h-3zM590 626h2v2h-2zM516 980h3v3h-3zM458 1011h3v3h-3zM884 296h3v3h-3zM297 970h2v2h-2zM697 186h2v2h-2zM1036 62h3v3h-3zM814 962h2v2h-2zM362 862h2v2h-2zM566 374h2v2h-2zM965 823h3v3h-3zM784 7h2v2h-2zM214 487h2v2h-2zM255 892h3v3h-3zM614 1002h3v3h-3zM710 161h2v2h-2zM494 626h2v2h-2zM786 915h2v2h-2zM681 571h2v2h-2zM216 841h3v3h-3zM422 96h2v2h-2zM1028 416h2v2h-2zM721 189h2v2h-2zM1002 1019h2v2h-2zM117 470h3v3h-3zM335 758h3v3h-3zM115 482h2v2h-2zM492 158h2v2h-2zM308 112h2v2h-2zM320 971h2v2h-2zM549 437h2v2h-2zM262 39h2v2h-2zM551 979h2v2h-2zM706 231h2v2h-2zM520 931h3v3h-3zM33 444h2v2h-2zM871 644h2v2h-2zM569 712h2v2h-2zM806 1007h2v2h-2zM600 990h2v2h-2zM809 500h2v2h-2zM513 511h2v2h-2zM706 901h2v2h-2zM438 136h3v3h-3zM705 466h2v2h-2zM452 467h3v3h-3zM191 437h3v3h-3zM524 303h3v3h-3zM440 5h2v2h-2zM615 591h3v3h-3zM974 19h3v3h-3zM416 357h2v2h-2zM735 56h3v3h-3zM365 970h2v2h-2zM243 993h2v2h-2zM1023 521h2v2h-2zM474 573h3v3h-3zM488 236h2v2h-2zM364 522h3v3h-3zM958 322h2v2h-2zM343 270h2v2h-2zM952 1013h2v2h-2zM244 517h3v3h-3zM361 967h2v2h-2zM940 537h3v3h-3zM282 143h3v3h-3zM740 940h2v2h-2zM334 680h3v3h-3zM227 233h2v2h-2zM214 286h2v2h-2zM420 76h2v2h-2zM743 572h3v3h-3zM107 349h3v3h-3zM218 122h2v2h-2zM961 545h2v2h-2zM887 508h2v2h-2zM662 566h3v3h-3zM431 544h2v2h-2zM400 622h2v2h-2zM195 553h2v2h-2zM465 459h3v3h-3zM1007 351h3v3h-3zM506 350h2v2h-2zM418 414h3v3h-3zM615 256h2v2h-2zM313 317h3v3h-3zM958 547h2v2h-2zM525 39h3v3h-3zM625 992h3v3h-3zM896 140h2v2h-2zM712 699h2v2h-2zM420 545h2v2h-2zM884 479h2v2h-2zM958 746h2v2h-2zM952 675h2v2h-2zM555 290h2v2h-2zM345 882h2v2h-2zM469 18h2v2h-2zM671 369h2v2h-2zM193 361h2v2h-2zM960 403h2v2h-2zM992 476h2v2h-2zM317 188h2v2h-2zM727 200h2v2h-2zM388 48h2v2h-2zM798 520h2v2h-2zM583 994h2v2h-2zM101 859h3v3h-3zM490 890h2v2h-2zM395 452h2v2h-2zM586 970h3v3h-3zM829 955h2v2h-2zM827 465h2v2h-2zM575 1002h2v2h-2zM516 800h2v2h-2zM568 491h2v2h-2zM403 245h2v2h-2zM260 401h2v2h-2zM837 352h2v2h-2zM1039 580h2v2h-2zM974 674h2v2h-2zM643 535h2v2h-2zM539 885h2v2h-2zM187 468h2v2h-2zM599 649h3v3h-3zM139 448h3v3h-3zM666 613h2v2h-2zM597 661h3v3h-3zM521 524h3v3h-3zM381 934h3v3h-3zM931 1042h3v3h-3zM851 1029h3v3h-3zM701 272h3v3h-3zM990 479h2v2h-2zM414 254h2v2h-2zM373 279h3v3h-3zM433 896h2v2h-2zM377 93h3v3h-3zM272 358h2v2h-2zM882 619h2v2h-2zM972 533h3v3h-3zM337 786h2v2h-2zM859 325h3v3h-3zM450 918h3v3h-3zM960 621h2v2h-2zM382 59h2v2h-2zM998 996h3v3h-3zM728 611h2v2h-2zM475 878h3v3h-3zM640 139h2v2h-2zM533 550h2v2h-2zM692 676h2v2h-2zM493 960h2v2h-2zM395 455h2v2h-2zM237 278h3v3h-3zM204 164h2v2h-2zM794 658h2v2h-2zM289 146h2v2h-2zM245 484h2v2h-2zM372 514h3v3h-3zM341 237h2v2h-2zM33 493h3v3h-3zM286 494h2v2h-2zM934 407h2v2h-2zM646 61h2v2h-2zM414 221h3v3h-3zM427 275h2v2h-2zM461 132h3v3h-3zM775 702h2v2h-2zM235 542h2v2h-2zM631 844h2v2h-2zM477 45h2v2h-2zM404 1014h2v2h-2zM781 480h3v3h-3zM241 207h2v2h-2zM1035 390h2v2h-2zM606 360h2v2h-2zM633 177h3v3h-3zM928 431h3v3h-3zM520 468h2v2h-2zM292 111h2v2h-2zM604 333h3v3h-3zM662 913h2v2h-2zM565 375h2v2h-2zM486 342h2v2h-2zM397 50h2v2h-2zM203 493h2v2h-2zM945 168h2v2h-2zM907 1016h3v3h-3zM906 416h3v3h-3zM91 262h2v2h-2zM1033 552h2v2h-2zM339 819h3v3h-3zM115 380h3v3h-3zM340 166h3v3h-3zM477 82h3v3h-3zM1011 1019h2v2h-2zM162 1035h2v2h-2zM782 1009h3v3h-3zM996 996h3v3h-3zM165 404h2v2h-2zM472 171h2v2h-2zM596 495h2v2h-2zM474 409h2v2h-2zM801 611h3v3h-3zM838 1023h2v2h-2zM982 358h2v2h-2zM784 492h2v2h-2zM1014 151h3v3h-3zM617 1028h3v3h-3zM591 507h3v3h-3zM1007 616h2v2h-2zM939 639h2v2h-2zM416 304h2v2h-2zM726 926h3v3h-3zM573 913h3v3h-3zM812 158h2v2h-2zM928 508h3v3h-3zM623 102h2v2h-2zM810 577h2v2h-2zM700 709h2v2h-2zM903 635h3v3h-3zM940 144h2v2h-2zM995 307h3v3h-3zM709 526h3v3h-3zM500 195h2v2h-2zM582 69h3v3h-3zM538 396h3v3h-3zM901 143h2v2h-2zM981 449h2v2h-2zM458 925h2v2h-2zM971 545h3v3h-3zM170 489h2v2h-2zM127 515h3v3h-3zM952 440h2v2h-2zM801 372h2v2h-2zM833 630h2v2h-2zM475 499h3v3h-3zM524 633h2v2h-2zM183 71h3v3h-3zM331 401h2v2h-2zM404 908h2v2h-2zM317 4h2v2h-2zM413 936h2v2h-2zM513 346h3v3h-3zM970 585h2v2h-2zM989 517h2v2h-2zM729 135h2v2h-2zM801 512h3v3h-3zM246 165h3v3h-3zM793 323h2v2h-2zM327 1040h3v3h-3zM119 426h2v2h-2zM210 674h3v3h-3zM823 917h2v2h-2zM165 426h3v3h-3zM1019 619h3v3h-3zM688 615h2v2h-2zM734 1029h3v3h-3zM900 697h2v2h-2zM410 637h3v3h-3zM1035 482h2v2h-2zM571 221h3v3h-3zM990 127h2v2h-2zM677 556h2v2h-2zM490 1018h2v2h-2zM350 887h2v2h-2zM748 1016h2v2h-2zM1001 17h2v2h-2zM246 216h2v2h-2zM683 124h2v2h-2zM667 573h2v2h-2zM984 324h2v2h-2zM811 520h2v2h-2zM751 532h2v2h-2zM380 269h3v3h-3zM472 1022h2v2h-2zM654 144h3v3h-3zM179 394h2v2h-2zM417 117h2v2h-2zM276 910h3v3h-3zM949 1008h3v3h-3zM781 915h3v3h-3zM994 480h2v2h-2zM428 89h3v3h-3zM434 987h2v2h-2zM930 516h2v2h-2zM383 993h2v2h-2zM949 684h3v3h-3zM35 818h2v2h-2zM55 517h2v2h-2zM757 384h2v2h-2zM889 81h2v2h-2zM578 645h3v3h-3zM939 1025h2v2h-2zM306 384h2v2h-2zM600 940h3v3h-3zM555 493h2v2h-2zM498 510h2v2h-2zM475 611h2v2h-2zM716 51h3v3h-3zM580 550h3v3h-3zM875 600h2v2h-2zM865 230h2v2h-2zM1021 583h3v3h-3zM937 92h2v2h-2zM57 842h2v2h-2zM609 469h2v2h-2zM974 139h3v3h-3zM516 213h3v3h-3zM756 204h2v2h-2zM621 47h2v2h-2zM863 615h2v2h-2zM913 979h2v2h-2zM851 645h2v2h-2zM483 71h2v2h-2zM461 2h2v2h-2zM722 526h3v3h-3zM1016 32h2v2h-2zM699 390h3v3h-3zM815 511h2v2h-2zM341 326h2v2h-2zM429 123h2v2h-2zM408 920h2v2h-2zM876 533h2v2h-2zM827 550h3v3h-3zM181 559h2v2h-2zM921 208h3v3h-3zM505 1025h2v2h-2zM536 655h2v2h-2zM588 984h3v3h-3zM182 116h2v2h-2zM353 372h2v2h-2zM522 996h3v3h-3zM871 418h2v2h-2zM1025 699h3v3h-3zM310 859h2v2h-2zM988 436h2v2h-2zM664 86h2v2h-2zM999 992h3v3h-3zM214 266h2v2h-2zM559 550h3v3h-3zM1018 967h2v2h-2zM347 1036h3v3h-3zM277 190h2v2h-2zM342 71h2v2h-2zM997 908h2v2h-2zM35 642h2v2h-2zM482 424h3v3h-3zM989 562h2v2h-2zM583 513h3v3h-3zM232 87h3v3h-3zM609 1025h3v3h-3zM795 539h2v2h-2zM489 1042h2v2h-2zM83 436h2v2h-2zM649 920h2v2h-2zM359 166h2v2h-2zM486 921h3v3h-3zM700 326h2v2h-2zM642 356h2v2h-2zM569 431h3v3h-3zM716 519h2v2h-2zM700 1031h2v2h-2zM818 964h3v3h-3zM289 885h2v2h-2zM263 245h3v3h-3zM551 248h2v2h-2zM834 336h2v2h-2zM154 966h2v2h-2zM472 753h2v2h-2zM980 900h2v2h-2zM811 472h3v3h-3zM396 941h2v2h-2zM889 532h2v2h-2zM830 363h2v2h-2zM584 1037h2v2h-2zM481 391h3v3h-3zM641 408h2v2h-2zM478 121h2v2h-2zM802 632h2v2h-2zM1000 57h2v2h-2zM480 985h2v2h-2zM1024 418h2v2h-2zM606 247h2v2h-2zM470 140h2v2h-2zM557 448h2v2h-2zM354 685h2v2h-2zM380 315h2v2h-2zM606 626h3v3h-3zM326 588h2v2h-2zM844 640h3v3h-3zM276 167h2v2h-2zM266 365h2v2h-2zM664 477h2v2h-2zM434 218h2v2h-2zM372 280h2v2h-2zM551 1021h3v3h-3zM380 261h3v3h-3zM471 586h3v3h-3zM367 1005h2v2h-2zM908 1031h3v3h-3zM338 841h2v2h-2zM739 1033h2v2h-2zM1012 626h2v2h-2zM793 517h2v2h-2zM463 267h3v3h-3zM571 1036h2v2h-2zM910 586h2v2h-2zM588 550h2v2h-2zM520 1011h2v2h-2zM797 488h2v2h-2zM843 793h2v2h-2zM535 140h3v3h-3zM942 963h2v2h-2zM64 436h2v2h-2zM967 502h2v2h-2zM180 121h3v3h-3zM794 1018h2v2h-2zM1010 284h2v2h-2zM42 506h3v3h-3zM509 958h2v2h-2zM878 62h2v2h-2zM274 317h2v2h-2zM431 997h2v2h-2zM849 382h2v2h-2zM314 163h3v3h-3zM775 540h3v3h-3zM751 225h2v2h-2zM329 1034h2v2h-2zM458 390h2v2h-2zM564 991h2v2h-2zM970 530h2v2h-2zM597 466h3v3h-3zM499 1003h3v3h-3zM405 352h2v2h-2zM962 977h2v2h-2zM525 212h2v2h-2zM591 23h2v2h-2zM488 82h2v2h-2zM560 175h3v3h-3zM525 401h2v2h-2zM400 543h2v2h-2zM567 541h2v2h-2zM866 414h3v3h-3zM601 436h2v2h-2zM730 721h3v3h-3zM783 1024h2v2h-2zM297 235h2v2h-2zM902 610h2v2h-2zM977 505h2v2h-2zM796 471h2v2h-2zM656 990h2v2h-2zM543 893h2v2h-2zM611 112h3v3h-3zM870 572h3v3h-3zM1001 442h3v3h-3zM1035 397h3v3h-3zM517 129h3v3h-3zM663 21h3v3h-3zM676 263h2v2h-2zM877 550h3v3h-3zM495 672h2v2h-2zM429 349h3v3h-3zM399 1008h2v2h-2zM552 231h3v3h-3zM585 42h2v2h-2zM489 196h2v2h-2zM554 863h3v3h-3zM913 764h2v2h-2zM299 301h3v3h-3zM916 592h3v3h-3zM897 58h3v3h-3zM456 313h2v2h-2zM642 701h2v2h-2zM96 380h3v3h-3zM227 164h2v2h-2zM866 806h3v3h-3zM515 23h3v3h-3zM615 230h2v2h-2zM410 427h3v3h-3zM409 27h2v2h-2zM529 499h2v2h-2zM969 504h3v3h-3zM564 196h2v2h-2zM687 641h3v3h-3zM531 993h2v2h-2zM689 192h2v2h-2zM1003 298h2v2h-2zM968 133h2v2h-2zM234 257h2v2h-2zM647 581h2v2h-2zM966 456h2v2h-2zM474 267h3v3h-3zM542 245h3v3h-3zM866 346h2v2h-2zM193 24h2v2h-2zM347 236h2v2h-2zM364 586h3v3h-3zM155 265h3v3h-3zM476 784h2v2h-2zM329 235h2v2h-2zM799 509h2v2h-2zM592 334h2v2h-2zM1039 533h3v3h-3zM375 546h2v2h-2zM975 487h3v3h-3zM423 360h3v3h-3zM412 992h3v3h-3zM651 526h3v3h-3zM123 728h3v3h-3zM827 427h2v2h-2zM712 853h2v2h-2zM547 79h2v2h-2zM557 387h2v2h-2zM899 384h2v2h-2zM986 522h3v3h-3zM596 500h2v2h-2zM201 256h2v2h-2zM681 546h3v3h-3zM62 457h3v3h-3zM252 936h2v2h-2zM366 184h3v3h-3zM430 164h2v2h-2zM667 552h2v2h-2zM789 508h2v2h-2zM637 412h2v2h-2zM708 337h3v3h-3zM801 547h2v2h-2zM865 353h3v3h-3zM616 247h2v2h-2zM683 1027h2v2h-2zM327 63h3v3h-3zM838 292h2v2h-2zM699 400h3v3h-3zM755 198h3v3h-3zM397 403h3v3h-3zM500 69h3v3h-3zM213 412h2v2h-2zM684 904h3v3h-3zM890 18h2v2h-2zM895 1013h2v2h-2zM600 279h2v2h-2zM347 398h3v3h-3zM636 888h3v3h-3zM445 935h2v2h-2zM749 967h3v3h-3zM479 357h2v2h-2zM692 261h2v2h-2zM564 209h3v3h-3zM999 350h2v2h-2zM450 320h2v2h-2zM885 279h2v2h-2zM659 397h2v2h-2zM770 982h3v3h-3zM598 621h3v3h-3zM1021 651h2v2h-2zM537 885h3v3h-3zM348 29h2v2h-2zM524 90h2v2h-2zM165 399h2v2h-2zM241 436h2v2h-2zM577 970h2v2h-2zM588 296h2v2h-2zM422 924h2v2h-2zM939 462h2v2h-2zM39 886h3v3h-3zM201 556h3v3h-3zM306 221h3v3h-3zM691 104h3v3h-3zM638 974h2v2h-2zM515 399h2v2h-2zM986 330h2v2h-2zM743 46h2v2h-2zM362 651h2v2h-2zM687 640h3v3h-3zM731 139h2v2h-2zM317 504h3v3h-3zM641 469h2v2h-2zM246 333h2v2h-2zM854 403h3v3h-3zM896 1026h3v3h-3zM803 17h2v2h-2zM418 972h3v3h-3zM375 916h2v2h-2zM367 559h2v2h-2zM461 18h2v2h-2zM925 715h2v2h-2zM497 314h2v2h-2zM640 172h2v2h-2zM302 910h2v2h-2zM215 287h2v2h-2zM556 128h2v2h-2zM146 265h2v2h-2zM570 461h2v2h-2zM592 1011h2v2h-2zM410 220h2v2h-2zM292 273h2v2h-2zM850 493h2v2h-2zM734 435h3v3h-3zM291 202h2v2h-2zM938 331h2v2h-2zM949 544h2v2h-2zM327 227h2v2h-2zM602 34h2v2h-2zM977 72h2v2h-2zM524 435h2v2h-2zM454 207h2v2h-2zM400 233h2v2h-2zM494 109h2v2h-2zM362 998h2v2h-2zM1036 321h2v2h-2zM539 223h2v2h-2zM283 200h2v2h-2zM1024 797h2v2h-2zM960 348h2v2h-2zM1042 91h2v2h-2zM37 635h2v2h-2zM1028 731h3v3h-3zM339 99h2v2h-2zM594 384h2v2h-2zM968 923h3v3h-3zM968 249h3v3h-3zM692 353h2v2h-2zM448 934h2v2h-2zM439 963h3v3h-3zM582 105h3v3h-3zM980 472h3v3h-3zM206 261h2v2h-2zM823 558h2v2h-2zM268 209h2v2h-2zM944 418h3v3h-3zM428 1028h3v3h-3zM731 625h2v2h-2zM426 1035h2v2h-2zM122 413h2v2h-2zM394 259h3v3h-3zM230 295h2v2h-2zM488 902h2v2h-2zM654 51h2v2h-2zM292 128h2v2h-2zM371 336h2v2h-2zM161 489h2v2h-2zM372 67h2v2h-2zM431 316h2v2h-2zM605 588h2v2h-2zM381 421h2v2h-2zM1037 457h2v2h-2zM656 911h2v2h-2zM771 696h2v2h-2zM404 296h3v3h-3zM87 605h2v2h-2zM549 882h2v2h-2zM692 155h2v2h-2zM250 457h2v2h-2zM127 834h3v3h-3zM715 199h3v3h-3zM414 229h3v3h-3zM597 77h3v3h-3zM472 570h2v2h-2zM360 501h2v2h-2zM418 1033h2v2h-2zM1014 253h2v2h-2zM659 194h2v2h-2zM500 195h3v3h-3zM747 921h2v2h-2zM572 929h2v2h-2zM289 810h2v2h-2zM49 268h2v2h-2zM437 186h3v3h-3zM509 135h3v3h-3zM785 403h2v2h-2zM364 240h2v2h-2zM86 345h2v2h-2zM559 346h3v3h-3zM597 989h2v2h-2zM523 194h2v2h-2zM936 399h2v2h-2zM646 453h2v2h-2zM894 1003h2v2h-2zM593 515h3v3h-3zM322 964h2v2h-2zM881 566h2v2h-2zM462 994h2v2h-2zM887 38h2v2h-2zM313 792h3v3h-3zM437 473h2v2h-2zM877 891h2v2h-2zM403 196h2v2h-2zM246 1017h3v3h-3zM256 426h2v2h-2zM869 1021h2v2h-2zM507 27h2v2h-2zM430 37h3v3h-3zM307 243h2v2h-2zM966 1032h3v3h-3zM478 230h2v2h-2zM702 601h2v2h-2zM424 146h2v2h-2zM974 898h2v2h-2zM104 473h2v2h-2zM846 302h2v2h-2zM122 772h3v3h-3zM466 939h2v2h-2zM463 947h2v2h-2zM680 583h2v2h-2zM616 358h3v3h-3zM773 357h2v2h-2zM618 374h3v3h-3zM680 161h2v2h-2zM284 392h2v2h-2zM917 98h2v2h-2zM630 190h3v3h-3zM336 304h2v2h-2zM773 900h2v2h-2zM109 767h2v2h-2zM181 359h2v2h-2zM816 525h3v3h-3zM1000 981h3v3h-3zM364 271h3v3h-3zM889 643h2v2h-2zM797 418h2v2h-2zM459 663h2v2h-2zM175 229h3v3h-3zM586 1007h3v3h-3zM663 512h2v2h-2zM364 292h3v3h-3zM603 965h3v3h-3zM563 464h3v3h-3zM849 218h3v3h-3zM468 338h2v2h-2zM354 72h2v2h-2zM438 303h3v3h-3zM676 1013h3v3h-3zM270 213h2v2h-2zM512 13h2v2h-2zM998 13h3v3h-3zM654 900h2v2h-2zM594 179h3v3h-3zM464 595h2v2h-2zM912 810h2v2h-2zM282 548h3v3h-3zM619 101h3v3h-3zM684 1013h2v2h-2zM236 129h2v2h-2zM490 443h2v2h-2zM652 989h2v2h-2zM101 443h2v2h-2zM971 704h2v2h-2zM381 187h2v2h-2zM440 329h2v2h-2zM685 502h3v3h-3zM328 99h3v3h-3zM474 326h2v2h-2zM63 423h2v2h-2zM1009 280h2v2h-2zM432 893h2v2h-2zM749 73h2v2h-2zM787 532h2v2h-2zM113 98h2v2h-2zM369 934h2v2h-2zM190 13h3v3h-3zM821 327h2v2h-2zM649 543h2v2h-2zM388 1035h2v2h-2zM729 401h3v3h-3zM407 463h2v2h-2zM163 130h2v2h-2zM483 381h2v2h-2zM447 395h2v2h-2zM985 229h2v2h-2zM473 366h3v3h-3zM384 197h2v2h-2zM943 809h2v2h-2zM828 709h2v2h-2zM402 610h3v3h-3zM500 671h2v2h-2zM329 967h2v2h-2zM1041 441h3v3h-3zM280 219h3v3h-3zM267 546h3v3h-3zM190 294h3v3h-3zM662 486h3v3h-3zM827 302h2v2h-2zM793 438h3v3h-3zM806 178h2v2h-2zM252 949h2v2h-2zM527 82h3v3h-3zM895 680h2v2h-2zM706 269h2v2h-2zM572 179h2v2h-2zM727 426h3v3h-3zM732 925h2v2h-2zM988 532h2v2h-2zM184 317h2v2h-2zM696 80h3v3h-3zM814 599h2v2h-2zM462 47h2v2h-2zM963 356h3v3h-3zM948 701h2v2h-2zM609 169h2v2h-2zM388 425h3v3h-3zM188 417h2v2h-2zM481 977h2v2h-2zM623 918h2v2h-2zM530 112h2v2h-2zM275 900h2v2h-2zM769 1003h3v3h-3zM353 107h2v2h-2zM513 616h3v3h-3zM878 109h2v2h-2zM1015 10h2v2h-2zM351 889h2v2h-2zM703 237h2v2h-2zM848 539h3v3h-3zM906 478h2v2h-2zM980 829h2v2h-2zM284 193h2v2h-2zM418 69h3v3h-3zM351 548h2v2h-2zM619 337h3v3h-3zM913 349h3v3h-3zM858 452h3v3h-3zM850 186h2v2h-2zM361 277h2v2h-2zM534 362h2v2h-2zM531 109h2v2h-2zM352 400h2v2h-2zM827 433h2v2h-2zM435 916h2v2h-2zM274 977h3v3h-3zM992 697h3v3h-3zM562 639h2v2h-2zM703 600h2v2h-2zM640 1012h3v3h-3zM728 547h2v2h-2zM1002 702h2v2h-2zM568 798h2v2h-2zM393 1023h2v2h-2zM429 347h3v3h-3zM832 440h3v3h-3zM996 112h2v2h-2zM299 189h2v2h-2zM584 411h2v2h-2zM501 45h2v2h-2zM302 543h2v2h-2zM1024 935h2v2h-2zM502 1020h2v2h-2zM426 529h2v2h-2zM83 338h3v3h-3zM802 251h3v3h-3zM438 584h2v2h-2zM763 300h2v2h-2zM242 750h2v2h-2zM384 370h3v3h-3zM755 11h2v2h-2zM677 1030h3v3h-3zM1018 1002h2v2h-2zM508 1002h3v3h-3zM801 511h3v3h-3zM376 437h2v2h-2zM482 969h3v3h-3zM131 523h2v2h-2zM1040 999h3v3h-3zM329 1004h3v3h-3zM426 911h2v2h-2zM644 673h2v2h-2zM515 623h2v2h-2zM470 498h2v2h-2zM130 534h2v2h-2zM614 913h3v3h-3zM301 452h3v3h-3zM580 133h3v3h-3zM415 222h2v2h-2zM544 195h2v2h-2zM550 225h2v2h-2zM750 936h2v2h-2zM425 892h2v2h-2zM394 2h2v2h-2zM905 423h3v3h-3zM877 1002h2v2h-2zM1012 963h2v2h-2zM716 1033h2v2h-2zM725 394h2v2h-2zM788 999h2v2h-2zM658 1005h3v3h-3zM460 83h2v2h-2zM417 302h2v2h-2zM993 392h2v2h-2zM867 566h2v2h-2zM622 256h3v3h-3zM212 992h2v2h-2zM370 945h2v2h-2zM699 1036h2v2h-2zM918 593h2v2h-2zM472 680h2v2h-2zM691 174h3v3h-3zM488 139h2v2h-2zM892 963h3v3h-3zM937 503h2v2h-2zM223 229h2v2h-2zM912 554h2v2h-2zM174 672h3v3h-3zM342 308h2v2h-2zM418 564h2v2h-2zM579 959h2v2h-2zM964 984h3v3h-3zM284 423h2v2h-2zM549 501h2v2h-2zM1030 923h2v2h-2zM412 434h2v2h-2zM591 147h2v2h-2zM973 290h2v2h-2zM717 235h2v2h-2zM1022 11h2v2h-2zM659 436h2v2h-2zM495 576h2v2h-2zM664 123h2v2h-2zM1029 596h2v2h-2zM678 986h2v2h-2zM926 635h3v3h-3zM285 176h2v2h-2zM624 974h3v3h-3zM436 305h3v3h-3zM561 137h2v2h-2zM897 965h2v2h-2zM67 709h2v2h-2zM113 241h3v3h-3zM985 787h2v2h-2zM520 8h2v2h-2zM495 207h3v3h-3zM788 903h2v2h-2zM640 10h2v2h-2zM570 545h2v2h-2zM554 612h3v3h-3zM516 97h3v3h-3zM823 141h2v2h-2zM549 351h2v2h-2zM1017 512h2v2h-2zM484 478h3v3h-3z"/><path fill="rgb(40,40,40)" d="M610 472h3v3h-3zM812 344h2v2h-2zM508 1031h3v3h-3zM450 537h2v2h-2zM321 224h3v3h-3zM907 699h3v3h-3zM515 296h2v2h-2zM506 1013h3v3h-3zM1036 1036h2v2h-2zM338 352h3v3h-3zM581 411h2v2h-2zM672 921h3v3h-3zM677 502h2v2h-2zM421 882h3v3h-3zM332 38h3v3h-3zM863 165h3v3h-3zM462 977h2v2h-2zM471 235h3v3h-3zM89 529h3v3h-3zM854 178h2v2h-2zM272 984h3v3h-3zM316 446h2v2h-2zM544 168h2v2h-2zM728 367h2v2h-2zM773 979h2v2h-2zM334 527h2v2h-2zM1004 265h2v2h-2zM386 245h2v2h-2zM268 129h2v2h-2zM655 471h2v2h-2zM457 156h2v2h-2zM450 273h2v2h-2zM227 595h3v3h-3zM793 115h3v3h-3zM973 434h3v3h-3zM837 454h2v2h-2zM933 536h2v2h-2zM255 199h2v2h-2zM743 42h2v2h-2zM533 967h2v2h-2zM442 981h3v3h-3zM680 262h3v3h-3zM462 587h2v2h-2zM143 809h2v2h-2zM388 16h2v2h-2zM708 409h3v3h-3zM637 79h2v2h-2zM932 614h2v2h-2zM104 252h3v3h-3zM755 343h2v2h-2zM997 221h3v3h-3zM416 332h2v2h-2zM836 893h2v2h-2zM474 974h2v2h-2zM623 563h2v2h-2zM500 155h2v2h-2zM707 158h2v2h-2zM1009 407h2v2h-2zM740 720h3v3h-3zM517 50h2v2h-2zM649 522h2v2h-2zM369 979h2v2h-2zM417 521h3v3h-3zM630 530h2v2h-2zM80 935h3v3h-3zM218 263h3v3h-3zM369 918h2v2h-2zM541 706h2v2h-2zM336 215h2v2h-2zM975 370h2v2h-2zM948 444h2v2h-2zM383 941h2v2h-2zM623 939h2v2h-2zM89 259h2v2h-2zM853 629h2v2h-2zM750 403h3v3h-3zM836 941h3v3h-3zM432 333h3v3h-3zM201 329h2v2h-2zM507 984h2v2h-2zM615 706h3v3h-3zM575 678h2v2h-2zM736 182h2v2h-2zM626 351h2v2h-2zM953 584h3v3h-3zM433 940h2v2h-2zM597 1030h2v2h-2zM266 148h2v2h-2zM524 962h2v2h-2zM559 300h2v2h-2zM671 988h2v2h-2zM698 1007h2v2h-2zM438 998h2v2h-2zM834 564h3v3h-3zM841 909h3v3h-3zM455 883h3v3h-3zM508 463h2v2h-2zM611 679h2v2h-2zM132 493h3v3h-3zM232 85h3v3h-3zM669 551h2v2h-2zM593 537h3v3h-3zM774 525h2v2h-2zM817 554h2v2h-2zM291 464h2v2h-2zM787 510h2v2h-2zM759 232h2v2h-2zM273 189h2v2h-2zM923 634h2v2h-2zM551 881h2v2h-2zM282 481h2v2h-2zM557 191h2v2h-2zM838 1019h2v2h-2zM941 463h2v2h-2zM597 338h3v3h-3zM172 200h3v3h-3zM711 397h2v2h-2zM480 549h3v3h-3zM857 573h2v2h-2zM900 20h3v3h-3zM577 616h2v2h-2zM835 318h3v3h-3zM427 581h2v2h-2zM694 217h2v2h-2zM481 1024h3v3h-3zM649 470h3v3h-3zM864 538h2v2h-2zM769 514h2v2h-2zM725 1034h2v2h-2zM924 684h2v2h-2zM584 1039h3v3h-3zM652 90h2v2h-2zM511 392h2v2h-2zM538 242h2v2h-2zM624 123h2v2h-2zM709 610h3v3h-3zM934 886h2v2h-2zM946 681h2v2h-2zM759 606h3v3h-3zM984 873h2v2h-2zM646 455h3v3h-3zM534 202h3v3h-3zM1031 526h2v2h-2zM948 633h2v2h-2zM932 589h2v2h-2zM617 996h2v2h-2zM597 998h3v3h-3zM333 300h2v2h-2zM575 276h2v2h-2zM183 385h2v2h-2zM355 185h3v3h-3zM820 1027h2v2h-2zM97 879h2v2h-2zM978 357h2v2h-2zM575 28h3v3h-3zM208 643h2v2h-2zM350 968h2v2h-2zM248 63h2v2h-2zM612 478h3v3h-3zM512 640h2v2h-2zM1024 135h3v3h-3zM873 375h3v3h-3zM508 406h2v2h-2zM627 1028h3v3h-3zM725 546h3v3h-3zM663 229h2v2h-2zM649 963h3v3h-3zM885 455h2v2h-2zM535 978h2v2h-2zM498 948h3v3h-3zM786 476h3v3h-3zM1040 591h3v3h-3zM226 543h2v2h-2zM487 180h2v2h-2zM510 463h2v2h-2zM859 590h2v2h-2zM453 522h2v2h-2zM293 1039h2v2h-2zM934 1027h3v3h-3zM582 107h2v2h-2zM621 808h3v3h-3zM421 417h2v2h-2zM1005 446h2v2h-2zM469 57h2v2h-2zM347 177h2v2h-2zM411 273h3v3h-3zM233 996h2v2h-2zM260 619h3v3h-3zM1015 332h2v2h-2zM416 75h3v3h-3zM622 349h3v3h-3zM532 692h3v3h-3zM970 1038h2v2h-2zM716 460h2v2h-2zM710 373h3v3h-3zM681 1041h2v2h-2zM622 410h2v2h-2zM357 946h2v2h-2zM680 889h2v2h-2zM318 135h2v2h-2zM224 181h2v2h-2zM609 601h2v2h-2zM1037 1h2v2h-2zM661 988h3v3h-3zM291 992h3v3h-3zM580 121h3v3h-3zM627 1014h2v2h-2zM168 400h2v2h-2zM968 575h3v3h-3zM622 663h2v2h-2zM620 554h3v3h-3zM177 97h2v2h-2zM903 969h3v3h-3zM941 553h3v3h-3zM930 552h2v2h-2zM260 925h3v3h-3zM741 967h3v3h-3zM435 248h2v2h-2zM334 56h3v3h-3zM383 303h3v3h-3zM880 259h2v2h-2zM378 242h3v3h-3zM590 563h3v3h-3zM869 161h2v2h-2zM895 1007h3v3h-3zM913 705h2v2h-2zM300 475h2v2h-2zM507 964h2v2h-2zM716 328h2v2h-2zM799 518h3v3h-3zM373 12h3v3h-3zM551 305h2v2h-2zM895 318h2v2h-2zM335 132h2v2h-2zM574 155h2v2h-2zM384 977h2v2h-2zM975 114h3v3h-3zM983 1007h2v2h-2zM973 618h2v2h-2zM300 1009h3v3h-3zM603 484h2v2h-2zM511 56h3v3h-3zM870 469h2v2h-2zM490 223h2v2h-2zM174 530h3v3h-3zM461 978h2v2h-2zM716 1028h2v2h-2zM540 358h3v3h-3zM709 948h2v2h-2zM990 655h2v2h-2zM620 888h2v2h-2zM114 607h2v2h-2zM618 246h2v2h-2zM1007 451h2v2h-2zM706 63h2v2h-2zM1010 428h3v3h-3zM932 1001h2v2h-2zM554 667h2v2h-2zM816 1008h2v2h-2zM276 85h2v2h-2zM521 100h3v3h-3zM396 655h2v2h-2zM303 285h3v3h-3zM354 6h2v2h-2zM304 92h2v2h-2zM291 1038h2v2h-2zM273 222h3v3h-3zM311 197h2v2h-2zM333 130h2v2h-2zM433 326h2v2h-2zM822 973h2v2h-2zM783 452h2v2h-2zM412 920h2v2h-2zM16 440h2v2h-2zM530 119h2v2h-2zM184 494h3v3h-3zM436 972h3v3h-3zM16 453h2v2h-2zM549 105h2v2h-2zM758 76h2v2h-2zM520 906h2v2h-2zM547 986h2v2h-2zM593 498h2v2h-2zM927 534h3v3h-3zM725 635h3v3h-3zM935 892h2v2h-2zM221 36h3v3h-3zM285 951h3v3h-3zM47 557h2v2h-2zM290 984h2v2h-2zM818 587h3v3h-3zM663 867h2v2h-2zM531 130h2v2h-2zM517 980h2v2h-2zM204 404h3v3h-3zM706 829h2v2h-2zM124 825h3v3h-3zM438 924h2v2h-2zM904 1028h2v2h-2zM812 205h2v2h-2zM519 6h2v2h-2zM481 501h2v2h-2zM693 539h2v2h-2zM566 996h3v3h-3zM970 916h2v2h-2zM229 529h2v2h-2zM56 269h3v3h-3zM274 896h2v2h-2zM918 571h3v3h-3zM539 926h2v2h-2zM1020 520h2v2h-2zM559 1009h2v2h-2zM604 966h2v2h-2zM320 1041h2v2h-2zM217 634h2v2h-2zM538 440h2v2h-2zM971 79h2v2h-2zM596 709h3v3h-3zM736 428h2v2h-2zM677 429h2v2h-2zM735 583h3v3h-3zM402 620h3v3h-3zM489 914h3v3h-3zM485 320h2v2h-2zM576 560h2v2h-2zM967 502h2v2h-2zM1026 402h3v3h-3zM426 217h2v2h-2zM926 992h3v3h-3zM578 152h2v2h-2zM495 35h3v3h-3zM1005 140h2v2h-2zM676 138h2v2h-2zM238 1035h3v3h-3zM267 327h2v2h-2zM1016 986h2v2h-2zM732 120h2v2h-2zM762 1039h2v2h-2zM688 221h3v3h-3zM324 431h2v2h-2zM980 993h2v2h-2zM412 359h2v2h-2zM381 229h2v2h-2zM490 965h2v2h-2zM830 674h3v3h-3zM96 332h3v3h-3zM413 908h3v3h-3zM701 1020h2v2h-2zM494 201h2v2h-2zM463 355h2v2h-2zM432 888h2v2h-2zM378 976h3v3h-3zM864 1025h2v2h-2zM354 884h2v2h-2zM286 163h3v3h-3zM254 117h2v2h-2zM409 44h2v2h-2zM1022 1027h3v3h-3zM1037 465h2v2h-2zM534 178h3v3h-3zM943 435h2v2h-2zM455 89h2v2h-2zM216 201h2v2h-2zM947 1025h2v2h-2zM972 575h2v2h-2zM147 496h3v3h-3zM218 548h3v3h-3zM278 35h3v3h-3zM1001 926h3v3h-3zM349 842h3v3h-3zM908 585h3v3h-3zM303 456h2v2h-2zM917 433h3v3h-3zM549 128h2v2h-2zM588 1023h3v3h-3zM619 1033h2v2h-2zM533 542h2v2h-2zM23 721h2v2h-2zM392 60h3v3h-3zM815 650h3v3h-3zM666 169h2v2h-2zM937 86h2v2h-2zM727 442h2v2h-2zM296 855h3v3h-3zM486 250h2v2h-2zM838 914h3v3h-3zM707 493h3v3h-3zM843 138h2v2h-2zM583 383h3v3h-3zM415 981h2v2h-2zM429 238h2v2h-2zM600 619h2v2h-2zM547 99h2v2h-2zM861 540h3v3h-3zM342 404h3v3h-3zM662 684h3v3h-3zM641 72h3v3h-3zM609 934h3v3h-3zM894 170h2v2h-2zM886 489h3v3h-3zM907 212h2v2h-2zM381 983h2v2h-2zM813 97h2v2h-2zM617 1001h3v3h-3zM574 476h2v2h-2zM501 126h2v2h-2zM861 1030h3v3h-3zM564 626h2v2h-2zM954 322h2v2h-2zM580 1009h2v2h-2zM620 74h2v2h-2zM986 100h2v2h-2zM422 593h2v2h-2zM635 1041h2v2h-2zM713 248h3v3h-3zM660 1041h2v2h-2zM442 160h3v3h-3zM636 137h2v2h-2zM524 621h3v3h-3zM208 268h2v2h-2zM726 504h2v2h-2zM835 575h2v2h-2zM569 2h2v2h-2zM1028 777h3v3h-3zM750 952h3v3h-3zM743 353h2v2h-2zM681 937h3v3h-3zM709 941h2v2h-2zM259 634h3v3h-3zM321 834h2v2h-2zM16 857h2v2h-2zM665 906h2v2h-2zM272 182h2v2h-2zM1003 1019h2v2h-2zM382 239h3v3h-3zM889 493h2v2h-2zM594 919h3v3h-3zM775 690h2v2h-2zM850 391h2v2h-2zM669 41h2v2h-2zM918 920h2v2h-2zM518 64h2v2h-2zM611 491h2v2h-2zM418 682h3v3h-3zM383 90h2v2h-2zM921 579h3v3h-3zM656 599h2v2h-2zM818 558h3v3h-3zM370 499h2v2h-2zM457 104h3v3h-3zM932 428h2v2h-2zM711 289h2v2h-2zM283 338h3v3h-3zM951 516h2v2h-2zM697 691h2v2h-2zM248 901h2v2h-2zM1020 642h2v2h-2zM508 1022h3v3h-3zM349 926h3v3h-3zM371 894h3v3h-3zM889 373h3v3h-3zM950 373h2v2h-2zM175 29h2v2h-2zM366 215h2v2h-2zM900 632h2v2h-2zM417 185h3v3h-3zM429 587h2v2h-2zM895 302h3v3h-3zM870 487h2v2h-2zM985 548h2v2h-2zM686 649h3v3h-3zM204 964h2v2h-2zM804 196h2v2h-2zM41 529h2v2h-2zM564 975h3v3h-3zM143 973h3v3h-3zM281 340h2v2h-2zM739 94h2v2h-2zM197 331h2v2h-2zM313 262h2v2h-2zM392 50h2v2h-2zM571 912h3v3h-3zM193 376h3v3h-3zM278 252h2v2h-2zM282 250h3v3h-3zM317 181h2v2h-2zM763 530h2v2h-2zM618 624h2v2h-2zM982 801h2v2h-2zM606 55h3v3h-3zM896 411h2v2h-2zM374 1028h2v2h-2zM974 348h3v3h-3zM610 1029h2v2h-2zM706 968h3v3h-3zM455 256h2v2h-2zM112 390h2v2h-2zM82 952h2v2h-2zM266 337h3v3h-3zM1035 496h2v2h-2zM644 36h3v3h-3zM458 888h2v2h-2zM814 1038h3v3h-3zM169 452h2v2h-2zM940 589h2v2h-2zM339 95h3v3h-3zM689 887h2v2h-2zM656 341h3v3h-3zM557 552h3v3h-3zM559 232h2v2h-2zM423 396h2v2h-2zM586 1008h3v3h-3zM669 535h2v2h-2zM701 908h3v3h-3zM747 484h3v3h-3zM370 331h2v2h-2zM393 118h2v2h-2zM893 239h2v2h-2zM700 1000h2v2h-2zM947 748h2v2h-2zM745 914h2v2h-2zM746 604h2v2h-2zM676 546h2v2h-2zM937 1036h3v3h-3zM419 1027h2v2h-2zM342 65h3v3h-3zM351 1012h2v2h-2zM867 369h3v3h-3zM479 270h2v2h-2zM933 61h2v2h-2zM467 1031h2v2h-2zM477 664h2v2h-2zM296 382h3v3h-3zM885 714h2v2h-2zM988 800h3v3h-3zM802 543h2v2h-2zM997 254h3v3h-3zM518 987h2v2h-2zM1040 317h2v2h-2zM335 500h2v2h-2zM597 378h3v3h-3zM878 604h3v3h-3zM714 74h2v2h-2zM745 388h2v2h-2zM449 532h2v2h-2zM310 430h2v2h-2zM361 382h2v2h-2zM774 305h2v2h-2zM221 272h3v3h-3zM373 940h2v2h-2zM777 256h2v2h-2zM588 714h2v2h-2zM537 1008h3v3h-3zM644 967h2v2h-2zM727 604h2v2h-2zM542 167h3v3h-3zM492 49h3v3h-3zM826 545h2v2h-2zM687 692h2v2h-2zM629 431h3v3h-3zM503 656h2v2h-2zM821 546h2v2h-2zM883 604h2v2h-2zM615 602h2v2h-2zM538 586h2v2h-2zM282 279h2v2h-2zM602 229h3v3h-3zM440 51h2v2h-2zM980 294h2v2h-2zM872 1023h2v2h-2zM974 830h3v3h-3zM670 22h3v3h-3zM471 411h2v2h-2zM926 658h3v3h-3zM943 548h2v2h-2zM417 111h2v2h-2zM524 203h2v2h-2zM892 923h2v2h-2zM151 383h3v3h-3zM969 413h2v2h-2zM254 211h3v3h-3zM647 539h2v2h-2zM503 890h3v3h-3zM394 190h2v2h-2zM194 347h2v2h-2zM434 367h3v3h-3zM236 305h2v2h-2zM681 544h2v2h-2zM322 87h2v2h-2zM658 207h2v2h-2zM371 259h3v3h-3zM1040 309h2v2h-2zM314 380h2v2h-2zM509 13h3v3h-3zM358 32h2v2h-2zM754 911h2v2h-2zM721 522h2v2h-2zM628 730h2v2h-2zM1038 881h3v3h-3zM250 193h2v2h-2zM335 844h2v2h-2zM804 28h2v2h-2zM917 402h2v2h-2zM992 304h2v2h-2zM981 590h2v2h-2zM479 363h2v2h-2zM576 154h2v2h-2zM1039 665h2v2h-2zM457 911h3v3h-3zM188 493h3v3h-3zM839 357h2v2h-2zM248 515h2v2h-2zM508 620h3v3h-3zM479 911h3v3h-3zM239 534h2v2h-2zM270 606h2v2h-2zM1028 345h2v2h-2zM692 490h2v2h-2zM805 581h2v2h-2zM669 715h3v3h-3zM840 501h2v2h-2zM289 357h3v3h-3zM1010 570h2v2h-2zM420 226h3v3h-3zM671 551h2v2h-2zM664 32h2v2h-2zM761 937h2v2h-2zM247 24h2v2h-2zM740 18h2v2h-2zM688 618h3v3h-3zM491 934h3v3h-3zM58 868h3v3h-3zM738 545h2v2h-2zM369 1008h2v2h-2zM525 512h2v2h-2zM339 283h2v2h-2zM431 165h2v2h-2zM643 208h2v2h-2zM773 304h2v2h-2zM619 14h2v2h-2zM332 997h2v2h-2zM452 626h2v2h-2zM538 198h2v2h-2zM315 37h2v2h-2zM680 519h2v2h-2zM457 478h2v2h-2zM992 276h3v3h-3zM118 372h2v2h-2zM207 272h3v3h-3zM909 444h2v2h-2zM958 987h2v2h-2zM205 47h2v2h-2zM524 419h2v2h-2zM937 470h2v2h-2zM596 386h2v2h-2zM586 958h2v2h-2zM861 514h2v2h-2zM852 761h2v2h-2zM20 593h3v3h-3zM158 274h3v3h-3zM208 202h2v2h-2zM734 478h2v2h-2zM405 157h3v3h-3zM983 768h2v2h-2zM1037 616h2v2h-2zM437 95h2v2h-2zM580 99h2v2h-2zM384 27h3v3h-3zM537 330h2v2h-2zM244 983h2v2h-2zM303 341h3v3h-3zM204 397h2v2h-2zM287 98h3v3h-3zM356 428h2v2h-2zM433 129h2v2h-2zM333 115h3v3h-3zM765 547h3v3h-3zM468 918h2v2h-2zM641 337h3v3h-3zM505 30h2v2h-2zM442 1002h3v3h-3zM563 617h3v3h-3zM8 418h3v3h-3zM997 276h2v2h-2zM511 653h2v2h-2zM577 614h2v2h-2zM952 548h3v3h-3zM377 1006h2v2h-2zM939 427h2v2h-2zM516 671h3v3h-3zM784 637h3v3h-3zM85 257h3v3h-3zM764 693h2v2h-2zM508 831h3v3h-3zM731 584h3v3h-3zM901 682h3v3h-3zM950 624h2v2h-2zM204 497h3v3h-3zM314 504h2v2h-2zM434 415h2v2h-2zM678 332h2v2h-2zM343 592h2v2h-2zM510 985h2v2h-2zM489 419h3v3h-3zM237 332h3v3h-3zM329 534h2v2h-2zM865 240h2v2h-2zM382 353h2v2h-2zM652 1011h2v2h-2zM946 346h2v2h-2zM737 340h3v3h-3zM130 607h2v2h-2zM931 362h2v2h-2zM1013 243h2v2h-2zM518 952h2v2h-2zM438 901h2v2h-2zM334 870h2v2h-2zM507 890h3v3h-3zM52 952h2v2h-2zM551 887h2v2h-2zM616 458h2v2h-2zM689 284h3v3h-3zM985 157h2v2h-2zM670 437h3v3h-3zM609 452h2v2h-2zM954 937h2v2h-2zM430 983h2v2h-2zM888 532h3v3h-3zM459 978h3v3h-3zM420 883h2v2h-2zM970 396h2v2h-2zM775 358h2v2h-2zM874 494h2v2h-2zM199 332h2v2h-2zM1009 944h3v3h-3zM485 606h3v3h-3zM546 67h2v2h-2zM283 448h2v2h-2zM631 893h3v3h-3zM791 894h2v2h-2zM726 514h2v2h-2zM367 282h2v2h-2zM914 466h2v2h-2zM775 646h2v2h-2zM838 239h3v3h-3zM612 392h2v2h-2zM484 598h2v2h-2zM614 712h2v2h-2zM691 101h2v2h-2zM404 257h3v3h-3zM1006 641h3v3h-3zM859 668h3v3h-3zM921 598h2v2h-2zM899 568h3v3h-3zM629 450h2v2h-2zM856 96h2v2h-2zM654 1033h3v3h-3zM862 333h3v3h-3zM207 282h2v2h-2zM776 491h3v3h-3zM766 704h2v2h-2zM927 564h2v2h-2zM462 253h2v2h-2zM911 492h3v3h-3zM889 211h2v2h-2zM271 238h2v2h-2zM368 462h2v2h-2zM225 627h2v2h-2zM548 408h3v3h-3zM204 383h2v2h-2zM372 351h3v3h-3zM486 326h2v2h-2zM265 468h3v3h-3zM520 1012h2v2h-2zM533 672h3v3h-3zM466 35h2v2h-2zM640 410h2v2h-2zM539 74h2v2h-2zM648 77h2v2h-2zM748 934h2v2h-2zM824 392h2v2h-2zM366 296h3v3h-3zM388 851h3v3h-3zM715 495h3v3h-3zM960 652h2v2h-2zM304 317h2v2h-2zM664 420h2v2h-2zM269 435h3v3h-3zM646 216h2v2h-2zM623 632h2v2h-2zM833 988h2v2h-2zM959 239h2v2h-2zM355 344h2v2h-2zM1034 81h3v3h-3zM244 1024h2v2h-2zM950 662h3v3h-3zM727 585h2v2h-2zM334 199h2v2h-2zM246 647h2v2h-2zM792 886h2v2h-2zM879 394h2v2h-2zM758 652h2v2h-2zM910 994h2v2h-2zM117 336h2v2h-2zM864 263h3v3h-3zM849 567h3v3h-3zM614 506h2v2h-2zM772 77h2v2h-2zM877 630h2v2h-2zM452 882h3v3h-3zM1011 635h3v3h-3zM924 297h2v2h-2zM566 570h3v3h-3zM572 332h2v2h-2zM165 897h3v3h-3zM375 998h3v3h-3zM34 803h2v2h-2zM734 913h2v2h-2zM745 1004h2v2h-2zM452 117h2v2h-2zM316 543h2v2h-2zM460 171h2v2h-2zM446 937h2v2h-2zM264 91h2v2h-2zM157 380h2v2h-2zM470 690h3v3h-3zM269 555h2v2h-2zM359 626h3v3h-3zM1018 491h3v3h-3zM634 981h2v2h-2zM327 122h3v3h-3zM581 506h3v3h-3zM652 935h2v2h-2zM113 352h2v2h-2zM866 1039h2v2h-2zM1014 887h2v2h-2zM528 787h2v2h-2zM838 1002h2v2h-2zM247 362h2v2h-2zM552 173h2v2h-2zM398 431h2v2h-2zM771 513h2v2h-2zM563 721h2v2h-2zM210 164h2v2h-2zM170 181h3v3h-3zM296 198h3v3h-3zM994 566h3v3h-3zM866 999h3v3h-3zM431 918h3v3h-3zM779 312h2v2h-2zM759 155h2v2h-2zM765 434h2v2h-2zM940 630h2v2h-2zM563 578h2v2h-2zM417 133h2v2h-2zM900 599h3v3h-3zM657 490h2v2h-2zM797 300h2v2h-2zM577 407h2v2h-2zM644 276h3v3h-3zM414 101h2v2h-2zM787 940h2v2h-2zM420 387h2v2h-2zM260 978h2v2h-2zM339 452h2v2h-2zM563 704h3v3h-3zM497 149h2v2h-2zM848 383h2v2h-2zM724 660h2v2h-2zM979 601h2v2h-2zM225 433h3v3h-3zM533 188h2v2h-2zM508 990h2v2h-2zM148 435h2v2h-2zM242 283h2v2h-2zM19 841h2v2h-2zM533 132h2v2h-2zM117 506h2v2h-2zM882 1017h3v3h-3zM777 430h3v3h-3zM496 619h3v3h-3zM613 582h2v2h-2zM339 449h3v3h-3zM935 84h2v2h-2zM842 970h2v2h-2zM773 109h3v3h-3zM674 1013h3v3h-3zM607 439h2v2h-2zM298 130h3v3h-3zM909 720h3v3h-3zM501 607h2v2h-2zM365 291h3v3h-3zM489 981h2v2h-2zM748 700h2v2h-2zM437 930h2v2h-2zM702 59h2v2h-2zM251 506h3v3h-3zM305 553h2v2h-2zM952 590h2v2h-2zM393 478h2v2h-2zM600 419h2v2h-2zM584 587h2v2h-2zM912 502h2v2h-2zM166 649h3v3h-3zM517 169h3v3h-3zM458 157h2v2h-2zM989 445h3v3h-3zM998 533h2v2h-2zM389 966h2v2h-2zM384 401h3v3h-3zM384 743h3v3h-3zM263 382h3v3h-3zM1011 955h2v2h-2zM975 855h2v2h-2zM598 35h3v3h-3zM950 671h3v3h-3zM1034 1027h3v3h-3zM869 422h2v2h-2zM771 647h3v3h-3zM861 471h3v3h-3zM633 610h3v3h-3zM822 511h2v2h-2zM1004 211h3v3h-3zM461 399h2v2h-2zM976 344h3v3h-3zM339 316h2v2h-2zM641 363h2v2h-2zM303 222h2v2h-2zM1038 678h2v2h-2zM146 752h2v2h-2zM839 996h2v2h-2zM959 680h2v2h-2zM438 420h2v2h-2zM517 979h2v2h-2zM343 252h3v3h-3zM505 70h3v3h-3zM292 405h2v2h-2zM1004 544h3v3h-3zM538 1016h2v2h-2zM883 598h2v2h-2zM970 500h2v2h-2zM395 918h2v2h-2zM998 640h3v3h-3zM353 423h3v3h-3zM494 651h3v3h-3zM435 265h2v2h-2zM634 26h2v2h-2zM1025 574h2v2h-2zM596 230h3v3h-3zM161 549h3v3h-3zM796 486h2v2h-2zM452 519h2v2h-2zM588 232h2v2h-2zM824 970h3v3h-3zM482 33h2v2h-2zM875 443h2v2h-2zM100 456h3v3h-3zM745 322h2v2h-2zM493 313h3v3h-3zM728 456h2v2h-2zM589 848h2v2h-2zM281 230h3v3h-3zM551 124h3v3h-3zM501 900h3v3h-3zM321 198h2v2h-2zM523 681h3v3h-3zM472 131h2v2h-2zM347 512h2v2h-2zM704 457h2v2h-2zM473 449h2v2h-2zM414 103h2v2h-2zM445 849h2v2h-2zM445 1015h2v2h-2zM671 45h2v2h-2zM877 512h2v2h-2zM233 396h2v2h-2zM576 238h2v2h-2zM977 79h2v2h-2zM602 977h2v2h-2zM874 349h2v2h-2zM689 49h3v3h-3zM206 208h2v2h-2zM728 1022h3v3h-3zM407 107h2v2h-2zM568 97h2v2h-2zM861 1040h2v2h-2zM378 617h3v3h-3zM1008 890h3v3h-3zM633 339h3v3h-3zM873 642h2v2h-2zM979 686h2v2h-2zM587 338h2v2h-2zM710 54h2v2h-2zM173 800h3v3h-3zM445 968h2v2h-2zM620 1040h2v2h-2zM881 532h2v2h-2zM691 1040h3v3h-3zM323 35h3v3h-3zM546 503h3v3h-3zM231 188h2v2h-2zM631 949h3v3h-3zM658 11h3v3h-3zM701 460h2v2h-2zM717 404h3v3h-3zM640 95h2v2h-2zM333 142h2v2h-2zM603 538h3v3h-3zM392 365h3v3h-3zM622 113h2v2h-2zM757 411h3v3h-3zM469 506h2v2h-2zM956 611h2v2h-2zM432 196h2v2h-2zM419 984h2v2h-2zM665 82h2v2h-2zM359 342h2v2h-2zM621 183h2v2h-2zM296 903h2v2h-2zM916 453h2v2h-2zM326 895h2v2h-2zM570 407h2v2h-2zM193 309h2v2h-2zM860 721h2v2h-2zM792 306h2v2h-2zM625 985h2v2h-2zM896 884h2v2h-2zM695 988h2v2h-2zM522 962h3v3h-3zM465 32h3v3h-3zM887 973h2v2h-2zM326 378h2v2h-2zM918 991h2v2h-2zM882 1027h2v2h-2zM254 354h2v2h-2zM755 589h2v2h-2zM649 333h2v2h-2zM444 350h3v3h-3zM677 538h3v3h-3zM1007 751h3v3h-3zM971 165h3v3h-3zM871 341h2v2h-2zM10 188h3v3h-3zM838 1016h2v2h-2zM590 906h2v2h-2zM123 441h2v2h-2zM672 211h2v2h-2zM953 583h2v2h-2zM999 345h2v2h-2zM593 676h3v3h-3zM642 205h2v2h-2zM970 712h2v2h-2zM789 1011h2v2h-2zM369 1028h2v2h-2zM717 266h3v3h-3zM652 412h2v2h-2zM1 414h3v3h-3zM330 276h2v2h-2zM461 459h2v2h-2zM323 943h3v3h-3zM111 141h2v2h-2zM1033 1021h2v2h-2zM512 615h2v2h-2zM529 267h3v3h-3zM924 392h3v3h-3zM271 1037h2v2h-2zM863 497h2v2h-2zM419 1026h3v3h-3zM435 1041h2v2h-2zM364 833h3v3h-3zM619 965h2v2h-2zM786 45h3v3h-3zM589 322h3v3h-3zM456 141h2v2h-2zM57 1014h2v2h-2zM660 1025h2v2h-2zM407 372h2v2h-2zM644 71h3v3h-3zM169 982h2v2h-2zM305 1020h2v2h-2zM680 293h3v3h-3zM264 624h2v2h-2zM932 532h3v3h-3zM221 249h2v2h-2zM1038 520h2v2h-2zM472 369h2v2h-2zM368 942h2v2h-2zM885 912h2v2h-2zM893 998h2v2h-2zM274 29h2v2h-2zM288 366h3v3h-3zM103 940h2v2h-2zM839 34h3v3h-3zM602 240h3v3h-3zM524 567h2v2h-2zM583 555h3v3h-3zM490 209h3v3h-3zM960 553h2v2h-2zM882 691h2v2h-2zM809 619h2v2h-2zM528 493h3v3h-3zM462 1016h2v2h-2zM856 553h2v2h-2zM482 79h3v3h-3zM524 29h3v3h-3zM452 690h2v2h-2zM386 55h3v3h-3zM655 37h2v2h-2zM326 483h3v3h-3zM1020 973h2v2h-2zM1040 196h2v2h-2zM807 335h2v2h-2zM335 685h2v2h-2zM307 36h2v2h-2zM449 294h2v2h-2z"/><g filter="url(#b2)"><path fill="rgb(110,110,110)" d="M631 42h3v4h-3zM543 371h4v3h-4zM793 442h4v4h-4zM706 533h4v4h-4zM223 179h5v3h-5zM1006 446h5v4h-5zM819 102h5v3h-5zM815 7h4v4h-4zM625 382h4v4h-4zM849 119h4v4h-4zM453 39h3v3h-3zM357 133h5v3h-5zM684 1029h4v4h-4zM655 883h4v3h-4zM404 33h3v4h-3zM905 357h4v4h-4zM374 531h4v4h-4zM489 925h4v4h-4zM709 465h3v3h-3zM912 543h4v4h-4zM851 505h4v4h-4zM959 95h4v4h-4zM470 1026h4v4h-4zM429 47h3v4h-3zM715 206h4v3h-4zM802 969h4v4h-4zM998 494h5v4h-5zM369 187h5v4h-5zM968 499h3v4h-3zM189 183h5v3h-5zM673 495h4v4h-4zM705 1012h4v4h-4zM876 517h3v4h-3zM88 356h5v4h-5zM693 712h3v3h-3zM67 453h3v3h-3zM894 570h5v4h-5zM831 992h3v4h-3zM690 465h5v3h-5zM507 345h3v4h-3zM94 464h5v4h-5zM829 999h4v4h-4zM512 656h3v3h-3zM332 31h4v4h-4zM1041 126h3v4h-3zM463 169h3v4h-3zM291 408h5v3h-5zM676 519h3v4h-3zM896 327h4v4h-4zM725 494h5v3h-5zM179 188h4v3h-4zM661 639h5v4h-5zM994 260h5v4h-5zM425 887h4v3h-4zM568 55h4v3h-4zM426 528h4v4h-4z"/><path fill="rgb(170,170,170)" d="M683 477h3v4h-3zM435 908h5v4h-5zM935 550h4v4h-4zM744 477h3v4h-3zM237 369h4v4h-4zM376 888h3v4h-3zM874 516h4v3h-4zM703 1038h4v3h-4zM387 300h5v4h-5zM596 946h5v4h-5zM629 427h5v3h-5zM456 166h4v4h-4zM420 1017h5v4h-5zM526 916h5v3h-5zM176 265h3v4h-3zM457 672h3v4h-3zM245 1018h5v3h-5zM345 534h3v4h-3zM387 327h4v4h-4zM943 446h4v4h-4zM461 431h3v4h-3zM524 226h3v4h-3zM783 544h3v4h-3zM274 43h4v3h-4zM293 43h4v4h-4zM976 1037h5v3h-5zM547 174h4v4h-4zM1031 950h3v3h-3zM764 408h3v3h-3zM550 579h4v3h-4zM323 1024h4v3h-4zM936 1002h4v4h-4zM899 416h4v4h-4zM292 85h5v4h-5zM516 921h4v4h-4zM575 887h5v4h-5zM716 450h3v4h-3zM621 352h4v3h-4zM947 514h4v3h-4zM94 284h4v4h-4zM408 898h4v3h-4zM870 1022h5v4h-5zM861 494h4v4h-4zM463 980h5v4h-5zM423 195h4v3h-4zM722 487h4v3h-4zM373 162h5v4h-5zM687 585h3v4h-3zM564 68h4v4h-4zM428 422h5v4h-5zM342 499h3v3h-3zM870 537h4v4h-4zM292 332h4v3h-4zM701 675h4v4h-4zM276 363h4v4h-4zM627 263h4v3h-4zM660 407h5v4h-5zM424 923h5v4h-5zM636 464h4v4h-4z"/><path fill="rgb(200,200,200)" d="M552 379h4v4h-4zM756 907h3v3h-3zM722 526h5v4h-5zM270 537h5v4h-5zM590 1028h4v3h-4zM676 518h4v3h-4zM896 535h4v4h-4zM495 176h3v4h-3zM445 100h3v3h-3zM314 984h5v4h-5zM371 182h3v3h-3zM464 991h5v4h-5zM532 375h4v4h-4zM430 452h3v3h-3zM344 206h4v4h-4zM906 513h4v4h-4zM880 531h4v4h-4zM594 553h3v4h-3zM759 1034h5v4h-5zM918 672h5v4h-5zM612 958h4v4h-4zM305 501h3v3h-3zM502 980h5v4h-5zM549 373h4v4h-4zM458 421h5v4h-5zM989 555h4v4h-4zM337 112h5v3h-5zM314 939h4v3h-4zM413 448h4v4h-4zM426 160h4v4h-4zM532 277h5v4h-5zM314 986h3v4h-3zM255 1032h4v3h-4zM893 287h4v4h-4zM336 582h3v3h-3zM830 436h3v4h-3zM612 971h5v4h-5zM355 582h3v4h-3zM867 492h4v3h-4zM600 1034h4v3h-4zM456 893h3v4h-3zM1028 906h4v3h-4zM413 1020h4v3h-4zM729 522h4v3h-4zM676 999h4v3h-4zM302 438h4v4h-4zM188 214h4v3h-4zM506 897h4v4h-4zM788 1041h3v3h-3zM940 532h3v4h-3zM508 107h4v4h-4zM642 145h5v4h-5zM999 352h4v4h-4zM356 479h4v4h-4zM363 171h3v4h-3zM488 377h3v4h-3zM468 990h4v4h-4z"/><path fill="rgb(230,230,230)" d="M964 791h5v3h-5zM283 236h4v3h-4zM548 1021h4v3h-4zM729 589h5v3h-5zM922 657h4v4h-4zM304 162h5v4h-5zM730 428h3v4h-3zM932 967h3v3h-3zM692 990h3v4h-3zM1018 366h3v4h-3zM299 533h5v4h-5zM376 225h4v3h-4zM595 505h4v4h-4zM637 390h5v4h-5zM965 672h4v3h-4zM517 896h3v3h-3zM611 1025h3v3h-3zM260 385h4v3h-4zM933 418h4v4h-4zM965 898h3v4h-3zM344 160h3v4h-3zM471 231h4v3h-4zM361 176h5v4h-5zM458 707h4v4h-4zM960 417h5v4h-5zM457 201h3v3h-3zM220 264h4v4h-4zM379 289h4v4h-4zM557 13h4v3h-4zM294 40h4v4h-4zM581 221h5v4h-5zM911 983h4v3h-4zM856 354h3v3h-3zM756 442h5v3h-5zM442 998h4v3h-4zM973 135h3v4h-3zM917 459h3v3h-3zM193 359h4v3h-4zM664 248h5v3h-5zM475 718h4v3h-4zM299 239h5v4h-5zM718 438h4v3h-4zM460 366h3v3h-3zM205 396h4v4h-4zM641 175h5v4h-5zM616 35h4v3h-4zM846 249h4v4h-4zM553 966h5v4h-5z"/><path fill="rgb(140,140,140)" d="M448 943h4v3h-4zM674 22h3v4h-3zM531 192h5v4h-5zM637 508h3v3h-3zM372 159h5v3h-5zM1002 991h5v4h-5zM509 579h5v4h-5zM451 312h4v4h-4zM295 88h5v4h-5zM711 575h5v4h-5zM660 149h4v3h-4zM959 658h5v4h-5zM542 257h5v4h-5zM431 344h4v4h-4zM333 162h4v4h-4zM193 96h4v4h-4zM960 45h5v3h-5zM711 48h5v4h-5zM555 41h4v4h-4zM594 536h3v3h-3zM450 336h3v3h-3zM871 543h3v3h-3zM757 486h4v4h-4zM255 315h4v4h-4zM280 990h3v4h-3zM920 611h3v4h-3zM290 934h3v4h-3zM388 215h4v4h-4zM386 155h4v4h-4zM244 150h3v4h-3zM1008 200h4v4h-4zM624 1031h5v4h-5zM666 281h3v4h-3zM177 287h4v4h-4zM713 960h4v4h-4zM591 990h3v4h-3zM469 519h4v4h-4zM1039 561h4v4h-4zM437 941h3v4h-3zM559 684h3v3h-3zM458 256h4v3h-4zM310 493h4v4h-4zM900 912h5v4h-5zM973 606h5v3h-5zM725 29h5v4h-5zM1032 549h3v4h-3zM339 79h5v4h-5zM977 218h3v4h-3zM752 943h4v4h-4zM405 923h3v4h-3zM506 435h5v4h-5zM684 1029h4v4h-4zM556 625h5v4h-5zM364 1034h4v4h-4zM633 430h4v3h-4zM248 307h5v4h-5zM1035 509h5v4h-5zM252 537h4v4h-4zM378 281h3v3h-3zM405 133h5v4h-5zM586 955h5v4h-5zM775 517h4v4h-4zM526 219h3v4h-3zM1004 134h3v3h-3zM883 432h4v3h-4zM582 892h4v4h-4zM768 542h5v4h-5zM437 327h4v3h-4z"/></g><g filter="url(#b2)" fill="none" stroke-linecap="round"><path d="M639,327 Q689,288 727,241" stroke="rgb(40,40,40)" stroke-width="2"/><path d="M333,207 Q314,135 258,97" stroke="rgb(52,52,52)" stroke-width="1.6"/><path d="M390,579 Q414,537 473,543" stroke="rgb(34,34,34)" stroke-width="2"/><path d="M291,929 Q315,991 325,1016" stroke="rgb(52,52,52)" stroke-width="2"/><path d="M629,991 Q629,1056 611,1143" stroke="rgb(46,46,46)" stroke-width="2"/><path d="M306,577 Q387,571 455,581" stroke="rgb(52,52,52)" stroke-width="2"/><path d="M942,1027 Q913,1044 889,1009" stroke="rgb(52,52,52)" stroke-width="2"/><path d="M769,498 Q766,437 780,360" stroke="rgb(46,46,46)" stroke-width="1.6"/><path d="M491,928 Q486,965 508,1061" stroke="rgb(46,46,46)" stroke-width="2"/><path d="M555,1042 Q527,1073 486,1100" stroke="rgb(34,34,34)" stroke-width="2.4"/><path d="M481,215 Q488,224 553,187" stroke="rgb(46,46,46)" stroke-width="2"/><path d="M818,285 Q803,308 749,322" stroke="rgb(52,52,52)" stroke-width="2"/><path d="M815,962 Q818,908 816,829" stroke="rgb(46,46,46)" stroke-width="2"/><path d="M525,429 Q474,466 452,539" stroke="rgb(40,40,40)" stroke-width="2.4"/><path d="M1008,460 Q1025,397 1064,348" stroke="rgb(52,52,52)" stroke-width="1.6"/><path d="M395,426 Q364,442 317,498" stroke="rgb(52,52,52)" stroke-width="1.6"/><path d="M973,701 Q912,735 875,799" stroke="rgb(40,40,40)" stroke-width="1.6"/><path d="M953,633 Q959,665 988,678" stroke="rgb(40,40,40)" stroke-width="2"/><path d="M481,980 Q482,966 424,917" stroke="rgb(34,34,34)" stroke-width="2"/><path d="M647,133 Q712,159 788,167" stroke="rgb(46,46,46)" stroke-width="2"/><path d="M439,219 Q467,262 480,261" stroke="rgb(34,34,34)" stroke-width="2"/><path d="M827,407 Q872,402 903,428" stroke="rgb(34,34,34)" stroke-width="2"/><path d="M165,450 Q233,506 258,574" stroke="rgb(46,46,46)" stroke-width="1.6"/><path d="M954,149 Q968,104 1021,93" stroke="rgb(34,34,34)" stroke-width="1.6"/><path d="M403,932 Q452,836 477,799" stroke="rgb(52,52,52)" stroke-width="2"/><path d="M653,497 Q726,487 776,432" stroke="rgb(46,46,46)" stroke-width="1.6"/><path d="M364,1039 Q355,1068 307,1073" stroke="rgb(34,34,34)" stroke-width="2.4"/><path d="M302,76 Q318,116 373,112" stroke="rgb(52,52,52)" stroke-width="1.6"/><path d="M1022,464 Q1042,500 1068,490" stroke="rgb(34,34,34)" stroke-width="2.4"/><path d="M897,475 Q865,459 823,470" stroke="rgb(34,34,34)" stroke-width="2"/><path d="M228,197 Q261,203 322,210" stroke="rgb(46,46,46)" stroke-width="1.6"/><path d="M702,17 Q696,-40 732,-66" stroke="rgb(34,34,34)" stroke-width="1.6"/><path d="M602,585 Q562,594 510,619" stroke="rgb(52,52,52)" stroke-width="2.4"/><path d="M1009,565 Q1057,530 1078,534" stroke="rgb(40,40,40)" stroke-width="2.4"/><path d="M781,499 Q728,544 717,615" stroke="rgb(52,52,52)" stroke-width="2.4"/><path d="M861,559 Q825,542 797,500" stroke="rgb(34,34,34)" stroke-width="1.6"/><path d="M990,144 Q1058,116 1097,45" stroke="rgb(46,46,46)" stroke-width="2.4"/><path d="M961,448 Q903,493 873,484" stroke="rgb(34,34,34)" stroke-width="2"/><path d="M910,584 Q966,604 995,611" stroke="rgb(52,52,52)" stroke-width="2.4"/><path d="M548,479 Q509,529 507,631" stroke="rgb(52,52,52)" stroke-width="2.4"/><path d="M848,560 Q851,569 896,531" stroke="rgb(34,34,34)" stroke-width="2"/><path d="M140,321 Q176,254 200,216" stroke="rgb(46,46,46)" stroke-width="2"/><path d="M436,92 Q487,67 488,102" stroke="rgb(34,34,34)" stroke-width="2"/><path d="M199,190 Q221,207 205,263" stroke="rgb(52,52,52)" stroke-width="2"/><path d="M616,446 Q606,367 585,325" stroke="rgb(46,46,46)" stroke-width="2.4"/><path d="M273,32 Q231,-13 203,-32" stroke="rgb(46,46,46)" stroke-width="1.6"/><path d="M479,573 Q508,561 515,502" stroke="rgb(40,40,40)" stroke-width="2.4"/><path d="M278,326 Q247,368 169,440" stroke="rgb(46,46,46)" stroke-width="2.4"/><path d="M478,947 Q482,975 474,1015" stroke="rgb(34,34,34)" stroke-width="1.6"/><path d="M239,59 Q153,89 95,80" stroke="rgb(40,40,40)" stroke-width="2"/><path d="M261,226 Q186,208 106,228" stroke="rgb(46,46,46)" stroke-width="1.6"/><path d="M612,651 Q631,627 661,577" stroke="rgb(34,34,34)" stroke-width="2"/><path d="M671,1015 Q652,1030 585,1045" stroke="rgb(46,46,46)" stroke-width="2"/><path d="M774,496 Q818,520 899,519" stroke="rgb(34,34,34)" stroke-width="1.6"/><path d="M829,395 Q785,371 687,387" stroke="rgb(40,40,40)" stroke-width="2"/><path d="M905,521 Q911,511 954,556" stroke="rgb(34,34,34)" stroke-width="2"/><path d="M456,89 Q465,23 484,8" stroke="rgb(40,40,40)" stroke-width="2.4"/><path d="M447,36 Q513,51 589,97" stroke="rgb(34,34,34)" stroke-width="1.6"/><path d="M384,43 Q419,-32 445,-49" stroke="rgb(52,52,52)" stroke-width="2"/><path d="M418,995 Q378,1018 304,1002" stroke="rgb(34,34,34)" stroke-width="2"/><path d="M392,999 Q411,970 428,932" stroke="rgb(46,46,46)" stroke-width="1.6"/><path d="M907,527 Q880,469 864,468" stroke="rgb(34,34,34)" stroke-width="2.4"/><path d="M806,689 Q802,711 852,708" stroke="rgb(52,52,52)" stroke-width="2.4"/><path d="M401,981 Q406,1033 363,1047" stroke="rgb(52,52,52)" stroke-width="2.4"/><path d="M800,341 Q788,368 746,361" stroke="rgb(40,40,40)" stroke-width="2"/><path d="M927,555 Q978,588 1035,647" stroke="rgb(40,40,40)" stroke-width="2"/><path d="M313,268 Q293,289 329,325" stroke="rgb(40,40,40)" stroke-width="1.6"/><path d="M594,288 Q609,344 629,434" stroke="rgb(46,46,46)" stroke-width="1.6"/><path d="M959,660 Q903,651 855,600" stroke="rgb(52,52,52)" stroke-width="1.6"/><path d="M449,577 Q527,610 567,622" stroke="rgb(34,34,34)" stroke-width="2"/><path d="M735,335 Q768,398 786,422" stroke="rgb(40,40,40)" stroke-width="2"/><path d="M184,124 L172,72 L165,40" stroke="#4e4e4e" stroke-width="2.6"/><path d="M184,124 L136,104 L110,95" stroke="#4e4e4e" stroke-width="2.6"/><path d="M184,124 L150,190 L116,224 L95,250" stroke="#4e4e4e" stroke-width="2.6"/><path d="M184,124 L208,132 L260,160" stroke="#4e4e4e" stroke-width="2.6"/><path d="M280,164 L240,200 L200,260 L170,320" stroke="#4e4e4e" stroke-width="2.6"/><path d="M280,164 L330,190 L380,230" stroke="#4e4e4e" stroke-width="2.6"/><path d="M991,91 L917,91 L882,80" stroke="#4e4e4e" stroke-width="2.6"/><path d="M991,91 L922,150 L890,200" stroke="#4e4e4e" stroke-width="2.6"/><path d="M991,91 L967,166 L989,227 L1000,300" stroke="#4e4e4e" stroke-width="2.6"/><path d="M991,91 L1042,94" stroke="#4e4e4e" stroke-width="2.6"/><path d="M991,91 L1042,13" stroke="#4e4e4e" stroke-width="2.6"/><path d="M991,91 L1013,134" stroke="#4e4e4e" stroke-width="2.6"/><path d="M998,326 L935,337" stroke="#3c3c3c" stroke-width="2.4"/><path d="M998,326 L1042,316" stroke="#3c3c3c" stroke-width="2.4"/><path d="M112,533 L118,460 L126,375" stroke="#3c3c3c" stroke-width="2.4"/><path d="M126,554 L171,570" stroke="#3c3c3c" stroke-width="2.4"/><path d="M110,551 L80,520" stroke="#4e4e4e" stroke-width="2.6"/><path d="M610,495 L593,508 L569,533" stroke="#4e4e4e" stroke-width="2.6"/><path d="M989,591 L922,593 L855,599 L775,613" stroke="#4e4e4e" stroke-width="2.6"/><path d="M1000,348 L1005,375 L1042,412" stroke="#3c3c3c" stroke-width="2.4"/><path d="M1002,383 L957,420" stroke="#3c3c3c" stroke-width="2.4"/><path d="M756,439 L743,460 L735,492 L713,506" stroke="#4e4e4e" stroke-width="2.6"/><path d="M756,439 L775,455 L812,471 L855,508 L895,541" stroke="#4e4e4e" stroke-width="2.6"/><path d="M975,637 L957,696" stroke="#3c3c3c" stroke-width="2.4"/><path d="M959,751 L1000,760 L1042,770" stroke="#4e4e4e" stroke-width="2.6"/><path d="M959,751 L920,790" stroke="#4e4e4e" stroke-width="2.6"/><path d="M845,1011 L870,980 L890,960" stroke="#4e4e4e" stroke-width="2.6"/></g><g><radialGradient id="halo"><stop offset="0" stop-color="#aaa"/><stop offset="0.45" stop-color="#666" stop-opacity="0.6"/><stop offset="1" stop-color="#444" stop-opacity="0"/></radialGradient><radialGradient id="cg0"><stop offset="0" stop-color="rgb(250,250,250)"/><stop offset="0.7" stop-color="rgb(250,250,250)"/><stop offset="0.85" stop-color="rgb(250,250,250)" stop-opacity="0.55"/><stop offset="1" stop-color="rgb(250,250,250)" stop-opacity="0"/></radialGradient><circle cx="184" cy="124" r="37.4" fill="url(#halo)" opacity="0.50"/><ellipse cx="184" cy="124" rx="21.2" ry="22.5" fill="url(#cg0)"/><radialGradient id="cg1"><stop offset="0" stop-color="rgb(240,240,240)"/><stop offset="0.7" stop-color="rgb(240,240,240)"/><stop offset="0.85" stop-color="rgb(240,240,240)" stop-opacity="0.55"/><stop offset="1" stop-color="rgb(240,240,240)" stop-opacity="0"/></radialGradient><circle cx="280" cy="164" r="35.2" fill="url(#halo)" opacity="0.47"/><ellipse cx="280" cy="164" rx="20.0" ry="21.2" fill="url(#cg1)"/><radialGradient id="cg2"><stop offset="0" stop-color="rgb(220,220,220)"/><stop offset="0.7" stop-color="rgb(220,220,220)"/><stop offset="0.85" stop-color="rgb(220,220,220)" stop-opacity="0.55"/><stop offset="1" stop-color="rgb(220,220,220)" stop-opacity="0"/></radialGradient><circle cx="472" cy="46" r="26.4" fill="url(#halo)" opacity="0.40"/><ellipse cx="472" cy="46" rx="15.0" ry="15.9" fill="url(#cg2)"/><radialGradient id="cg3"><stop offset="0" stop-color="rgb(150,150,150)"/><stop offset="0.7" stop-color="rgb(150,150,150)"/><stop offset="0.85" stop-color="rgb(150,150,150)" stop-opacity="0.55"/><stop offset="1" stop-color="rgb(150,150,150)" stop-opacity="0"/></radialGradient><circle cx="428" cy="72" r="28.6" fill="url(#halo)" opacity="0.17"/><ellipse cx="428" cy="72" rx="16.2" ry="17.2" fill="url(#cg3)"/><radialGradient id="cg4"><stop offset="0" stop-color="rgb(230,230,230)"/><stop offset="0.7" stop-color="rgb(230,230,230)"/><stop offset="0.85" stop-color="rgb(230,230,230)" stop-opacity="0.55"/><stop offset="1" stop-color="rgb(230,230,230)" stop-opacity="0"/></radialGradient><ellipse cx="456" cy="60" rx="5.0" ry="5.3" fill="url(#cg4)"/><radialGradient id="cg5"><stop offset="0" stop-color="rgb(230,230,230)"/><stop offset="0.7" stop-color="rgb(230,230,230)"/><stop offset="0.85" stop-color="rgb(230,230,230)" stop-opacity="0.55"/><stop offset="1" stop-color="rgb(230,230,230)" stop-opacity="0"/></radialGradient><ellipse cx="466" cy="92" rx="5.0" ry="5.3" fill="url(#cg5)"/><radialGradient id="cg6"><stop offset="0" stop-color="rgb(82,82,82)"/><stop offset="0.55" stop-color="rgb(82,82,82)"/><stop offset="0.72" stop-color="rgb(150,150,150)"/><stop offset="0.85" stop-color="rgb(150,150,150)" stop-opacity="0.7"/><stop offset="1" stop-color="rgb(150,150,150)" stop-opacity="0"/></radialGradient><circle cx="434" cy="180" r="35.2" fill="url(#halo)" opacity="0.17"/><ellipse cx="434" cy="180" rx="20.0" ry="21.2" fill="url(#cg6)"/><radialGradient id="cg7"><stop offset="0" stop-color="rgb(250,250,250)"/><stop offset="0.7" stop-color="rgb(250,250,250)"/><stop offset="0.85" stop-color="rgb(250,250,250)" stop-opacity="0.55"/><stop offset="1" stop-color="rgb(250,250,250)" stop-opacity="0"/></radialGradient><ellipse cx="98" cy="242" rx="6.2" ry="6.6" fill="url(#cg7)"/><radialGradient id="cg8"><stop offset="0" stop-color="rgb(35,35,35)"/><stop offset="0.55" stop-color="rgb(35,35,35)"/><stop offset="0.72" stop-color="rgb(64,64,64)"/><stop offset="0.85" stop-color="rgb(64,64,64)" stop-opacity="0.7"/><stop offset="1" stop-color="rgb(64,64,64)" stop-opacity="0"/></radialGradient><ellipse cx="204" cy="222" rx="16.2" ry="17.2" fill="url(#cg8)"/><radialGradient id="cg9"><stop offset="0" stop-color="rgb(190,190,190)"/><stop offset="0.7" stop-color="rgb(190,190,190)"/><stop offset="0.85" stop-color="rgb(190,190,190)" stop-opacity="0.55"/><stop offset="1" stop-color="rgb(190,190,190)" stop-opacity="0"/></radialGradient><circle cx="224" cy="298" r="37.4" fill="url(#halo)" opacity="0.30"/><ellipse cx="224" cy="298" rx="21.2" ry="22.5" fill="url(#cg9)"/><radialGradient id="cg10"><stop offset="0" stop-color="rgb(94,94,94)"/><stop offset="0.55" stop-color="rgb(94,94,94)"/><stop offset="0.72" stop-color="rgb(170,170,170)"/><stop offset="0.85" stop-color="rgb(170,170,170)" stop-opacity="0.7"/><stop offset="1" stop-color="rgb(170,170,170)" stop-opacity="0"/></radialGradient><circle cx="56" cy="418" r="37.4" fill="url(#halo)" opacity="0.23"/><ellipse cx="56" cy="418" rx="21.2" ry="22.5" fill="url(#cg10)"/><radialGradient id="cg11"><stop offset="0" stop-color="rgb(72,72,72)"/><stop offset="0.55" stop-color="rgb(72,72,72)"/><stop offset="0.72" stop-color="rgb(130,130,130)"/><stop offset="0.85" stop-color="rgb(130,130,130)" stop-opacity="0.7"/><stop offset="1" stop-color="rgb(130,130,130)" stop-opacity="0"/></radialGradient><ellipse cx="332" cy="414" rx="18.8" ry="19.9" fill="url(#cg11)"/><radialGradient id="cg12"><stop offset="0" stop-color="rgb(72,72,72)"/><stop offset="0.55" stop-color="rgb(72,72,72)"/><stop offset="0.72" stop-color="rgb(130,130,130)"/><stop offset="0.85" stop-color="rgb(130,130,130)" stop-opacity="0.7"/><stop offset="1" stop-color="rgb(130,130,130)" stop-opacity="0"/></radialGradient><ellipse cx="230" cy="428" rx="18.8" ry="19.9" fill="url(#cg12)"/><radialGradient id="cg13"><stop offset="0" stop-color="rgb(40,40,40)"/><stop offset="0.55" stop-color="rgb(40,40,40)"/><stop offset="0.72" stop-color="rgb(72,72,72)"/><stop offset="0.85" stop-color="rgb(72,72,72)" stop-opacity="0.7"/><stop offset="1" stop-color="rgb(72,72,72)" stop-opacity="0"/></radialGradient><ellipse cx="362" cy="60" rx="20.0" ry="21.2" fill="url(#cg13)"/><radialGradient id="cg14"><stop offset="0" stop-color="rgb(21,21,21)"/><stop offset="0.7" stop-color="rgb(21,21,21)"/><stop offset="0.85" stop-color="rgb(21,21,21)" stop-opacity="0.55"/><stop offset="1" stop-color="rgb(21,21,21)" stop-opacity="0"/></radialGradient><ellipse cx="16" cy="80" rx="25.0" ry="26.5" fill="url(#cg14)"/><radialGradient id="cg15"><stop offset="0" stop-color="rgb(21,21,21)"/><stop offset="0.7" stop-color="rgb(21,21,21)"/><stop offset="0.85" stop-color="rgb(21,21,21)" stop-opacity="0.55"/><stop offset="1" stop-color="rgb(21,21,21)" stop-opacity="0"/></radialGradient><ellipse cx="28" cy="160" rx="25.0" ry="26.5" fill="url(#cg15)"/><radialGradient id="cg16"><stop offset="0" stop-color="rgb(245,245,245)"/><stop offset="0.7" stop-color="rgb(245,245,245)"/><stop offset="0.85" stop-color="rgb(245,245,245)" stop-opacity="0.55"/><stop offset="1" stop-color="rgb(245,245,245)" stop-opacity="0"/></radialGradient><circle cx="993" cy="90" r="39.6" fill="url(#halo)" opacity="0.48"/><ellipse cx="993" cy="90" rx="22.5" ry="23.9" fill="url(#cg16)"/><radialGradient id="cg17"><stop offset="0" stop-color="rgb(190,190,190)"/><stop offset="0.7" stop-color="rgb(190,190,190)"/><stop offset="0.85" stop-color="rgb(190,190,190)" stop-opacity="0.55"/><stop offset="1" stop-color="rgb(190,190,190)" stop-opacity="0"/></radialGradient><circle cx="593" cy="196" r="33.0" fill="url(#halo)" opacity="0.30"/><ellipse cx="593" cy="196" rx="18.8" ry="19.9" fill="url(#cg17)"/><radialGradient id="cg18"><stop offset="0" stop-color="rgb(220,220,220)"/><stop offset="0.7" stop-color="rgb(220,220,220)"/><stop offset="0.85" stop-color="rgb(220,220,220)" stop-opacity="0.55"/><stop offset="1" stop-color="rgb(220,220,220)" stop-opacity="0"/></radialGradient><ellipse cx="633" cy="170" rx="6.2" ry="6.6" fill="url(#cg18)"/><radialGradient id="cg19"><stop offset="0" stop-color="rgb(150,150,150)"/><stop offset="0.7" stop-color="rgb(150,150,150)"/><stop offset="0.85" stop-color="rgb(150,150,150)" stop-opacity="0.55"/><stop offset="1" stop-color="rgb(150,150,150)" stop-opacity="0"/></radialGradient><circle cx="969" cy="280" r="33.0" fill="url(#halo)" opacity="0.17"/><ellipse cx="969" cy="280" rx="18.8" ry="19.9" fill="url(#cg19)"/><radialGradient id="cg20"><stop offset="0" stop-color="rgb(200,200,200)"/><stop offset="0.7" stop-color="rgb(200,200,200)"/><stop offset="0.85" stop-color="rgb(200,200,200)" stop-opacity="0.55"/><stop offset="1" stop-color="rgb(200,200,200)" stop-opacity="0"/></radialGradient><circle cx="999" cy="326" r="37.4" fill="url(#halo)" opacity="0.33"/><ellipse cx="999" cy="326" rx="21.2" ry="22.5" fill="url(#cg20)"/><radialGradient id="cg21"><stop offset="0" stop-color="rgb(105,105,105)"/><stop offset="0.55" stop-color="rgb(105,105,105)"/><stop offset="0.72" stop-color="rgb(190,190,190)"/><stop offset="0.85" stop-color="rgb(190,190,190)" stop-opacity="0.7"/><stop offset="1" stop-color="rgb(190,190,190)" stop-opacity="0"/></radialGradient><circle cx="833" cy="398" r="30.8" fill="url(#halo)" opacity="0.30"/><ellipse cx="833" cy="398" rx="17.5" ry="18.6" fill="url(#cg21)"/><radialGradient id="cg22"><stop offset="0" stop-color="rgb(220,220,220)"/><stop offset="0.7" stop-color="rgb(220,220,220)"/><stop offset="0.85" stop-color="rgb(220,220,220)" stop-opacity="0.55"/><stop offset="1" stop-color="rgb(220,220,220)" stop-opacity="0"/></radialGradient><circle cx="757" cy="438" r="37.4" fill="url(#halo)" opacity="0.40"/><ellipse cx="757" cy="438" rx="21.2" ry="22.5" fill="url(#cg22)"/><radialGradient id="cg23"><stop offset="0" stop-color="rgb(200,200,200)"/><stop offset="0.7" stop-color="rgb(200,200,200)"/><stop offset="0.85" stop-color="rgb(200,200,200)" stop-opacity="0.55"/><stop offset="1" stop-color="rgb(200,200,200)" stop-opacity="0"/></radialGradient><circle cx="649" cy="420" r="33.0" fill="url(#halo)" opacity="0.33"/><ellipse cx="649" cy="420" rx="18.8" ry="19.9" fill="url(#cg23)"/><radialGradient id="cg24"><stop offset="0" stop-color="rgb(94,94,94)"/><stop offset="0.55" stop-color="rgb(94,94,94)"/><stop offset="0.72" stop-color="rgb(170,170,170)"/><stop offset="0.85" stop-color="rgb(170,170,170)" stop-opacity="0.7"/><stop offset="1" stop-color="rgb(170,170,170)" stop-opacity="0"/></radialGradient><circle cx="647" cy="440" r="37.4" fill="url(#halo)" opacity="0.23"/><ellipse cx="647" cy="440" rx="21.2" ry="22.5" fill="url(#cg24)"/><radialGradient id="cg25"><stop offset="0" stop-color="rgb(230,230,230)"/><stop offset="0.7" stop-color="rgb(230,230,230)"/><stop offset="0.85" stop-color="rgb(230,230,230)" stop-opacity="0.55"/><stop offset="1" stop-color="rgb(230,230,230)" stop-opacity="0"/></radialGradient><circle cx="609" cy="494" r="37.4" fill="url(#halo)" opacity="0.43"/><ellipse cx="609" cy="494" rx="21.2" ry="22.5" fill="url(#cg25)"/><radialGradient id="cg26"><stop offset="0" stop-color="rgb(110,110,110)"/><stop offset="0.55" stop-color="rgb(110,110,110)"/><stop offset="0.72" stop-color="rgb(200,200,200)"/><stop offset="0.85" stop-color="rgb(200,200,200)" stop-opacity="0.7"/><stop offset="1" stop-color="rgb(200,200,200)" stop-opacity="0"/></radialGradient><circle cx="1029" cy="458" r="30.8" fill="url(#halo)" opacity="0.33"/><ellipse cx="1029" cy="458" rx="17.5" ry="18.6" fill="url(#cg26)"/><radialGradient id="cg27"><stop offset="0" stop-color="rgb(40,40,40)"/><stop offset="0.55" stop-color="rgb(40,40,40)"/><stop offset="0.72" stop-color="rgb(72,72,72)"/><stop offset="0.85" stop-color="rgb(72,72,72)" stop-opacity="0.7"/><stop offset="1" stop-color="rgb(72,72,72)" stop-opacity="0"/></radialGradient><ellipse cx="643" cy="312" rx="18.8" ry="19.9" fill="url(#cg27)"/><radialGradient id="cg28"><stop offset="0" stop-color="rgb(43,43,43)"/><stop offset="0.7" stop-color="rgb(43,43,43)"/><stop offset="0.85" stop-color="rgb(43,43,43)" stop-opacity="0.55"/><stop offset="1" stop-color="rgb(43,43,43)" stop-opacity="0"/></radialGradient><ellipse cx="743" cy="24" rx="18.8" ry="19.9" fill="url(#cg28)"/><radialGradient id="cg29"><stop offset="0" stop-color="rgb(250,250,250)"/><stop offset="0.7" stop-color="rgb(250,250,250)"/><stop offset="0.85" stop-color="rgb(250,250,250)" stop-opacity="0.55"/><stop offset="1" stop-color="rgb(250,250,250)" stop-opacity="0"/></radialGradient><circle cx="110" cy="551" r="37.4" fill="url(#halo)" opacity="0.50"/><ellipse cx="110" cy="551" rx="21.2" ry="22.5" fill="url(#cg29)"/><radialGradient id="cg30"><stop offset="0" stop-color="rgb(127,127,127)"/><stop offset="0.55" stop-color="rgb(127,127,127)"/><stop offset="0.72" stop-color="rgb(230,230,230)"/><stop offset="0.85" stop-color="rgb(230,230,230)" stop-opacity="0.7"/><stop offset="1" stop-color="rgb(230,230,230)" stop-opacity="0"/></radialGradient><circle cx="484" cy="615" r="33.0" fill="url(#halo)" opacity="0.43"/><ellipse cx="484" cy="615" rx="18.8" ry="19.9" fill="url(#cg30)"/><radialGradient id="cg31"><stop offset="0" stop-color="rgb(140,140,140)"/><stop offset="0.7" stop-color="rgb(140,140,140)"/><stop offset="0.85" stop-color="rgb(140,140,140)" stop-opacity="0.55"/><stop offset="1" stop-color="rgb(140,140,140)" stop-opacity="0"/></radialGradient><ellipse cx="380" cy="633" rx="20.0" ry="21.2" fill="url(#cg31)"/><radialGradient id="cg32"><stop offset="0" stop-color="rgb(245,245,245)"/><stop offset="0.7" stop-color="rgb(245,245,245)"/><stop offset="0.85" stop-color="rgb(245,245,245)" stop-opacity="0.55"/><stop offset="1" stop-color="rgb(245,245,245)" stop-opacity="0"/></radialGradient><circle cx="408" cy="737" r="35.2" fill="url(#halo)" opacity="0.48"/><ellipse cx="408" cy="737" rx="20.0" ry="21.2" fill="url(#cg32)"/><radialGradient id="cg33"><stop offset="0" stop-color="rgb(64,64,64)"/><stop offset="0.7" stop-color="rgb(64,64,64)"/><stop offset="0.85" stop-color="rgb(64,64,64)" stop-opacity="0.55"/><stop offset="1" stop-color="rgb(64,64,64)" stop-opacity="0"/></radialGradient><ellipse cx="496" cy="699" rx="18.8" ry="19.9" fill="url(#cg33)"/><radialGradient id="cg34"><stop offset="0" stop-color="rgb(57,57,57)"/><stop offset="0.7" stop-color="rgb(57,57,57)"/><stop offset="0.85" stop-color="rgb(57,57,57)" stop-opacity="0.55"/><stop offset="1" stop-color="rgb(57,57,57)" stop-opacity="0"/></radialGradient><ellipse cx="486" cy="741" rx="20.0" ry="21.2" fill="url(#cg34)"/><radialGradient id="cg35"><stop offset="0" stop-color="rgb(43,43,43)"/><stop offset="0.7" stop-color="rgb(43,43,43)"/><stop offset="0.85" stop-color="rgb(43,43,43)" stop-opacity="0.55"/><stop offset="1" stop-color="rgb(43,43,43)" stop-opacity="0"/></radialGradient><ellipse cx="418" cy="687" rx="17.5" ry="18.6" fill="url(#cg35)"/><radialGradient id="cg36"><stop offset="0" stop-color="rgb(36,36,36)"/><stop offset="0.7" stop-color="rgb(36,36,36)"/><stop offset="0.85" stop-color="rgb(36,36,36)" stop-opacity="0.55"/><stop offset="1" stop-color="rgb(36,36,36)" stop-opacity="0"/></radialGradient><ellipse cx="196" cy="623" rx="20.0" ry="21.2" fill="url(#cg36)"/><radialGradient id="cg37"><stop offset="0" stop-color="rgb(77,77,77)"/><stop offset="0.55" stop-color="rgb(77,77,77)"/><stop offset="0.72" stop-color="rgb(140,140,140)"/><stop offset="0.85" stop-color="rgb(140,140,140)" stop-opacity="0.7"/><stop offset="1" stop-color="rgb(140,140,140)" stop-opacity="0"/></radialGradient><ellipse cx="28" cy="803" rx="17.5" ry="18.6" fill="url(#cg37)"/><radialGradient id="cg38"><stop offset="0" stop-color="rgb(150,150,150)"/><stop offset="0.7" stop-color="rgb(150,150,150)"/><stop offset="0.85" stop-color="rgb(150,150,150)" stop-opacity="0.55"/><stop offset="1" stop-color="rgb(150,150,150)" stop-opacity="0"/></radialGradient><circle cx="38" cy="887" r="35.2" fill="url(#halo)" opacity="0.17"/><ellipse cx="38" cy="887" rx="20.0" ry="21.2" fill="url(#cg38)"/><radialGradient id="cg39"><stop offset="0" stop-color="rgb(72,72,72)"/><stop offset="0.7" stop-color="rgb(72,72,72)"/><stop offset="0.85" stop-color="rgb(72,72,72)" stop-opacity="0.55"/><stop offset="1" stop-color="rgb(72,72,72)" stop-opacity="0"/></radialGradient><ellipse cx="20" cy="883" rx="17.5" ry="18.6" fill="url(#cg39)"/><radialGradient id="cg40"><stop offset="0" stop-color="rgb(50,50,50)"/><stop offset="0.7" stop-color="rgb(50,50,50)"/><stop offset="0.85" stop-color="rgb(50,50,50)" stop-opacity="0.55"/><stop offset="1" stop-color="rgb(50,50,50)" stop-opacity="0"/></radialGradient><ellipse cx="68" cy="975" rx="21.2" ry="22.5" fill="url(#cg40)"/><radialGradient id="cg41"><stop offset="0" stop-color="rgb(23,23,23)"/><stop offset="0.7" stop-color="rgb(23,23,23)"/><stop offset="0.85" stop-color="rgb(23,23,23)" stop-opacity="0.55"/><stop offset="1" stop-color="rgb(23,23,23)" stop-opacity="0"/></radialGradient><ellipse cx="236" cy="769" rx="31.2" ry="33.1" fill="url(#cg41)"/><radialGradient id="cg42"><stop offset="0" stop-color="rgb(77,77,77)"/><stop offset="0.55" stop-color="rgb(77,77,77)"/><stop offset="0.72" stop-color="rgb(140,140,140)"/><stop offset="0.85" stop-color="rgb(140,140,140)" stop-opacity="0.7"/><stop offset="1" stop-color="rgb(140,140,140)" stop-opacity="0"/></radialGradient><ellipse cx="334" cy="939" rx="18.8" ry="19.9" fill="url(#cg42)"/><radialGradient id="cg43"><stop offset="0" stop-color="rgb(245,245,245)"/><stop offset="0.7" stop-color="rgb(245,245,245)"/><stop offset="0.85" stop-color="rgb(245,245,245)" stop-opacity="0.55"/><stop offset="1" stop-color="rgb(245,245,245)" stop-opacity="0"/></radialGradient><circle cx="334" cy="1027" r="35.2" fill="url(#halo)" opacity="0.48"/><ellipse cx="334" cy="1027" rx="20.0" ry="21.2" fill="url(#cg43)"/><radialGradient id="cg44"><stop offset="0" stop-color="rgb(110,110,110)"/><stop offset="0.55" stop-color="rgb(110,110,110)"/><stop offset="0.72" stop-color="rgb(200,200,200)"/><stop offset="0.85" stop-color="rgb(200,200,200)" stop-opacity="0.7"/><stop offset="1" stop-color="rgb(200,200,200)" stop-opacity="0"/></radialGradient><circle cx="506" cy="967" r="33.0" fill="url(#halo)" opacity="0.33"/><ellipse cx="506" cy="967" rx="18.8" ry="19.9" fill="url(#cg44)"/><radialGradient id="cg45"><stop offset="0" stop-color="rgb(28,28,28)"/><stop offset="0.7" stop-color="rgb(28,28,28)"/><stop offset="0.85" stop-color="rgb(28,28,28)" stop-opacity="0.55"/><stop offset="1" stop-color="rgb(28,28,28)" stop-opacity="0"/></radialGradient><ellipse cx="168" cy="849" rx="18.8" ry="19.9" fill="url(#cg45)"/><radialGradient id="cg46"><stop offset="0" stop-color="rgb(250,250,250)"/><stop offset="0.7" stop-color="rgb(250,250,250)"/><stop offset="0.85" stop-color="rgb(250,250,250)" stop-opacity="0.55"/><stop offset="1" stop-color="rgb(250,250,250)" stop-opacity="0"/></radialGradient><circle cx="989" cy="593" r="39.6" fill="url(#halo)" opacity="0.50"/><ellipse cx="989" cy="593" rx="22.5" ry="23.9" fill="url(#cg46)"/><radialGradient id="cg47"><stop offset="0" stop-color="rgb(210,210,210)"/><stop offset="0.7" stop-color="rgb(210,210,210)"/><stop offset="0.85" stop-color="rgb(210,210,210)" stop-opacity="0.55"/><stop offset="1" stop-color="rgb(210,210,210)" stop-opacity="0"/></radialGradient><circle cx="993" cy="621" r="33.0" fill="url(#halo)" opacity="0.37"/><ellipse cx="993" cy="621" rx="18.8" ry="19.9" fill="url(#cg47)"/><radialGradient id="cg48"><stop offset="0" stop-color="rgb(230,230,230)"/><stop offset="0.7" stop-color="rgb(230,230,230)"/><stop offset="0.85" stop-color="rgb(230,230,230)" stop-opacity="0.55"/><stop offset="1" stop-color="rgb(230,230,230)" stop-opacity="0"/></radialGradient><circle cx="1031" cy="557" r="28.6" fill="url(#halo)" opacity="0.43"/><ellipse cx="1031" cy="557" rx="16.2" ry="17.2" fill="url(#cg48)"/><radialGradient id="cg49"><stop offset="0" stop-color="rgb(120,120,120)"/><stop offset="0.7" stop-color="rgb(120,120,120)"/><stop offset="0.85" stop-color="rgb(120,120,120)" stop-opacity="0.55"/><stop offset="1" stop-color="rgb(120,120,120)" stop-opacity="0"/></radialGradient><ellipse cx="961" cy="543" rx="16.2" ry="17.2" fill="url(#cg49)"/><radialGradient id="cg50"><stop offset="0" stop-color="rgb(235,235,235)"/><stop offset="0.7" stop-color="rgb(235,235,235)"/><stop offset="0.85" stop-color="rgb(235,235,235)" stop-opacity="0.55"/><stop offset="1" stop-color="rgb(235,235,235)" stop-opacity="0"/></radialGradient><circle cx="959" cy="751" r="37.4" fill="url(#halo)" opacity="0.45"/><ellipse cx="959" cy="751" rx="21.2" ry="22.5" fill="url(#cg50)"/><radialGradient id="cg51"><stop offset="0" stop-color="rgb(180,180,180)"/><stop offset="0.7" stop-color="rgb(180,180,180)"/><stop offset="0.85" stop-color="rgb(180,180,180)" stop-opacity="0.55"/><stop offset="1" stop-color="rgb(180,180,180)" stop-opacity="0"/></radialGradient><circle cx="719" cy="615" r="33.0" fill="url(#halo)" opacity="0.27"/><ellipse cx="719" cy="615" rx="18.8" ry="19.9" fill="url(#cg51)"/><radialGradient id="cg52"><stop offset="0" stop-color="rgb(50,50,50)"/><stop offset="0.7" stop-color="rgb(50,50,50)"/><stop offset="0.85" stop-color="rgb(50,50,50)" stop-opacity="0.55"/><stop offset="1" stop-color="rgb(50,50,50)" stop-opacity="0"/></radialGradient><ellipse cx="657" cy="671" rx="17.5" ry="18.6" fill="url(#cg52)"/><radialGradient id="cg53"><stop offset="0" stop-color="rgb(79,79,79)"/><stop offset="0.7" stop-color="rgb(79,79,79)"/><stop offset="0.85" stop-color="rgb(79,79,79)" stop-opacity="0.55"/><stop offset="1" stop-color="rgb(79,79,79)" stop-opacity="0"/></radialGradient><ellipse cx="857" cy="713" rx="16.2" ry="17.2" fill="url(#cg53)"/><radialGradient id="cg54"><stop offset="0" stop-color="rgb(130,130,130)"/><stop offset="0.7" stop-color="rgb(130,130,130)"/><stop offset="0.85" stop-color="rgb(130,130,130)" stop-opacity="0.55"/><stop offset="1" stop-color="rgb(130,130,130)" stop-opacity="0"/></radialGradient><ellipse cx="851" cy="931" rx="21.2" ry="22.5" fill="url(#cg54)"/><radialGradient id="cg55"><stop offset="0" stop-color="rgb(79,79,79)"/><stop offset="0.7" stop-color="rgb(79,79,79)"/><stop offset="0.85" stop-color="rgb(79,79,79)" stop-opacity="0.55"/><stop offset="1" stop-color="rgb(79,79,79)" stop-opacity="0"/></radialGradient><ellipse cx="1005" cy="921" rx="20.0" ry="21.2" fill="url(#cg55)"/><radialGradient id="cg56"><stop offset="0" stop-color="rgb(230,230,230)"/><stop offset="0.7" stop-color="rgb(230,230,230)"/><stop offset="0.85" stop-color="rgb(230,230,230)" stop-opacity="0.55"/><stop offset="1" stop-color="rgb(230,230,230)" stop-opacity="0"/></radialGradient><circle cx="845" cy="1011" r="37.4" fill="url(#halo)" opacity="0.43"/><ellipse cx="845" cy="1011" rx="21.2" ry="22.5" fill="url(#cg56)"/><radialGradient id="cg57"><stop offset="0" stop-color="rgb(88,88,88)"/><stop offset="0.55" stop-color="rgb(88,88,88)"/><stop offset="0.72" stop-color="rgb(160,160,160)"/><stop offset="0.85" stop-color="rgb(160,160,160)" stop-opacity="0.7"/><stop offset="1" stop-color="rgb(160,160,160)" stop-opacity="0"/></radialGradient><circle cx="885" cy="1007" r="33.0" fill="url(#halo)" opacity="0.20"/><ellipse cx="885" cy="1007" rx="18.8" ry="19.9" fill="url(#cg57)"/><radialGradient id="cg58"><stop offset="0" stop-color="rgb(210,210,210)"/><stop offset="0.7" stop-color="rgb(210,210,210)"/><stop offset="0.85" stop-color="rgb(210,210,210)" stop-opacity="0.55"/><stop offset="1" stop-color="rgb(210,210,210)" stop-opacity="0"/></radialGradient><circle cx="763" cy="1023" r="35.2" fill="url(#halo)" opacity="0.37"/><ellipse cx="763" cy="1023" rx="20.0" ry="21.2" fill="url(#cg58)"/><radialGradient id="cg59"><stop offset="0" stop-color="rgb(230,230,230)"/><stop offset="0.7" stop-color="rgb(230,230,230)"/><stop offset="0.85" stop-color="rgb(230,230,230)" stop-opacity="0.55"/><stop offset="1" stop-color="rgb(230,230,230)" stop-opacity="0"/></radialGradient><circle cx="631" cy="1027" r="37.4" fill="url(#halo)" opacity="0.43"/><ellipse cx="631" cy="1027" rx="21.2" ry="22.5" fill="url(#cg59)"/><radialGradient id="cg60"><stop offset="0" stop-color="rgb(230,230,230)"/><stop offset="0.7" stop-color="rgb(230,230,230)"/><stop offset="0.85" stop-color="rgb(230,230,230)" stop-opacity="0.55"/><stop offset="1" stop-color="rgb(230,230,230)" stop-opacity="0"/></radialGradient><circle cx="545" cy="1031" r="39.6" fill="url(#halo)" opacity="0.43"/><ellipse cx="545" cy="1031" rx="22.5" ry="23.9" fill="url(#cg60)"/><radialGradient id="cg61"><stop offset="0" stop-color="rgb(35,35,35)"/><stop offset="0.55" stop-color="rgb(35,35,35)"/><stop offset="0.72" stop-color="rgb(64,64,64)"/><stop offset="0.85" stop-color="rgb(64,64,64)" stop-opacity="0.7"/><stop offset="1" stop-color="rgb(64,64,64)" stop-opacity="0"/></radialGradient><ellipse cx="1001" cy="1017" rx="18.8" ry="19.9" fill="url(#cg61)"/><radialGradient id="cg62"><stop offset="0" stop-color="rgb(57,57,57)"/><stop offset="0.7" stop-color="rgb(57,57,57)"/><stop offset="0.85" stop-color="rgb(57,57,57)" stop-opacity="0.55"/><stop offset="1" stop-color="rgb(57,57,57)" stop-opacity="0"/></radialGradient><ellipse cx="823" cy="139" rx="12.5" ry="13.2" fill="url(#cg62)"/><radialGradient id="cg63"><stop offset="0" stop-color="rgb(64,64,64)"/><stop offset="0.7" stop-color="rgb(64,64,64)"/><stop offset="0.85" stop-color="rgb(64,64,64)" stop-opacity="0.55"/><stop offset="1" stop-color="rgb(64,64,64)" stop-opacity="0"/></radialGradient><ellipse cx="943" cy="404" rx="15.0" ry="15.9" fill="url(#cg63)"/><radialGradient id="cg64"><stop offset="0" stop-color="rgb(64,64,64)"/><stop offset="0.7" stop-color="rgb(64,64,64)"/><stop offset="0.85" stop-color="rgb(64,64,64)" stop-opacity="0.55"/><stop offset="1" stop-color="rgb(64,64,64)" stop-opacity="0"/></radialGradient><ellipse cx="223" cy="511" rx="12.5" ry="13.2" fill="url(#cg64)"/><radialGradient id="cg65"><stop offset="0" stop-color="rgb(20,20,20)"/><stop offset="0.55" stop-color="rgb(20,20,20)"/><stop offset="0.72" stop-color="rgb(36,36,36)"/><stop offset="0.85" stop-color="rgb(36,36,36)" stop-opacity="0.7"/><stop offset="1" stop-color="rgb(36,36,36)" stop-opacity="0"/></radialGradient><ellipse cx="454" cy="811" rx="17.5" ry="18.6" fill="url(#cg65)"/><radialGradient id="cg66"><stop offset="0" stop-color="rgb(57,57,57)"/><stop offset="0.7" stop-color="rgb(57,57,57)"/><stop offset="0.85" stop-color="rgb(57,57,57)" stop-opacity="0.55"/><stop offset="1" stop-color="rgb(57,57,57)" stop-opacity="0"/></radialGradient><ellipse cx="973" cy="720" rx="15.0" ry="15.9" fill="url(#cg66)"/><radialGradient id="cg67"><stop offset="0" stop-color="rgb(240,240,240)"/><stop offset="0.7" stop-color="rgb(240,240,240)"/><stop offset="0.85" stop-color="rgb(240,240,240)" stop-opacity="0.55"/><stop offset="1" stop-color="rgb(240,240,240)" stop-opacity="0"/></radialGradient><ellipse cx="967" cy="294" rx="6.2" ry="6.6" fill="url(#cg67)"/></g><g filter="url(#b2)"><circle cx="368" cy="218" r="3.5" fill="#d8d8d8"/><circle cx="390" cy="196" r="3.5" fill="#d8d8d8"/><circle cx="270" cy="250" r="3.5" fill="#d8d8d8"/><circle cx="306" cy="266" r="3.5" fill="#d8d8d8"/><circle cx="506" cy="360" r="3.5" fill="#d8d8d8"/><circle cx="516" cy="376" r="3.5" fill="#d8d8d8"/><circle cx="236" cy="456" r="3.5" fill="#d8d8d8"/><circle cx="488" cy="258" r="3.5" fill="#d8d8d8"/><circle cx="444" cy="362" r="3.5" fill="#d8d8d8"/><circle cx="262" cy="386" r="3.5" fill="#d8d8d8"/><circle cx="508" cy="188" r="3.5" fill="#d8d8d8"/><circle cx="128" cy="330" r="3.5" fill="#d8d8d8"/><circle cx="112" cy="460" r="3.5" fill="#d8d8d8"/><circle cx="855" cy="320" r="3.5" fill="#d8d8d8"/><circle cx="877" cy="296" r="3.5" fill="#d8d8d8"/><circle cx="981" cy="54" r="3.5" fill="#d8d8d8"/><circle cx="653" cy="74" r="3.5" fill="#d8d8d8"/><circle cx="549" cy="212" r="3.5" fill="#d8d8d8"/><circle cx="645" cy="194" r="3.5" fill="#d8d8d8"/><circle cx="699" cy="200" r="3.5" fill="#d8d8d8"/><circle cx="993" cy="418" r="3.5" fill="#d8d8d8"/><circle cx="829" cy="448" r="3.5" fill="#d8d8d8"/><circle cx="1009" cy="284" r="3.5" fill="#d8d8d8"/><circle cx="506" cy="595" r="3.5" fill="#d8d8d8"/><circle cx="430" cy="923" r="3.5" fill="#d8d8d8"/><circle cx="308" cy="1025" r="3.5" fill="#d8d8d8"/><circle cx="677" cy="923" r="3.5" fill="#d8d8d8"/><circle cx="1031" cy="863" r="3.5" fill="#d8d8d8"/><circle cx="547" cy="565" r="3.5" fill="#d8d8d8"/><circle cx="581" cy="577" r="3.5" fill="#d8d8d8"/><circle cx="545" cy="973" r="3.5" fill="#d8d8d8"/><circle cx="567" cy="975" r="3.5" fill="#d8d8d8"/><circle cx="997" cy="907" r="3.5" fill="#d8d8d8"/><circle cx="423" cy="163" r="3.5" fill="#d8d8d8"/><circle cx="454" cy="151" r="3.5" fill="#d8d8d8"/><circle cx="449" cy="221" r="3.5" fill="#d8d8d8"/><circle cx="552" cy="214" r="3.5" fill="#d8d8d8"/><circle cx="491" cy="258" r="3.5" fill="#d8d8d8"/><circle cx="497" cy="279" r="3.5" fill="#d8d8d8"/><circle cx="532" cy="288" r="3.5" fill="#d8d8d8"/><circle cx="506" cy="189" r="3.5" fill="#d8d8d8"/><circle cx="672" cy="138" r="3.5" fill="#d8d8d8"/><circle cx="654" cy="43" r="3.5" fill="#d8d8d8"/><circle cx="568" cy="174" r="3.5" fill="#d8d8d8"/><circle cx="613" cy="182" r="3.5" fill="#d8d8d8"/><circle cx="644" cy="194" r="3.5" fill="#d8d8d8"/><circle cx="404" cy="94" r="3.5" fill="#d8d8d8"/><circle cx="374" cy="116" r="3.5" fill="#d8d8d8"/><circle cx="593" cy="151" r="3.5" fill="#d8d8d8"/><circle cx="636" cy="289" r="3.5" fill="#d8d8d8"/><circle cx="855" cy="263" r="3.5" fill="#d8d8d8"/><circle cx="131" cy="392" r="3.5" fill="#d8d8d8"/><circle cx="86" cy="373" r="3.5" fill="#d8d8d8"/><circle cx="274" cy="371" r="3.5" fill="#d8d8d8"/><circle cx="526" cy="440" r="3.5" fill="#d8d8d8"/><circle cx="540" cy="443" r="3.5" fill="#d8d8d8"/><circle cx="673" cy="384" r="3.5" fill="#d8d8d8"/><circle cx="485" cy="492" r="3.5" fill="#d8d8d8"/><circle cx="374" cy="420" r="3.5" fill="#d8d8d8"/><circle cx="425" cy="396" r="3.5" fill="#d8d8d8"/><circle cx="862" cy="585" r="3.5" fill="#d8d8d8"/><circle cx="930" cy="538" r="3.5" fill="#d8d8d8"/><circle cx="866" cy="488" r="3.5" fill="#d8d8d8"/><circle cx="955" cy="376" r="3.5" fill="#d8d8d8"/><circle cx="975" cy="435" r="3.5" fill="#d8d8d8"/><circle cx="983" cy="640" r="3.5" fill="#d8d8d8"/><circle cx="53" cy="814" r="3.5" fill="#d8d8d8"/><circle cx="64" cy="794" r="3.5" fill="#d8d8d8"/><circle cx="17" cy="850" r="3.5" fill="#d8d8d8"/><circle cx="262" cy="1028" r="3.5" fill="#d8d8d8"/><circle cx="338" cy="806" r="3.5" fill="#d8d8d8"/><circle cx="318" cy="914" r="3.5" fill="#d8d8d8"/><circle cx="338" cy="905" r="3.5" fill="#d8d8d8"/><circle cx="481" cy="891" r="3.5" fill="#d8d8d8"/><circle cx="437" cy="985" r="3.5" fill="#d8d8d8"/><circle cx="700" cy="979" r="3.5" fill="#d8d8d8"/><circle cx="810" cy="935" r="3.5" fill="#d8d8d8"/></g></svg></div>
<svg style="left:0;top:0" width="2502" height="1301"><line x1="1227.5" y1="198" x2="1227.5" y2="1240" stroke="rgb(150,150,150)" stroke-opacity="0.42" stroke-width="1"/><line x1="1329.5" y1="198" x2="1329.5" y2="1240" stroke="rgb(150,150,150)" stroke-opacity="0.42" stroke-width="1"/><line x1="1431.5" y1="198" x2="1431.5" y2="1240" stroke="rgb(150,150,150)" stroke-opacity="0.42" stroke-width="1"/><line x1="1532.5" y1="198" x2="1532.5" y2="1240" stroke="rgb(150,150,150)" stroke-opacity="0.42" stroke-width="1"/><line x1="1634.5" y1="198" x2="1634.5" y2="1240" stroke="rgb(150,150,150)" stroke-opacity="0.42" stroke-width="1"/><line x1="1736.5" y1="198" x2="1736.5" y2="1240" stroke="rgb(150,150,150)" stroke-opacity="0.42" stroke-width="1"/><line x1="1838.5" y1="198" x2="1838.5" y2="1240" stroke="rgb(150,150,150)" stroke-opacity="0.42" stroke-width="1"/><line x1="1939.5" y1="198" x2="1939.5" y2="1240" stroke="rgb(150,150,150)" stroke-opacity="0.42" stroke-width="1"/><line x1="2041.5" y1="198" x2="2041.5" y2="1240" stroke="rgb(150,150,150)" stroke-opacity="0.42" stroke-width="1"/><line x1="2143.5" y1="198" x2="2143.5" y2="1240" stroke="rgb(150,150,150)" stroke-opacity="0.42" stroke-width="1"/><line x1="2245.5" y1="198" x2="2245.5" y2="1240" stroke="rgb(150,150,150)" stroke-opacity="0.42" stroke-width="1"/><line x1="2346.5" y1="198" x2="2346.5" y2="1240" stroke="rgb(150,150,150)" stroke-opacity="0.42" stroke-width="1"/><line x1="1150" y1="1240.5" x2="2347" y2="1240.5" stroke="rgb(150,150,150)" stroke-opacity="0.42" stroke-width="1"/><line x1="1150" y1="1138.5" x2="2347" y2="1138.5" stroke="rgb(150,150,150)" stroke-opacity="0.42" stroke-width="1"/><line x1="1150" y1="1036.5" x2="2347" y2="1036.5" stroke="rgb(150,150,150)" stroke-opacity="0.42" stroke-width="1"/><line x1="1150" y1="934.5" x2="2347" y2="934.5" stroke="rgb(150,150,150)" stroke-opacity="0.42" stroke-width="1"/><line x1="1150" y1="832.5" x2="2347" y2="832.5" stroke="rgb(150,150,150)" stroke-opacity="0.42" stroke-width="1"/><line x1="1150" y1="731.5" x2="2347" y2="731.5" stroke="rgb(150,150,150)" stroke-opacity="0.42" stroke-width="1"/><line x1="1150" y1="629.5" x2="2347" y2="629.5" stroke="rgb(150,150,150)" stroke-opacity="0.42" stroke-width="1"/><line x1="1150" y1="527.5" x2="2347" y2="527.5" stroke="rgb(150,150,150)" stroke-opacity="0.42" stroke-width="1"/><line x1="1150" y1="425.5" x2="2347" y2="425.5" stroke="rgb(150,150,150)" stroke-opacity="0.42" stroke-width="1"/><line x1="1150" y1="324.5" x2="2347" y2="324.5" stroke="rgb(150,150,150)" stroke-opacity="0.42" stroke-width="1"/><line x1="1150" y1="222.5" x2="2347" y2="222.5" stroke="rgb(150,150,150)" stroke-opacity="0.42" stroke-width="1"/><line x1="1227.5" y1="1240" x2="1227.5" y2="1249" stroke="#666" stroke-width="1"/><line x1="1329.5" y1="1240" x2="1329.5" y2="1249" stroke="#666" stroke-width="1"/><line x1="1431.5" y1="1240" x2="1431.5" y2="1249" stroke="#666" stroke-width="1"/><line x1="1532.5" y1="1240" x2="1532.5" y2="1249" stroke="#666" stroke-width="1"/><line x1="1634.5" y1="1240" x2="1634.5" y2="1249" stroke="#666" stroke-width="1"/><line x1="1736.5" y1="1240" x2="1736.5" y2="1249" stroke="#666" stroke-width="1"/><line x1="1838.5" y1="1240" x2="1838.5" y2="1249" stroke="#666" stroke-width="1"/><line x1="1939.5" y1="1240" x2="1939.5" y2="1249" stroke="#666" stroke-width="1"/><line x1="2041.5" y1="1240" x2="2041.5" y2="1249" stroke="#666" stroke-width="1"/><line x1="2143.5" y1="1240" x2="2143.5" y2="1249" stroke="#666" stroke-width="1"/><line x1="2245.5" y1="1240" x2="2245.5" y2="1249" stroke="#666" stroke-width="1"/><line x1="2346.5" y1="1240" x2="2346.5" y2="1249" stroke="#666" stroke-width="1"/><line x1="1141" y1="1240.5" x2="1150" y2="1240.5" stroke="#666" stroke-width="1"/><line x1="1141" y1="1138.5" x2="1150" y2="1138.5" stroke="#666" stroke-width="1"/><line x1="1141" y1="1036.5" x2="1150" y2="1036.5" stroke="#666" stroke-width="1"/><line x1="1141" y1="934.5" x2="1150" y2="934.5" stroke="#666" stroke-width="1"/><line x1="1141" y1="832.5" x2="1150" y2="832.5" stroke="#666" stroke-width="1"/><line x1="1141" y1="731.5" x2="1150" y2="731.5" stroke="#666" stroke-width="1"/><line x1="1141" y1="629.5" x2="1150" y2="629.5" stroke="#666" stroke-width="1"/><line x1="1141" y1="527.5" x2="1150" y2="527.5" stroke="#666" stroke-width="1"/><line x1="1141" y1="425.5" x2="1150" y2="425.5" stroke="#666" stroke-width="1"/><line x1="1141" y1="324.5" x2="1150" y2="324.5" stroke="#666" stroke-width="1"/><line x1="1141" y1="222.5" x2="1150" y2="222.5" stroke="#666" stroke-width="1"/></svg>
<div class="t" style="left:1227.5px;top:1249.5px;font-size:15.2px;color:#333;transform:translateX(-50%)">0</div>
<div class="t" style="left:1329.3px;top:1249.5px;font-size:15.2px;color:#333;transform:translateX(-50%)">50</div>
<div class="t" style="left:1431.0px;top:1249.5px;font-size:15.2px;color:#333;transform:translateX(-50%)">100</div>
<div class="t" style="left:1532.8px;top:1249.5px;font-size:15.2px;color:#333;transform:translateX(-50%)">150</div>
<div class="t" style="left:1634.5px;top:1249.5px;font-size:15.2px;color:#333;transform:translateX(-50%)">200</div>
<div class="t" style="left:1736.3px;top:1249.5px;font-size:15.2px;color:#333;transform:translateX(-50%)">250</div>
<div class="t" style="left:1838.0px;top:1249.5px;font-size:15.2px;color:#333;transform:translateX(-50%)">300</div>
<div class="t" style="left:1939.8px;top:1249.5px;font-size:15.2px;color:#333;transform:translateX(-50%)">350</div>
<div class="t" style="left:2041.6px;top:1249.5px;font-size:15.2px;color:#333;transform:translateX(-50%)">400</div>
<div class="t" style="left:2143.3px;top:1249.5px;font-size:15.2px;color:#333;transform:translateX(-50%)">450</div>
<div class="t" style="left:2245.1px;top:1249.5px;font-size:15.2px;color:#333;transform:translateX(-50%)">500</div>
<div class="t" style="left:2346.8px;top:1249.5px;font-size:15.2px;color:#333;transform:translateX(-50%)">550</div>
<div class="t" style="right:1365px;top:1232.5px;font-size:15.2px;color:#333">0</div>
<div class="t" style="right:1365px;top:1130.7px;font-size:15.2px;color:#333">50</div>
<div class="t" style="right:1365px;top:1029.0px;font-size:15.2px;color:#333">100</div>
<div class="t" style="right:1365px;top:927.2px;font-size:15.2px;color:#333">150</div>
<div class="t" style="right:1365px;top:825.5px;font-size:15.2px;color:#333">200</div>
<div class="t" style="right:1365px;top:723.7px;font-size:15.2px;color:#333">250</div>
<div class="t" style="right:1365px;top:622.0px;font-size:15.2px;color:#333">300</div>
<div class="t" style="right:1365px;top:520.2px;font-size:15.2px;color:#333">350</div>
<div class="t" style="right:1365px;top:418.4px;font-size:15.2px;color:#333">400</div>
<div class="t" style="right:1365px;top:316.7px;font-size:15.2px;color:#333">450</div>
<div class="t" style="right:1365px;top:214.9px;font-size:15.2px;color:#333">500</div>
<div class="a" style="left:2372px;top:198px;width:36px;height:1042px;border:1px solid #111;background:linear-gradient(#fff 0%,#f0f0f0 12.5%,#d9d9d9 25%,#bdbdbd 37.5%,#969696 50%,#737373 62.5%,#525252 75%,#252525 87.5%,#000 100%)"></div>
<div class="t" style="left:2390px;top:177px;font-size:14.2px;color:#333;transform:translateX(-50%)">2.55e+2</div>
<div class="t" style="left:2390px;top:1250px;font-size:14.2px;color:#333;transform:translateX(-50%)">0e+0</div>
<div class="t" style="left:2420px;top:1231.5px;font-size:15.2px;color:#333">0</div>
<div class="t" style="left:2420px;top:1149.9px;font-size:15.2px;color:#333">20</div>
<div class="t" style="left:2420px;top:1068.4px;font-size:15.2px;color:#333">40</div>
<div class="t" style="left:2420px;top:986.8px;font-size:15.2px;color:#333">60</div>
<div class="t" style="left:2420px;top:905.2px;font-size:15.2px;color:#333">80</div>
<div class="t" style="left:2420px;top:823.7px;font-size:15.2px;color:#333">100</div>
<div class="t" style="left:2420px;top:742.1px;font-size:15.2px;color:#333">120</div>
<div class="t" style="left:2420px;top:660.5px;font-size:15.2px;color:#333">140</div>
<div class="t" style="left:2420px;top:579.0px;font-size:15.2px;color:#333">160</div>
<div class="t" style="left:2420px;top:497.4px;font-size:15.2px;color:#333">180</div>
<div class="t" style="left:2420px;top:415.8px;font-size:15.2px;color:#333">200</div>
<div class="t" style="left:2420px;top:334.2px;font-size:15.2px;color:#333">220</div>
<div class="t" style="left:2420px;top:252.7px;font-size:15.2px;color:#333">240</div>
<svg style="left:0;top:0" width="2502" height="1301"><line x1="2408" y1="1239.5" x2="2417" y2="1239.5" stroke="#555" stroke-width="1"/><line x1="2408" y1="1157.5" x2="2417" y2="1157.5" stroke="#555" stroke-width="1"/><line x1="2408" y1="1075.5" x2="2417" y2="1075.5" stroke="#555" stroke-width="1"/><line x1="2408" y1="994.5" x2="2417" y2="994.5" stroke="#555" stroke-width="1"/><line x1="2408" y1="912.5" x2="2417" y2="912.5" stroke="#555" stroke-width="1"/><line x1="2408" y1="831.5" x2="2417" y2="831.5" stroke="#555" stroke-width="1"/><line x1="2408" y1="749.5" x2="2417" y2="749.5" stroke="#555" stroke-width="1"/><line x1="2408" y1="668.5" x2="2417" y2="668.5" stroke="#555" stroke-width="1"/><line x1="2408" y1="586.5" x2="2417" y2="586.5" stroke="#555" stroke-width="1"/><line x1="2408" y1="504.5" x2="2417" y2="504.5" stroke="#555" stroke-width="1"/><line x1="2408" y1="423.5" x2="2417" y2="423.5" stroke="#555" stroke-width="1"/><line x1="2408" y1="341.5" x2="2417" y2="341.5" stroke="#555" stroke-width="1"/><line x1="2408" y1="260.5" x2="2417" y2="260.5" stroke="#555" stroke-width="1"/></svg>
<div class="a" style="left:2468px;top:30px;width:7px;height:1250px;background:#bdbdbd"></div>
<div class="a" style="left:2475px;top:30px;width:27px;height:1250px;background:linear-gradient(90deg,#eeeeee,#e0e0e0)"></div>
<svg style="left:2481px;top:45px" width="10" height="10" viewBox="0 0 24 24"><path fill="#616161" d="M19.14 12.94c.04-.3.06-.61.06-.94 0-.32-.02-.64-.07-.94l2.03-1.58c.18-.14.23-.41.12-.61l-1.92-3.32c-.12-.22-.37-.29-.59-.22l-2.39.96c-.5-.38-1.03-.7-1.62-.94l-.36-2.54c-.04-.24-.24-.41-.48-.41h-3.84c-.24 0-.43.17-.47.41l-.36 2.54c-.59.24-1.130.57-1.62.94l-2.39-.96c-.22-.08-.47 0-.59.22L2.74 8.87c-.12.21-.08.47.12.61l2.03 1.58c-.05.3-.09.63-.09.94s.02.64.07.94l-2.03 1.58c-.18.14-.23.41-.12.61l1.92 3.32c.12.22.37.29.59.22l2.39-.96c.5.38 1.03.7 1.62.94l.36 2.54c.05.24.24.41.48.41h3.84c.24 0 .44-.17.47-.41l.36-2.54c.59-.24 1.13-.56 1.62-.94l2.39.96c.22.08.47 0 .59-.22l1.92-3.32c.12-.22.07-.47-.12-.61l-2.01-1.58zM12 15.6c-1.98 0-3.6-1.62-3.6-3.6s1.62-3.6 3.6-3.6 3.6 1.62 3.6 3.6-1.62 3.6-3.6 3.6z"/></svg>
<svg style="left:2485px;top:50px" width="16" height="16" viewBox="0 0 24 24"><path fill="#616161" d="M19.14 12.94c.04-.3.06-.61.06-.94 0-.32-.02-.64-.07-.94l2.03-1.58c.18-.14.23-.41.12-.61l-1.92-3.32c-.12-.22-.37-.29-.59-.22l-2.39.96c-.5-.38-1.03-.7-1.62-.94l-.36-2.54c-.04-.24-.24-.41-.48-.41h-3.84c-.24 0-.43.17-.47.41l-.36 2.54c-.59.24-1.130.57-1.62.94l-2.39-.96c-.22-.08-.47 0-.59.22L2.74 8.87c-.12.21-.08.47.12.61l2.03 1.58c-.05.3-.09.63-.09.94s.02.64.07.94l-2.03 1.58c-.18.14-.23.41-.12.61l1.92 3.32c.12.22.37.29.59.22l2.39-.96c.5.38 1.03.7 1.62.94l.36 2.54c.05.24.24.41.48.41h3.84c.24 0 .44-.17.47-.41l.36-2.54c.59-.24 1.13-.56 1.62-.94l2.39.96c.22.08.47 0 .59-.22l1.92-3.32c.12-.22.07-.47-.12-.61l-2.01-1.58zM12 15.6c-1.98 0-3.6-1.62-3.6-3.6s1.62-3.6 3.6-3.6 3.6 1.62 3.6 3.6-1.62 3.6-3.6 3.6z"/></svg>
<svg style="left:2482px;top:99px" width="19" height="19" viewBox="0 0 24 24"><path fill="#616161" d="M20 8h-2.81c-.45-.78-1.07-1.45-1.82-1.96L17 4.41 15.59 3l-2.17 2.17C12.96 5.06 12.49 5 12 5c-.49 0-.96.06-1.410.17L8.41 3 7 4.41l1.62 1.63C7.88 6.55 7.26 7.22 6.81 8H4v2h2.09c-.05.33-.09.66-.09 1v1H4v2h2v1c0 .34.04.67.09 1H4v2h2.81c1.04 1.79 2.97 3 5.19 3s4.15-1.21 5.19-3H20v-2h-2.09c.05-.33.09-.66.09-1v-1h2v-2h-2v-1c0-.34-.04-.67-.09-1H20V8zm-6 8h-4v-2h4v2zm0-4h-4v-2h4v2z"/></svg>
<div class="a" style="left:442px;top:1274px;width:2033px;height:6px;background:#bdbdbd"></div>
<div class="a" style="left:2px;top:1280px;width:2500px;height:21px;background:#eeeeee"></div>
<div class="t" style="left:30px;top:1285px;font-size:13.6px;color:#1f1f1f">Simple</div>
<div class="a" style="left:77px;top:1284px;width:34px;height:15px;border-radius:8px;background:#bdbdbd"></div>
<div class="a" style="left:79px;top:1286px;width:11px;height:11px;border-radius:6px;background:#fff"></div>
<div class="t" style="left:137px;top:1285px;font-size:13.6px;color:#1f1f1f">0</div>
<div class="a" style="left:157px;top:1285px;width:15px;height:16px;background:#3c3c3c"></div>
<div class="t" style="left:159px;top:1288px;font-size:9px;color:#fff;font-weight:bold">$_</div>
<div class="t" style="left:181px;top:1285px;font-size:13.6px;color:#1f1f1f">1</div>
<svg style="left:199px;top:1285px" width="14" height="14" viewBox="0 0 14 14"><rect x="3" y="3" width="8" height="8" stroke="#555" stroke-width="1.4" fill="none"/><rect x="5.5" y="5.5" width="3" height="3" fill="#555"/><path d="M5 0.5V3M9 0.5V3M5 11V13.5M9 11V13.5M0.5 5H3M0.5 9H3M11 5H13.5M11 9H13.5" stroke="#555" stroke-width="1.2"/></svg>
<div class="t" style="right:14px;top:1285px;font-size:13.9px;color:#1f1f1f">sub-408021_ses-758519303_behavior+ophys.h5</div>
<div class="a" style="left:0;top:1289px;width:14px;height:12px;background:#0a0a0a"></div>
<div class="a" style="left:2px;top:1281px;width:20px;height:20px;border-bottom-left-radius:12px;background:#eeeeee"></div>
</body></html>
